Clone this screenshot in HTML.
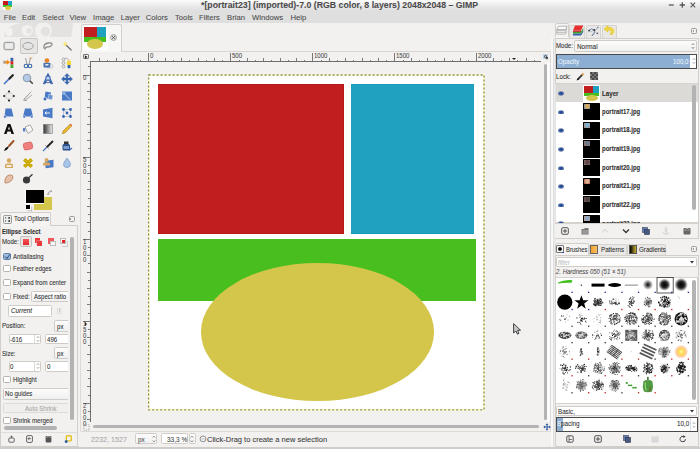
<!DOCTYPE html>
<html><head><meta charset="utf-8">
<style>
*{box-sizing:border-box;margin:0;padding:0}
html,body{width:700px;height:449px;overflow:hidden;background:#f2f1f0;font-family:"Liberation Sans",sans-serif;color:#3c3c3c}
.a{position:absolute}
.t{position:absolute;white-space:pre;line-height:1;-webkit-text-stroke:0.07px currentColor}
#top{left:0;top:0;width:700px;height:23px;background:linear-gradient(#fcfcfc 0px,#e9e9e9 6px,#dfdfdf 11px,#dfdfdf 23px)}
.menu{font-size:7.7px;color:#4a4a4a;top:13.5px}
.rl{font-size:6.8px;color:#4a4a4a;transform:scaleX(0.885);transform-origin:0 0}
.ui{font-size:6px;color:#3c3c3c}
</style></head><body>
<div id="top" class="a"></div>
<!-- app icon -->
<div class="a" style="left:2.7px;top:0.8px;width:9.6px;height:9.4px;background:#fff;border-radius:1px"></div>
<div class="a" style="left:3px;top:1px;width:5px;height:4px;background:#c8171c"></div>
<div class="a" style="left:8px;top:1px;width:3.8px;height:4px;background:#22a6d0"></div>
<div class="a" style="left:3px;top:5px;width:8.8px;height:1.8px;background:#3ec02a"></div>
<div class="a" style="left:4.5px;top:5.8px;width:6px;height:4px;border-radius:50%;background:#dcc840"></div>
<div class="t" style="left:201px;top:0.9px;font-size:8.75px;font-weight:bold;color:#4c4c4c">*[portrait23] (imported)-7.0 (RGB color, 8 layers) 2048x2048 – GIMP</div>
<!-- window controls -->
<svg class="a" style="left:660px;top:0" width="40" height="12" viewBox="660 0 40 12">
<path d="M668.8 5 H673.8" stroke="#5a5a5a" stroke-width="1.3"/>
<path d="M679.6 5 H685 M682.3 2.3 V7.7" stroke="#5a5a5a" stroke-width="1.3"/>
<path d="M690.6 2.7 L695.1 7.3 M695.1 2.7 L690.6 7.3" stroke="#5a5a5a" stroke-width="1.2"/>
</svg>
<!-- menu -->
<div class="t menu" style="left:3.7px">File</div>
<div class="t menu" style="left:22px">Edit</div>
<div class="t menu" style="left:42.5px">Select</div>
<div class="t menu" style="left:69.5px">View</div>
<div class="t menu" style="left:93px">Image</div>
<div class="t menu" style="left:120.7px">Layer</div>
<div class="t menu" style="left:145.7px">Colors</div>
<div class="t menu" style="left:175px">Tools</div>
<div class="t menu" style="left:199px">Filters</div>
<div class="t menu" style="left:227px">Brian</div>
<div class="t menu" style="left:252px">Windows</div>
<div class="t menu" style="left:290.5px">Help</div>

<!-- LEFT PANEL -->
<!-- wilber decoration -->
<svg class="a" style="left:0;top:0" width="80" height="40" viewBox="0 0 80 40">
<defs><clipPath id="wb"><path d="M4 36.9 C4.5 29 11 24.3 21 22.9 L73.1 22.9 L71.3 36.9 Z"/></clipPath></defs>
<g clip-path="url(#wb)">
<rect x="0" y="22" width="80" height="16" fill="#e3e2e0"/>
<ellipse cx="9.1" cy="32" rx="3.6" ry="4.4" fill="#f2f1f0"/>
<circle cx="27.2" cy="30.5" r="5.6" fill="#f2f1f0"/>
<circle cx="29" cy="30.8" r="2.6" fill="#e3e2e0"/>
<circle cx="43.4" cy="30.5" r="8.4" fill="#f2f1f0"/>
<circle cx="45.4" cy="31.4" r="4.7" fill="#e3e2e0"/>
</g>
</svg>
<!-- selected tool button -->
<div class="a" style="left:19.7px;top:38.3px;width:18px;height:15.3px;border:0.8px solid #c9c6c2;border-radius:2px;background:#e6e5e3"></div>
<svg class="a" style="left:3.4px;top:39.7px" width="12" height="12" viewBox="0 0 12 12"><rect x="1" y="2.3" width="10" height="7.4" rx="1.3" fill="#dcdcdc" stroke="#8a8a8a" stroke-width="0.9"/><rect x="2.2" y="3.5" width="7.6" height="5" fill="#ececec"/></svg>
<svg class="a" style="left:22.4px;top:39.7px" width="12" height="12" viewBox="0 0 12 12"><ellipse cx="6" cy="6" rx="5.2" ry="3.5" fill="#e3e3e3" stroke="#9a9a9a" stroke-width="0.9"/></svg>
<svg class="a" style="left:41.6px;top:39.7px" width="12" height="12" viewBox="0 0 12 12"><path d="M2 8.5 Q1 4 6 3 Q10.5 2.5 10 4.5 Q9 7 4.5 7.2 Q3 7.3 3.2 9.5" fill="none" stroke="#8a8a8a" stroke-width="1.3"/></svg>
<svg class="a" style="left:60.6px;top:39.7px" width="12" height="12" viewBox="0 0 12 12"><path d="M5.2 5.2 L10.2 10" stroke="#6a6a6a" stroke-width="1.2" stroke-linecap="round"/><circle cx="4.2" cy="4" r="1.7" fill="#f5e050"/><circle cx="4.2" cy="4" r="0.7" fill="#fffbd0"/></svg>
<svg class="a" style="left:3.4px;top:56.6px" width="12" height="12" viewBox="0 0 12 12"><rect x="7.5" y="0.8" width="2.8" height="3.4" fill="#3465a4"/><rect x="7.5" y="4.2" width="2.8" height="3.4" fill="#d42020"/><rect x="7.5" y="7.6" width="2.8" height="3.4" fill="#3faa2a"/><path d="M0.6 4 H4 V2.6 L7 5.2 L4 7.8 V6.4 H0.6 Z" fill="#f08a1c"/><rect x="0.3" y="3.6" width="2" height="3" fill="#aaa"/></svg>
<svg class="a" style="left:22.4px;top:56.6px" width="12" height="12" viewBox="0 0 12 12"><path d="M3.5 1 L5 7 M8.5 1 L7 7" stroke="#999" stroke-width="1" fill="none"/><path d="M7 1 H10.5" stroke="#e69a3a" stroke-width="0.8"/><circle cx="4" cy="9" r="1.8" fill="none" stroke="#3a66a8" stroke-width="1.1"/><circle cx="8" cy="9" r="1.8" fill="none" stroke="#3a66a8" stroke-width="1.1"/><rect x="5" y="8.4" width="2" height="1.2" fill="#3a66a8"/></svg>
<svg class="a" style="left:41.6px;top:56.6px" width="12" height="12" viewBox="0 0 12 12"><path d="M6.5 7 Q9 6 10.5 8 Q11.5 10 10 11 H5 Z" fill="#f4f4f4" stroke="#aaa" stroke-width="0.6"/><rect x="1.5" y="5.8" width="6.8" height="4.8" rx="0.8" fill="#4570b8"/><circle cx="4.9" cy="3.6" r="2.4" fill="#e8832a"/><rect x="3.3" y="7" width="3.2" height="1.6" fill="#e8e8e8"/></svg>
<svg class="a" style="left:60.6px;top:56.6px" width="12" height="12" viewBox="0 0 12 12"><circle cx="2.5" cy="2.5" r="1.4" fill="none" stroke="#999" stroke-width="0.8"/><circle cx="2.5" cy="6" r="1.4" fill="none" stroke="#999" stroke-width="0.8"/><circle cx="2.5" cy="9.5" r="1.4" fill="none" stroke="#999" stroke-width="0.8"/><path d="M3.5 1.5 Q6 0 8 3" stroke="#999" stroke-width="0.7" fill="none"/><path d="M6.3 3.5 L9.7 3.5 L10.3 7.5 L8 8.5 L5.7 7.5 Z" fill="#f2d23a"/><rect x="6.6" y="8" width="2.8" height="3.2" fill="#2e5fa8"/></svg>
<svg class="a" style="left:3.4px;top:72.8px" width="12" height="12" viewBox="0 0 12 12"><path d="M1.5 10.5 L7 5" stroke="#4a7ac6" stroke-width="1.7" stroke-linecap="round"/><path d="M6.5 5.5 L9.8 2.2" stroke="#222" stroke-width="2.2" stroke-linecap="round"/></svg>
<svg class="a" style="left:22.4px;top:72.8px" width="12" height="12" viewBox="0 0 12 12"><circle cx="5" cy="5" r="3.8" fill="#b5cbe6" stroke="#8a9bb0" stroke-width="1"/><path d="M7.8 7.8 L10.8 10.8" stroke="#444" stroke-width="1.5"/></svg>
<svg class="a" style="left:41.6px;top:72.8px" width="12" height="12" viewBox="0 0 12 12"><rect x="5" y="0.5" width="2" height="2.5" fill="#4a72b8"/><path d="M4.2 2.8 H7.8 L8.6 6 L10.8 10.8 L9 11 L7 7.5 H5 L3 11 L1.2 10.8 L3.4 6 Z" fill="#4a7ac6" stroke="#2d4f90" stroke-width="0.5"/><rect x="4.6" y="4" width="2.8" height="2.5" fill="#c8d8f0"/><path d="M2.5 9 Q6 10.5 9.5 9" stroke="#2d4f90" stroke-width="0.8" fill="none"/></svg>
<svg class="a" style="left:60.6px;top:72.8px" width="12" height="12" viewBox="0 0 12 12"><path d="M6 0.4 L8.4 3.1 H6.9 V5.1 H8.9 V3.6 L11.6 6 L8.9 8.4 V6.9 H6.9 V8.9 H8.4 L6 11.6 L3.6 8.9 H5.1 V6.9 H3.1 V8.4 L0.4 6 L3.1 3.6 V5.1 H5.1 V3.1 H3.6 Z" fill="#3a6ab8" stroke="#2a4f90" stroke-width="0.3" stroke-linejoin="round"/></svg>
<svg class="a" style="left:3.4px;top:90.1px" width="12" height="12" viewBox="0 0 12 12"><ellipse cx="6" cy="6" rx="4.2" ry="3" fill="#ececec" stroke="#bbb" stroke-width="0.6"/><circle cx="6" cy="1.5" r="1.1" fill="#222"/><circle cx="6" cy="10.5" r="1.1" fill="#222"/><circle cx="1.2" cy="6" r="1.1" fill="#222"/><circle cx="10.8" cy="6" r="1.1" fill="#222"/></svg>
<svg class="a" style="left:22.4px;top:90.1px" width="12" height="12" viewBox="0 0 12 12"><path d="M1.5 10 L8 3 M3 10.3 L10 5 M2 9 L9.5 1.5" stroke="#9a9a9a" stroke-width="0.8" fill="none"/><path d="M1.5 10 L4.5 10.5" stroke="#777" stroke-width="0.8"/></svg>
<svg class="a" style="left:41.6px;top:90.1px" width="12" height="12" viewBox="0 0 12 12"><path d="M3.5 1.5 L9 2.5 L8 9 L2.5 8 Z" fill="#4a7ac6"/><path d="M7 4 L11 5.5 L10 10 L6 9 Z" fill="#6a92d0" stroke="#fff" stroke-width="0.4"/><circle cx="3" cy="9" r="1.8" fill="#3a6ab8" stroke="#fff" stroke-width="0.5"/></svg>
<svg class="a" style="left:60.6px;top:90.1px" width="12" height="12" viewBox="0 0 12 12"><rect x="1" y="1.5" width="10" height="9" fill="#4a7ac6"/><path d="M2 2.5 L9 9.5" stroke="#cfe0f5" stroke-width="0.8"/><rect x="1" y="1.5" width="3.5" height="3" fill="#8fb0e0"/></svg>
<svg class="a" style="left:3.4px;top:106.6px" width="12" height="12" viewBox="0 0 12 12"><path d="M2.5 1.5 H8.5 L10.5 9.5 H1.5 Z" fill="#4a7ac6"/><circle cx="2" cy="9.8" r="1.4" fill="#3a6ab8" stroke="#fff" stroke-width="0.5"/></svg>
<svg class="a" style="left:22.4px;top:106.6px" width="12" height="12" viewBox="0 0 12 12"><path d="M3 1.5 H9 L11 9.5 H1 Z" fill="#4a7ac6"/><circle cx="2.2" cy="9.8" r="1.3" fill="#3a6ab8" stroke="#fff" stroke-width="0.5"/><circle cx="9.8" cy="9.8" r="1.3" fill="#3a6ab8" stroke="#fff" stroke-width="0.5"/></svg>
<svg class="a" style="left:41.6px;top:106.6px" width="12" height="12" viewBox="0 0 12 12"><path d="M1 2.5 L10.5 0.8 V11.2 L1 9.5 Z" fill="#4a7ac6"/><path d="M3 6 H8 M4.5 4.5 L3 6 L4.5 7.5" stroke="#fff" stroke-width="0.9" fill="none"/></svg>
<svg class="a" style="left:60.6px;top:106.6px" width="12" height="12" viewBox="0 0 12 12"><path d="M2.5 2.5 L9.5 2.5 L9.5 9.5 L2.5 9.5 Z M2.5 2.5 L6 6 L9.5 9.5" stroke="#9ab" stroke-width="0.6" fill="none"/><circle cx="2.5" cy="2.5" r="1.4" fill="#3465b4"/><circle cx="9.5" cy="2.5" r="1.4" fill="#3465b4"/><circle cx="2.5" cy="9.5" r="1.4" fill="#3465b4"/><circle cx="9.5" cy="9.5" r="1.4" fill="#3465b4"/><circle cx="6" cy="6" r="1.4" fill="#3465b4"/></svg>
<svg class="a" style="left:3.4px;top:123.1px" width="12" height="12" viewBox="0 0 12 12"><path d="M1 11 L4.6 1 H7.4 L11 11 H8.4 L7.6 8.6 H4.4 L3.6 11 Z M5 6.6 H7 L6 3.6 Z" fill="#111"/></svg>
<svg class="a" style="left:22.4px;top:123.1px" width="12" height="12" viewBox="0 0 12 12"><path d="M3 4 L8 1.8 L11 7 L6 10.5 Z" fill="#f7f7f7" stroke="#888" stroke-width="0.7"/><rect x="1" y="5" width="2.3" height="3.5" fill="#5a80c0"/></svg>
<svg class="a" style="left:41.6px;top:123.1px" width="12" height="12" viewBox="0 0 12 12"><defs><linearGradient id="gb" x1="0" x2="1"><stop offset="0" stop-color="#333"/><stop offset="1" stop-color="#eee"/></linearGradient></defs><rect x="1.5" y="1.5" width="9" height="9" fill="url(#gb)" stroke="#777" stroke-width="0.6"/></svg>
<svg class="a" style="left:60.6px;top:123.1px" width="12" height="12" viewBox="0 0 12 12"><path d="M1.3 10.7 L2 8 L9 1.2 L10.8 3 L4 9.9 Z" fill="#e8b830" stroke="#a07010" stroke-width="0.5"/><path d="M9 1.2 L10.8 3 L11.3 2.3 L9.7 0.7 Z" fill="#e04040"/></svg>
<svg class="a" style="left:3.4px;top:140.4px" width="12" height="12" viewBox="0 0 12 12"><path d="M6 6 L10.5 1" stroke="#a0562a" stroke-width="2" stroke-linecap="round"/><path d="M0.8 11 Q2 7.5 4.5 6.5 L5.8 7.6 Q4.8 10 0.8 11 Z" fill="#111"/></svg>
<svg class="a" style="left:22.4px;top:140.4px" width="12" height="12" viewBox="0 0 12 12"><rect x="1.5" y="2.5" width="9" height="7" rx="2" fill="#f08080" stroke="#d05050" stroke-width="0.6" transform="rotate(-12 6 6)"/></svg>
<svg class="a" style="left:41.6px;top:140.4px" width="12" height="12" viewBox="0 0 12 12"><path d="M5.5 6.5 L10.5 1.5" stroke="#222" stroke-width="1.8" stroke-linecap="round"/><path d="M1 11 L5 7" stroke="#4a7ac6" stroke-width="1.2"/><path d="M3.5 5.5 L6.5 8.5" stroke="#555" stroke-width="0.8"/></svg>
<svg class="a" style="left:60.6px;top:140.4px" width="12" height="12" viewBox="0 0 12 12"><rect x="1.5" y="4" width="7.5" height="6.5" rx="1.5" fill="#2d4f88"/><rect x="3" y="1.5" width="4.5" height="2.5" fill="#333"/><rect x="2.5" y="6" width="5.5" height="3" fill="#7a9cd0"/><path d="M8 10.5 L11 8" stroke="#3a6ab8" stroke-width="1.2"/></svg>
<svg class="a" style="left:3.4px;top:156.9px" width="12" height="12" viewBox="0 0 12 12"><circle cx="6" cy="3.5" r="2.2" fill="#d4a860"/><path d="M2 11 V8 Q2 6.5 4 6.5 H8 Q10 6.5 10 8 V11 Z" fill="#d4a860"/><rect x="3.5" y="8.2" width="5" height="1.6" fill="#fff"/></svg>
<svg class="a" style="left:22.4px;top:156.9px" width="12" height="12" viewBox="0 0 12 12"><path d="M2 3.5 L3.5 2 L10 8.5 L8.5 10 Z M8.5 2 L10 3.5 L3.5 10 L2 8.5 Z" fill="#e5c420" stroke="#c8a800" stroke-width="1.6" stroke-linejoin="round"/></svg>
<svg class="a" style="left:41.6px;top:156.9px" width="12" height="12" viewBox="0 0 12 12"><rect x="3.5" y="4" width="8" height="7.5" fill="#4a7ac6" transform="skewY(-6)"/><circle cx="4.5" cy="3" r="2" fill="#d4a860"/><path d="M1 8.5 V6.5 Q1 5.5 2.5 5.5 H6.5 Q8 5.5 8 6.5 V8.5 Z" fill="#d4a860"/></svg>
<svg class="a" style="left:60.6px;top:156.9px" width="12" height="12" viewBox="0 0 12 12"><path d="M6 1 Q9.5 5 9.5 7.5 Q9.5 10.5 6 10.5 Q2.5 10.5 2.5 7.5 Q2.5 5 6 1 Z" fill="#a8c4e8" stroke="#6a8cc0" stroke-width="0.6"/></svg>
<svg class="a" style="left:3.4px;top:173.4px" width="12" height="12" viewBox="0 0 12 12"><path d="M2 10 Q1 6 4 3 Q7 1 9.5 2.5 Q11 5 8 8 Q5 10.5 2 10 Z" fill="#e6c0a8" stroke="#b07850" stroke-width="0.7"/></svg>
<svg class="a" style="left:22.4px;top:173.4px" width="12" height="12" viewBox="0 0 12 12"><circle cx="4.5" cy="7" r="3.6" fill="#3a3a3a"/><path d="M6.5 5 L10.5 1.2" stroke="#3a3a3a" stroke-width="1.3"/></svg>
<!-- FG/BG -->
<div class="a" style="left:33.9px;top:197px;width:18.1px;height:13px;background:#d3c64b"></div>
<div class="a" style="left:25.3px;top:189.5px;width:19.2px;height:14.3px;background:#fff"></div>
<div class="a" style="left:25.8px;top:190px;width:18.2px;height:13.3px;background:#000"></div>
<div class="a" style="left:26px;top:205px;width:3.6px;height:3.6px;background:#000;box-shadow:1.2px 1.2px 0 0.3px #fff, 1.8px 1.8px 0 0.3px #999"></div>
<svg class="a" style="left:46.5px;top:189.5px" width="6" height="6" viewBox="0 0 6 6"><path d="M1 4.5 Q1 1 4.5 1 M3.5 0.2 L4.8 1 L3.5 2 M0.2 3.5 L1 4.8 L2 3.5" fill="none" stroke="#888" stroke-width="0.7"/></svg>
<!-- tool options tab -->
<div class="a" style="left:0.3px;top:211.7px;width:50.5px;height:14px;border:0.8px solid #d2cfca;border-bottom:none;border-radius:2px 2px 0 0;background:#f5f4f3"></div>
<div class="a" style="left:50.5px;top:225px;width:27px;height:0.8px;background:#d2cfca"></div>
<div class="a" style="left:2.8px;top:215.2px;width:8.8px;height:8.5px;border:0.8px solid #999;border-radius:1.5px;background:#f0f0f0"></div>
<svg class="a" style="left:2.8px;top:215.2px" width="9" height="9" viewBox="0 0 9 9"><path d="M2.6 2.2 V3.4 M2.6 5.4 V6.6 M6.2 2.2 L5.4 3.2 H7 Z M6.2 6.8 L5.4 5.8 H7 Z" stroke="#333" stroke-width="0.9" fill="#333"/></svg>
<div class="t" style="left:14.3px;top:216.2px;font-size:7.12px;color:#2e2e2e;transform:scaleX(0.885);transform-origin:0 0">Tool Options</div>
<div class="a" style="left:68.6px;top:216px;width:6px;height:6px;border:0.8px solid #999;border-radius:1.5px"></div>
<div class="a" style="left:70.4px;top:217.9px;width:0;height:0;border-top:1.1px solid transparent;border-bottom:1.1px solid transparent;border-right:1.6px solid #444"></div>
<!-- panel frame -->
<div class="a" style="left:0.3px;top:225px;width:77.5px;height:221.5px;border:0.8px solid #d2cfca;border-top:none"></div>
<div class="t" style="left:2px;top:229.30px;font-size:6.78px;font-weight:bold;color:#2e2e2e;transform:scaleX(0.885);transform-origin:0 0">Ellipse Select</div>
<div class="t" style="left:2px;top:239.49px;font-size:6.89px;color:#2e2e2e;transform:scaleX(0.885);transform-origin:0 0">Mode:</div>
<div class="a" style="left:20.4px;top:236px;width:11.3px;height:11.3px;border:0.8px solid #c3c0bb;border-radius:1.5px;background:#e7e6e4"></div>
<div class="a" style="left:23.1px;top:238.8px;width:6.1px;height:6.2px;background:linear-gradient(#f4575a,#e5252a)"></div>
<div class="a" style="left:35px;top:238.3px;width:5px;height:5px;background:#e9373b"></div>
<div class="a" style="left:37px;top:240.5px;width:5.2px;height:5.2px;background:#e83a3e;box-shadow:-0.5px -0.5px 0 #f7a0a0"></div>
<div class="a" style="left:48px;top:238.3px;width:5.5px;height:5.5px;background:#f05a5e"></div>
<div class="a" style="left:50px;top:240.5px;width:5.5px;height:5.5px;background:#fafafa;border:0.5px solid #bbb"></div>
<div class="a" style="left:60.4px;top:238.3px;width:6px;height:6px;border:0.6px solid #bbb;background:#fafafa"></div>
<div class="a" style="left:62.2px;top:240.2px;width:3px;height:3px;background:#e5252a"></div>
<div class="a" style="left:62px;top:241px;width:6px;height:6px;border:0.6px solid #ccc;border-top:none;border-left:none"></div>
<!-- checkboxes -->
<div class="a" style="left:3.2px;top:252.5px;width:7.6px;height:7px;border:0.8px solid #5a7ea8;border-radius:1.5px;background:linear-gradient(#a8c3e0,#86a9d0)"></div>
<svg class="a" style="left:3.6px;top:252.8px" width="7" height="7" viewBox="0 0 7 7"><path d="M1.2 3.6 L2.9 5.4 L6.2 1" fill="none" stroke="#2f4a6e" stroke-width="1"/></svg>
<div class="t" style="left:13.4px;top:253.60px;font-size:6.78px;color:#2e2e2e;transform:scaleX(0.885);transform-origin:0 0">Antialiasing</div>
<div class="a" style="left:3.2px;top:265px;width:7.6px;height:7.2px;border:0.8px solid #b5b2ad;border-radius:1.5px;background:#fff"></div>
<div class="t" style="left:13.4px;top:266.30px;font-size:6.78px;color:#2e2e2e;transform:scaleX(0.885);transform-origin:0 0">Feather edges</div>
<div class="a" style="left:3.2px;top:278.6px;width:7.6px;height:7.2px;border:0.8px solid #b5b2ad;border-radius:1.5px;background:#fff"></div>
<div class="t" style="left:13.4px;top:279.89px;font-size:6.89px;color:#2e2e2e;transform:scaleX(0.885);transform-origin:0 0">Expand from center</div>
<div class="a" style="left:3.2px;top:292.8px;width:7.6px;height:7.2px;border:0.8px solid #b5b2ad;border-radius:1.5px;background:#fff"></div>
<div class="t" style="left:13.4px;top:294.09px;font-size:6.89px;color:#2e2e2e;transform:scaleX(0.885);transform-origin:0 0">Fixed:</div>
<div class="a" style="left:31.2px;top:290.8px;width:40px;height:11.6px;border:0.8px solid #cfccc7;border-radius:1.5px;background:linear-gradient(#fcfcfc,#f0f0f0)"></div>
<div class="t" style="left:33.8px;top:294.09px;font-size:6.89px;color:#2e2e2e;transform:scaleX(0.885);transform-origin:0 0">Aspect ratio</div>
<div class="a" style="left:8px;top:305px;width:43.7px;height:11.6px;border:0.8px solid #cfccc7;border-radius:1.5px;background:#fff"></div>
<div class="t" style="left:10.5px;top:308.26px;font-size:7.12px;font-style:italic;color:#2e2e2e;transform:scaleX(0.885);transform-origin:0 0">Current</div>
<div class="a" style="left:56.8px;top:307.6px;width:4.6px;height:6.4px;border:0.6px solid #dcdad6;border-radius:1px;background:#f5f5f5"></div>
<div class="a" style="left:58.6px;top:309.4px;width:1px;height:3px;background:#ccc"></div>
<!-- position -->
<div class="t" style="left:2px;top:322.89px;font-size:6.89px;color:#2e2e2e;transform:scaleX(0.885);transform-origin:0 0">Position:</div>
<div class="a" style="left:54.3px;top:319.9px;width:17px;height:12.1px;border:0.8px solid #cfccc7;border-radius:1.5px;background:linear-gradient(#fcfcfc,#f0f0f0)"></div>
<div class="t" style="left:57px;top:323.69px;font-size:6.89px;color:#2e2e2e;transform:scaleX(0.885);transform-origin:0 0">px</div>
<div class="a" style="left:8.6px;top:333.8px;width:32.4px;height:10.4px;border:0.8px solid #cfccc7;border-radius:1.5px;background:#fff"></div>
<div class="a" style="left:34.4px;top:335.2px;width:0.6px;height:8.4px;background:#dcdad6"></div>
<svg class="a" style="left:35.7px;top:335.1px" width="4" height="8" viewBox="0 0 4 8"><path d="M0.7 2.9 L2 1.5 L3.3 2.9 M0.7 5.1 L2 6.5 L3.3 5.1" fill="none" stroke="#888" stroke-width="0.7"/></svg>
<div class="t" style="left:10.3px;top:336.59px;font-size:6.89px;color:#2e2e2e;transform:scaleX(0.885);transform-origin:0 0">-616</div>
<div class="a" style="left:44.5px;top:333.8px;width:30px;height:10.4px;border:0.8px solid #cfccc7;border-radius:1.5px;background:#fff"></div>
<div class="t" style="left:47px;top:336.59px;font-size:6.89px;color:#2e2e2e;transform:scaleX(0.885);transform-origin:0 0">496</div>
<div class="t" style="left:2px;top:350.69px;font-size:6.89px;color:#2e2e2e;transform:scaleX(0.885);transform-origin:0 0">Size:</div>
<div class="a" style="left:54.3px;top:347.3px;width:17px;height:12px;border:0.8px solid #cfccc7;border-radius:1.5px;background:linear-gradient(#fcfcfc,#f0f0f0)"></div>
<div class="t" style="left:57px;top:350.89px;font-size:6.89px;color:#2e2e2e;transform:scaleX(0.885);transform-origin:0 0">px</div>
<div class="a" style="left:8.6px;top:361px;width:32.4px;height:10.5px;border:0.8px solid #cfccc7;border-radius:1.5px;background:#fff"></div>
<div class="a" style="left:34.4px;top:362.3px;width:0.6px;height:8.8px;background:#dcdad6"></div>
<svg class="a" style="left:35.7px;top:362.3px" width="4" height="8" viewBox="0 0 4 8"><path d="M0.7 2.9 L2 1.5 L3.3 2.9 M0.7 5.1 L2 6.5 L3.3 5.1" fill="none" stroke="#888" stroke-width="0.7"/></svg>
<div class="t" style="left:10.3px;top:363.89px;font-size:6.89px;color:#2e2e2e;transform:scaleX(0.885);transform-origin:0 0">0</div>
<div class="a" style="left:44.5px;top:361px;width:30px;height:10.5px;border:0.8px solid #cfccc7;border-radius:1.5px;background:#fff"></div>
<div class="t" style="left:47px;top:363.89px;font-size:6.89px;color:#2e2e2e;transform:scaleX(0.885);transform-origin:0 0">0</div>
<div class="a" style="left:3.2px;top:376px;width:7.6px;height:7.2px;border:0.8px solid #b5b2ad;border-radius:1.5px;background:#fff"></div>
<div class="t" style="left:13.4px;top:377.29px;font-size:6.89px;color:#2e2e2e;transform:scaleX(0.885);transform-origin:0 0">Highlight</div>
<div class="a" style="left:2.8px;top:388.3px;width:68px;height:11.5px;border:0.8px solid #cfccc7;border-radius:1.5px;background:linear-gradient(#fcfcfc,#f0f0f0)"></div>
<div class="t" style="left:5.2px;top:391.49px;font-size:6.89px;color:#2e2e2e;transform:scaleX(0.885);transform-origin:0 0">No guides</div>
<div class="a" style="left:2.8px;top:403px;width:68px;height:10px;border:0.8px solid #dddbd7;border-radius:1.5px;background:#f0efee"></div>
<div class="t" style="left:24.8px;top:405.69px;font-size:6.89px;color:#a5a5a5;transform:scaleX(0.885);transform-origin:0 0">Auto Shrink</div>
<div class="a" style="left:3.2px;top:417px;width:7.6px;height:7.2px;border:0.8px solid #b5b2ad;border-radius:1.5px;background:#fff"></div>
<div class="t" style="left:13.4px;top:418.29px;font-size:6.89px;color:#2e2e2e;transform:scaleX(0.885);transform-origin:0 0">Shrink merged</div>
<div class="a" style="left:68.4px;top:288px;width:8.6px;height:127px;background:#f2f1f0"></div>
<!-- scrollbars -->
<div class="a" style="left:70.2px;top:237.4px;width:3.5px;height:182.6px;border-radius:1.7px;background:#b3b3b3"></div>
<div class="a" style="left:3.8px;top:426px;width:53.2px;height:4px;border-radius:2px;background:#b3b3b3"></div>
<div class="a" style="left:0.6px;top:431.5px;width:77px;height:0.8px;background:#dedcd8"></div>
<!-- bottom toolbar icons -->
<svg class="a" style="left:7.5px;top:435px" width="7" height="8" viewBox="0 0 7 8"><rect x="0.8" y="3" width="5.4" height="4.2" rx="1" fill="none" stroke="#555" stroke-width="0.9"/><path d="M3.5 0.5 V2.5 M2.4 1.5 L3.5 2.6 L4.6 1.5" stroke="#555" stroke-width="0.8" fill="none"/></svg>
<svg class="a" style="left:25.8px;top:434.6px" width="7" height="8" viewBox="0 0 7 8"><rect x="0.6" y="0.6" width="5.8" height="6.8" rx="1.2" fill="none" stroke="#555" stroke-width="0.9"/><path d="M2 3.6 H5 M3.3 2.2 L2 3.6 L3.3 5" stroke="#555" stroke-width="0.8" fill="none"/></svg>
<svg class="a" style="left:44.6px;top:434.6px" width="7" height="8" viewBox="0 0 7 8"><rect x="0.6" y="1" width="5.8" height="6.4" rx="0.8" fill="#555"/><path d="M1.5 2.5 L3.5 1 L5.5 2.5" stroke="#eee" stroke-width="0.7" fill="none"/></svg>
<svg class="a" style="left:63.5px;top:434.6px" width="8" height="8" viewBox="0 0 8 8"><rect x="2.3" y="0.7" width="5" height="5.2" rx="1" fill="none" stroke="#e3c321" stroke-width="1.4"/><circle cx="2.2" cy="6.4" r="1.5" fill="#3465a4"/></svg>
<div class="a" style="left:0;top:446px;width:79px;height:1px;background:#d2cfca"></div>


<!-- panel separators -->

<!-- CANVAS -->
<!-- image tab bar -->
<div class="a" style="left:121px;top:50.5px;width:430px;height:1px;background:#d8d5d0"></div>
<div class="a" style="left:80.5px;top:24px;width:41.5px;height:27.5px;background:#f7f7f6;border:1px solid #d3d0cb;border-bottom:none;border-radius:2px 2px 0 0"></div>
<div class="a" style="left:82.5px;top:25.5px;width:25px;height:24px;background:#fff"></div>
<div class="a" style="left:83.7px;top:26.7px;width:13.2px;height:10.5px;background:#c11f1f"></div>
<div class="a" style="left:97.4px;top:26.7px;width:8.5px;height:10.5px;background:#1fa2c0"></div>
<div class="a" style="left:83.7px;top:37.2px;width:22.2px;height:4.5px;background:#48be1f"></div>
<div class="a" style="left:86.8px;top:38.9px;width:16px;height:10px;border-radius:50%;background:#d3c64b"></div>
<svg class="a" style="left:109.5px;top:33.5px" width="7" height="7" viewBox="0 0 7 7"><circle cx="3.5" cy="3.5" r="2.9" fill="#e9e9e9" stroke="#8a8a8a" stroke-width="0.8"/><path d="M2.1 2.1 L4.9 4.9 M4.9 2.1 L2.1 4.9" stroke="#333" stroke-width="0.8"/></svg>
<!-- canvas frame -->
<div class="a" style="left:79.8px;top:51px;width:471.2px;height:380.5px;border:1px solid #dedbd6;border-top:none;border-radius:0 0 2px 2px"></div>
<div class="a" style="left:550px;top:51px;width:1px;height:380px;background:#dcd9d4"></div>
<!-- ruler corner button -->
<div class="a" style="left:83.4px;top:54.3px;width:5.2px;height:5.1px;border:0.8px solid #777;border-radius:1px;background:#f4f4f4"></div>
<svg class="a" style="left:83.4px;top:54.3px" width="6" height="6" viewBox="0 0 6 6"><path d="M1.9 1.3 L4.5 3 L1.9 4.7 Z" fill="#222"/></svg>
<!-- rulers -->
<div class="a" style="left:90.5px;top:60.8px;width:450.5px;height:0.9px;background:#6e6e6e"></div>
<div class="a" style="left:89.8px;top:61px;width:0.9px;height:361px;background:#6e6e6e"></div>
<div class="a" style="left:99.1px;top:58.1px;width:0.9px;height:3.2px;background:#7a7a7a"></div>
<div class="a" style="left:107.3px;top:59.6px;width:0.9px;height:1.7px;background:#7a7a7a"></div>
<div class="a" style="left:115.5px;top:58.1px;width:0.9px;height:3.2px;background:#7a7a7a"></div>
<div class="a" style="left:123.7px;top:59.6px;width:0.9px;height:1.7px;background:#7a7a7a"></div>
<div class="a" style="left:131.9px;top:58.1px;width:0.9px;height:3.2px;background:#7a7a7a"></div>
<div class="a" style="left:140.1px;top:59.6px;width:0.9px;height:1.7px;background:#7a7a7a"></div>
<div class="a" style="left:148.3px;top:53.4px;width:0.8px;height:8px;background:#777"></div>
<div class="t rl" style="left:149.5px;top:53.2px">0</div>
<div class="a" style="left:156.5px;top:59.6px;width:0.9px;height:1.7px;background:#7a7a7a"></div>
<div class="a" style="left:164.7px;top:58.1px;width:0.9px;height:3.2px;background:#7a7a7a"></div>
<div class="a" style="left:172.9px;top:59.6px;width:0.9px;height:1.7px;background:#7a7a7a"></div>
<div class="a" style="left:181.1px;top:58.1px;width:0.9px;height:3.2px;background:#7a7a7a"></div>
<div class="a" style="left:189.3px;top:59.6px;width:0.9px;height:1.7px;background:#7a7a7a"></div>
<div class="a" style="left:197.5px;top:58.1px;width:0.9px;height:3.2px;background:#7a7a7a"></div>
<div class="a" style="left:205.7px;top:59.6px;width:0.9px;height:1.7px;background:#7a7a7a"></div>
<div class="a" style="left:213.9px;top:58.1px;width:0.9px;height:3.2px;background:#7a7a7a"></div>
<div class="a" style="left:222.1px;top:59.6px;width:0.9px;height:1.7px;background:#7a7a7a"></div>
<div class="a" style="left:230.3px;top:53.4px;width:0.8px;height:8px;background:#777"></div>
<div class="t rl" style="left:231.5px;top:53.2px">500</div>
<div class="a" style="left:238.5px;top:59.6px;width:0.9px;height:1.7px;background:#7a7a7a"></div>
<div class="a" style="left:246.7px;top:58.1px;width:0.9px;height:3.2px;background:#7a7a7a"></div>
<div class="a" style="left:254.9px;top:59.6px;width:0.9px;height:1.7px;background:#7a7a7a"></div>
<div class="a" style="left:263.1px;top:58.1px;width:0.9px;height:3.2px;background:#7a7a7a"></div>
<div class="a" style="left:271.3px;top:59.6px;width:0.9px;height:1.7px;background:#7a7a7a"></div>
<div class="a" style="left:279.6px;top:58.1px;width:0.9px;height:3.2px;background:#7a7a7a"></div>
<div class="a" style="left:287.8px;top:59.6px;width:0.9px;height:1.7px;background:#7a7a7a"></div>
<div class="a" style="left:296.0px;top:58.1px;width:0.9px;height:3.2px;background:#7a7a7a"></div>
<div class="a" style="left:304.2px;top:59.6px;width:0.9px;height:1.7px;background:#7a7a7a"></div>
<div class="a" style="left:312.4px;top:53.4px;width:0.8px;height:8px;background:#777"></div>
<div class="t rl" style="left:313.6px;top:53.2px">1000</div>
<div class="a" style="left:320.6px;top:59.6px;width:0.9px;height:1.7px;background:#7a7a7a"></div>
<div class="a" style="left:328.8px;top:58.1px;width:0.9px;height:3.2px;background:#7a7a7a"></div>
<div class="a" style="left:337.0px;top:59.6px;width:0.9px;height:1.7px;background:#7a7a7a"></div>
<div class="a" style="left:345.2px;top:58.1px;width:0.9px;height:3.2px;background:#7a7a7a"></div>
<div class="a" style="left:353.4px;top:59.6px;width:0.9px;height:1.7px;background:#7a7a7a"></div>
<div class="a" style="left:361.6px;top:58.1px;width:0.9px;height:3.2px;background:#7a7a7a"></div>
<div class="a" style="left:369.8px;top:59.6px;width:0.9px;height:1.7px;background:#7a7a7a"></div>
<div class="a" style="left:378.0px;top:58.1px;width:0.9px;height:3.2px;background:#7a7a7a"></div>
<div class="a" style="left:386.2px;top:59.6px;width:0.9px;height:1.7px;background:#7a7a7a"></div>
<div class="a" style="left:394.4px;top:53.4px;width:0.8px;height:8px;background:#777"></div>
<div class="t rl" style="left:395.6px;top:53.2px">1500</div>
<div class="a" style="left:402.6px;top:59.6px;width:0.9px;height:1.7px;background:#7a7a7a"></div>
<div class="a" style="left:410.8px;top:58.1px;width:0.9px;height:3.2px;background:#7a7a7a"></div>
<div class="a" style="left:419.0px;top:59.6px;width:0.9px;height:1.7px;background:#7a7a7a"></div>
<div class="a" style="left:427.2px;top:58.1px;width:0.9px;height:3.2px;background:#7a7a7a"></div>
<div class="a" style="left:435.4px;top:59.6px;width:0.9px;height:1.7px;background:#7a7a7a"></div>
<div class="a" style="left:443.6px;top:58.1px;width:0.9px;height:3.2px;background:#7a7a7a"></div>
<div class="a" style="left:451.8px;top:59.6px;width:0.9px;height:1.7px;background:#7a7a7a"></div>
<div class="a" style="left:460.0px;top:58.1px;width:0.9px;height:3.2px;background:#7a7a7a"></div>
<div class="a" style="left:468.2px;top:59.6px;width:0.9px;height:1.7px;background:#7a7a7a"></div>
<div class="a" style="left:476.4px;top:53.4px;width:0.8px;height:8px;background:#777"></div>
<div class="t rl" style="left:477.6px;top:53.2px">2000</div>
<div class="a" style="left:484.6px;top:59.6px;width:0.9px;height:1.7px;background:#7a7a7a"></div>
<div class="a" style="left:492.8px;top:58.1px;width:0.9px;height:3.2px;background:#7a7a7a"></div>
<div class="a" style="left:501.0px;top:59.6px;width:0.9px;height:1.7px;background:#7a7a7a"></div>
<div class="a" style="left:509.2px;top:58.1px;width:0.9px;height:3.2px;background:#7a7a7a"></div>
<div class="a" style="left:517.4px;top:59.6px;width:0.9px;height:1.7px;background:#7a7a7a"></div>
<div class="a" style="left:525.6px;top:58.1px;width:0.9px;height:3.2px;background:#7a7a7a"></div>
<div class="a" style="left:533.8px;top:59.6px;width:0.9px;height:1.7px;background:#7a7a7a"></div>
<div class="a" style="left:511.6px;top:58.2px;width:0;height:0;border-left:2.4px solid transparent;border-right:2.4px solid transparent;border-top:2.8px solid #222"></div>
<div class="a" style="left:88.4px;top:66.4px;width:1.7px;height:0.9px;background:#7a7a7a"></div>
<div class="a" style="left:82.6px;top:74.6px;width:8px;height:0.9px;background:#7a7a7a"></div>
<div class="t rl" style="left:83px;top:74.8px">0</div>
<div class="a" style="left:88.4px;top:82.8px;width:1.7px;height:0.9px;background:#7a7a7a"></div>
<div class="a" style="left:87px;top:91.0px;width:3.2px;height:0.9px;background:#7a7a7a"></div>
<div class="a" style="left:88.4px;top:99.2px;width:1.7px;height:0.9px;background:#7a7a7a"></div>
<div class="a" style="left:87px;top:107.4px;width:3.2px;height:0.9px;background:#7a7a7a"></div>
<div class="a" style="left:88.4px;top:115.6px;width:1.7px;height:0.9px;background:#7a7a7a"></div>
<div class="a" style="left:87px;top:123.8px;width:3.2px;height:0.9px;background:#7a7a7a"></div>
<div class="a" style="left:88.4px;top:132.0px;width:1.7px;height:0.9px;background:#7a7a7a"></div>
<div class="a" style="left:87px;top:140.2px;width:3.2px;height:0.9px;background:#7a7a7a"></div>
<div class="a" style="left:88.4px;top:148.4px;width:1.7px;height:0.9px;background:#7a7a7a"></div>
<div class="a" style="left:82.6px;top:156.6px;width:8px;height:0.9px;background:#7a7a7a"></div>
<div class="t rl" style="left:83px;top:156.8px">5</div>
<div class="t rl" style="left:83px;top:162.8px">0</div>
<div class="t rl" style="left:83px;top:168.8px">0</div>
<div class="a" style="left:88.4px;top:164.8px;width:1.7px;height:0.9px;background:#7a7a7a"></div>
<div class="a" style="left:87px;top:173.0px;width:3.2px;height:0.9px;background:#7a7a7a"></div>
<div class="a" style="left:88.4px;top:181.2px;width:1.7px;height:0.9px;background:#7a7a7a"></div>
<div class="a" style="left:87px;top:189.4px;width:3.2px;height:0.9px;background:#7a7a7a"></div>
<div class="a" style="left:88.4px;top:197.6px;width:1.7px;height:0.9px;background:#7a7a7a"></div>
<div class="a" style="left:87px;top:205.8px;width:3.2px;height:0.9px;background:#7a7a7a"></div>
<div class="a" style="left:88.4px;top:214.1px;width:1.7px;height:0.9px;background:#7a7a7a"></div>
<div class="a" style="left:87px;top:222.3px;width:3.2px;height:0.9px;background:#7a7a7a"></div>
<div class="a" style="left:88.4px;top:230.5px;width:1.7px;height:0.9px;background:#7a7a7a"></div>
<div class="a" style="left:82.6px;top:238.7px;width:8px;height:0.9px;background:#7a7a7a"></div>
<div class="t rl" style="left:83px;top:238.9px">1</div>
<div class="t rl" style="left:83px;top:244.9px">0</div>
<div class="t rl" style="left:83px;top:250.9px">0</div>
<div class="t rl" style="left:83px;top:256.9px">0</div>
<div class="a" style="left:88.4px;top:246.9px;width:1.7px;height:0.9px;background:#7a7a7a"></div>
<div class="a" style="left:87px;top:255.1px;width:3.2px;height:0.9px;background:#7a7a7a"></div>
<div class="a" style="left:88.4px;top:263.3px;width:1.7px;height:0.9px;background:#7a7a7a"></div>
<div class="a" style="left:87px;top:271.5px;width:3.2px;height:0.9px;background:#7a7a7a"></div>
<div class="a" style="left:88.4px;top:279.7px;width:1.7px;height:0.9px;background:#7a7a7a"></div>
<div class="a" style="left:87px;top:287.9px;width:3.2px;height:0.9px;background:#7a7a7a"></div>
<div class="a" style="left:88.4px;top:296.1px;width:1.7px;height:0.9px;background:#7a7a7a"></div>
<div class="a" style="left:87px;top:304.3px;width:3.2px;height:0.9px;background:#7a7a7a"></div>
<div class="a" style="left:88.4px;top:312.5px;width:1.7px;height:0.9px;background:#7a7a7a"></div>
<div class="a" style="left:82.6px;top:320.7px;width:8px;height:0.9px;background:#7a7a7a"></div>
<div class="t rl" style="left:83px;top:320.9px">1</div>
<div class="t rl" style="left:83px;top:326.9px">5</div>
<div class="t rl" style="left:83px;top:332.9px">0</div>
<div class="t rl" style="left:83px;top:338.9px">0</div>
<div class="a" style="left:88.4px;top:328.9px;width:1.7px;height:0.9px;background:#7a7a7a"></div>
<div class="a" style="left:87px;top:337.1px;width:3.2px;height:0.9px;background:#7a7a7a"></div>
<div class="a" style="left:88.4px;top:345.3px;width:1.7px;height:0.9px;background:#7a7a7a"></div>
<div class="a" style="left:87px;top:353.5px;width:3.2px;height:0.9px;background:#7a7a7a"></div>
<div class="a" style="left:88.4px;top:361.7px;width:1.7px;height:0.9px;background:#7a7a7a"></div>
<div class="a" style="left:87px;top:369.9px;width:3.2px;height:0.9px;background:#7a7a7a"></div>
<div class="a" style="left:88.4px;top:378.1px;width:1.7px;height:0.9px;background:#7a7a7a"></div>
<div class="a" style="left:87px;top:386.3px;width:3.2px;height:0.9px;background:#7a7a7a"></div>
<div class="a" style="left:88.4px;top:394.5px;width:1.7px;height:0.9px;background:#7a7a7a"></div>
<div class="a" style="left:82.6px;top:402.7px;width:8px;height:0.9px;background:#7a7a7a"></div>
<div class="t rl" style="left:83px;top:402.9px">2</div>
<div class="t rl" style="left:83px;top:408.9px">0</div>
<div class="t rl" style="left:83px;top:414.9px">0</div>
<div class="t rl" style="left:83px;top:420.9px">0</div>
<div class="a" style="left:88.4px;top:410.9px;width:1.7px;height:0.9px;background:#7a7a7a"></div>
<div class="a" style="left:87px;top:419.1px;width:3.2px;height:0.9px;background:#7a7a7a"></div>
<div class="a" style="left:84.6px;top:321.6px;width:0;height:0;border-top:2.4px solid transparent;border-bottom:2.4px solid transparent;border-left:2.8px solid #222"></div>
<!-- zoom button -->
<div class="a" style="left:543px;top:54.3px;width:5px;height:5px;background:#bcd0e6"></div>
<div class="a" style="left:543.8px;top:54.9px;width:2.8px;height:2.8px;border:0.7px solid #444;border-radius:50%"></div>
<div class="a" style="left:546.3px;top:57.4px;width:1.8px;height:1.8px;background:#333;transform:rotate(45deg)"></div>
<!-- image -->
<div class="a" style="left:148px;top:74px;width:336.5px;height:336.5px;background:#fff"></div>
<div class="a" style="left:157.8px;top:84.3px;width:186px;height:149.7px;background:#c11f1f;box-shadow:inset 0 0.6px 0 #b3100f,inset -0.6px 0 0 #b3100f,inset 0 -0.6px 0 #b3100f"></div>
<div class="a" style="left:350.8px;top:84.3px;width:123.2px;height:149.7px;background:#1fa2c0;box-shadow:inset 0 0.6px 0 #0f93b3,inset 0 -0.6px 0 #0f93b3"></div>
<div class="a" style="left:158px;top:238.7px;width:318px;height:62px;background:#48be1f"></div>
<div class="a" style="left:201.4px;top:263.2px;width:232.5px;height:137.5px;border-radius:50%;background:#d3c64b"></div>
<!-- selection marching ants -->
<svg class="a" style="left:0;top:0" width="700" height="449">
<rect x="148.6" y="75" width="335.4" height="334.8" fill="none" stroke="#ffff90" stroke-width="1.3"/>
<rect x="148.6" y="75" width="335.4" height="334.8" fill="none" stroke="#858585" stroke-width="1.3" stroke-dasharray="2 2"/>
</svg>
<!-- cursor -->
<svg class="a" style="left:511px;top:321px" width="14" height="16" viewBox="0 0 14 16">
<path d="M2.6 2.6 L2.6 12 L4.8 10 L6.4 13.2 L8 12.4 L6.6 9.4 L9.6 9.2 Z" fill="#bdbdbd" stroke="#fff" stroke-width="1.6" stroke-linejoin="round"/>
<path d="M2.6 2.6 L2.6 12 L4.8 10 L6.4 13.2 L8 12.4 L6.6 9.4 L9.6 9.2 Z" fill="#c8c8c8" stroke="#2e2e2e" stroke-width="0.9" stroke-linejoin="round"/>
</svg>
<!-- scrollbars -->
<div class="a" style="left:544px;top:64px;width:3px;height:356px;border-radius:1.5px;background:#b3b3b3"></div>
<div class="a" style="left:93px;top:425px;width:446px;height:3px;border-radius:1.5px;background:#b3b3b3"></div>
<!-- nav icon -->
<svg class="a" style="left:542.5px;top:422.5px" width="8" height="8" viewBox="0 0 8 8">
<path d="M4 0.3 L5.4 2 L4.5 2 L4.5 3.5 L6 3.5 L6 2.6 L7.7 4 L6 5.4 L6 4.5 L4.5 4.5 L4.5 6 L5.4 6 L4 7.7 L2.6 6 L3.5 6 L3.5 4.5 L2 4.5 L2 5.4 L0.3 4 L2 2.6 L2 3.5 L3.5 3.5 L3.5 2 L2.6 2 Z" fill="#2d55a0"/>
</svg>
<!-- quick mask -->
<svg class="a" style="left:83px;top:423.5px" width="7" height="7" viewBox="0 0 7 7"><rect x="0.8" y="0.8" width="5.4" height="5.4" fill="none" stroke="#9a9a9a" stroke-width="0.8" stroke-dasharray="1.2 1"/></svg>
<!-- status bar -->
<div class="t" style="left:91px;top:435.8px;font-size:7.2px;color:#a8a8a8">2232, 1527</div>
<div class="a" style="left:135px;top:433px;width:22px;height:10.5px;border:0.8px solid #d0cdc8;border-radius:1.5px;background:linear-gradient(#fbfbfb,#f1f1f1)"></div>
<div class="t" style="left:137.5px;top:435.9px;font-size:7.34px;color:#555;transform:scaleX(0.885);transform-origin:0 0">px</div>
<svg class="a" style="left:151.5px;top:435px" width="4" height="8" viewBox="0 0 4 8"><path d="M0.6 2.6 L2 1 L3.4 2.6 M0.6 5.4 L2 7 L3.4 5.4" fill="none" stroke="#777" stroke-width="0.7"/></svg>
<div class="a" style="left:160.7px;top:432.6px;width:27.5px;height:11.5px;border:0.8px solid #d0cdc8;border-radius:1.5px;background:#fff"></div>
<div class="t" style="left:166.6px;top:435.6px;font-size:7.34px;color:#444;transform:scaleX(0.885);transform-origin:0 0">33,3 %</div>
<div class="a" style="left:188.5px;top:433px;width:7px;height:10.5px;border:0.8px solid #d0cdc8;border-radius:1.5px;background:linear-gradient(#fbfbfb,#f1f1f1)"></div>
<svg class="a" style="left:190px;top:435px" width="4" height="8" viewBox="0 0 4 8"><path d="M0.6 2.6 L2 1 L3.4 2.6 M0.6 5.4 L2 7 L3.4 5.4" fill="none" stroke="#777" stroke-width="0.7"/></svg>
<svg class="a" style="left:198.8px;top:435px" width="8" height="8" viewBox="0 0 8 8"><circle cx="4" cy="3.9" r="2.9" fill="#f6f6f6" stroke="#777" stroke-width="0.8"/><path d="M2.3 3.9 H5.7" stroke="#999" stroke-width="0.6"/></svg>
<div class="t" style="left:207px;top:435.8px;font-size:7.5px;color:#3a3a3a">Click-Drag to create a new selection</div>


<!-- pane strips -->
<div class="a" style="left:547px;top:62px;width:3px;height:359px;background:#fbfbfb"></div>
<div class="a" style="left:551px;top:37.6px;width:1.5px;height:408.4px;background:#f9f9f9"></div>
<div class="a" style="left:552.5px;top:37.6px;width:1px;height:408.4px;background:#dedede"></div>
<div class="a" style="left:553.5px;top:37.6px;width:2px;height:408.4px;background:#ebebeb"></div>
<!-- RIGHT PANEL -->
<!-- tabs -->
<div class="a" style="left:569.2px;top:24.6px;width:16.2px;height:13px;border:0.7px solid #d6d3ce;border-bottom:none;border-radius:2px 2px 0 0;background:#e9e8e6"></div>
<div class="a" style="left:586.3px;top:24.6px;width:14.6px;height:13px;border:0.7px solid #d6d3ce;border-bottom:none;border-radius:2px 2px 0 0;background:#e9e8e6"></div>
<div class="a" style="left:602px;top:24.6px;width:15.4px;height:13px;border:0.7px solid #d6d3ce;border-bottom:none;border-radius:2px 2px 0 0;background:#e9e8e6"></div>
<div class="a" style="left:554.6px;top:23.4px;width:14.8px;height:14.6px;border:0.8px solid #d2cfca;border-bottom:none;border-radius:2px 2px 0 0;background:#f5f4f3"></div>
<div class="a" style="left:554.6px;top:37.6px;width:144.2px;height:201px;border:0.8px solid #d2cfca;border-left-color:#d2cfca"></div>
<div class="a" style="left:555.3px;top:37.2px;width:13.5px;height:1.2px;background:#f5f4f3"></div>
<!-- tab icons -->
<svg class="a" style="left:556px;top:25px" width="12" height="11" viewBox="0 0 12 11"><path d="M2.6 1.2 H11.2 L9.4 4.6 H0.8 Z" fill="#fafafa" stroke="#8a8a8a" stroke-width="0.6"/><path d="M0.8 5.6 H9.4 L11 2.8 M0.8 7.4 H9.4 L11 4.6 M0.8 9.2 H9.4 L11 6.4" fill="none" stroke="#999" stroke-width="0.6"/><path d="M0.8 4.6 V9.2" stroke="#999" stroke-width="0.6"/></svg>
<svg class="a" style="left:571.5px;top:25.2px" width="12" height="11" viewBox="0 0 12 11"><path d="M1 8.6 L9 8.6 L11.2 5 V7 L9 10.6 H1 Z" fill="#3560b0"/><path d="M1 6.6 L9 6.6 L11.2 3 V5 L9 8.6 H1 Z" fill="#3fa030"/><path d="M3 0.6 H11.2 L9 5.6 H1 Z" fill="#e83030"/><path d="M1 5.6 H9 V6.8 H1 Z" fill="#c02020"/></svg>
<svg class="a" style="left:587.5px;top:25.5px" width="12" height="11" viewBox="0 0 12 11"><path d="M1 4.5 Q3.5 1.5 6 4 Q8 6.5 5 9 L4 10" fill="none" stroke="#5a7ab0" stroke-width="0.9"/><path d="M10 1 L3.5 10" stroke="#888" stroke-width="0.6"/><path d="M2 6 L9 3" stroke="#999" stroke-width="0.5"/><rect x="0.3" y="3.8" width="1.6" height="1.6" fill="#334"/><rect x="5.4" y="3.2" width="1.6" height="1.6" fill="#334"/><rect x="8.6" y="6.6" width="1.5" height="1.5" fill="#556"/><circle cx="9.8" cy="1.3" r="0.9" fill="#7890b8"/></svg>
<svg class="a" style="left:603px;top:25px" width="13" height="11" viewBox="0 0 13 11"><path d="M9 9.5 Q11.5 7 10 4 Q8.5 1.5 5 2.5 V0.5 L1 4 L5 7.2 V5 Q7.5 4.5 8 6.5 Q8.3 8 7 9.5 Z" fill="#f0d840" stroke="#d8b820" stroke-width="0.5"/><path d="M11 9.5 Q13 6 11.5 3.5" fill="none" stroke="#f4e890" stroke-width="0.8"/></svg>
<!-- panel menu btn -->
<div class="a" style="left:691.2px;top:28.2px;width:5.5px;height:5.6px;border:0.8px solid #999;border-radius:1.5px"></div>
<div class="a" style="left:692.8px;top:30px;width:0;height:0;border-top:1px solid transparent;border-bottom:1px solid transparent;border-right:1.5px solid #444"></div>
<!-- mode -->
<div class="t" style="left:556px;top:43.49px;font-size:6.89px;color:#2e2e2e;transform:scaleX(0.885);transform-origin:0 0">Mode:</div>
<div class="a" style="left:574.4px;top:40.4px;width:123px;height:12px;border:0.8px solid #cfccc7;border-radius:2px;background:linear-gradient(#fdfdfd,#f0f0ef)"></div>
<div class="t" style="left:576.8px;top:43.45px;font-size:7.23px;color:#2e2e2e;transform:scaleX(0.885);transform-origin:0 0">Normal</div>
<svg class="a" style="left:690.6px;top:42.4px" width="4" height="8" viewBox="0 0 4 8"><path d="M0.7 2.9 L2 1.5 L3.3 2.9 M0.7 5.1 L2 6.5 L3.3 5.1" fill="none" stroke="#555" stroke-width="0.7"/></svg>
<!-- opacity -->
<div class="a" style="left:555.8px;top:53.7px;width:141.6px;height:15px;border:0.9px solid #4a4a4a;background:#fff"></div>
<div class="a" style="left:556.6px;top:54.6px;width:133.6px;height:13.3px;background:#8caed2"></div>
<div class="t" style="left:557.6px;top:57.87px;font-size:7.01px;color:#eef4fb;transform:scaleX(0.885);transform-origin:0 0">Opacity</div>
<div class="t" style="left:673.3px;top:57.87px;font-size:7.01px;color:#eef4fb;transform:scaleX(0.885);transform-origin:0 0">100,0</div>
<svg class="a" style="left:691.6px;top:57.2px" width="4" height="8" viewBox="0 0 4 8"><path d="M0.7 2.9 L2 1.5 L3.3 2.9 M0.7 5.1 L2 6.5 L3.3 5.1" fill="none" stroke="#888" stroke-width="0.7"/></svg>
<!-- lock -->
<div class="t" style="left:556.2px;top:72.67px;font-size:7.01px;color:#2e2e2e;transform:scaleX(0.885);transform-origin:0 0">Lock:</div>
<svg class="a" style="left:576px;top:71.5px" width="9" height="9" viewBox="0 0 9 9"><path d="M0.6 8.4 Q1 6.2 2.6 5.6 L3.8 6.8 Q3.2 8.2 0.6 8.4 Z" fill="#111"/><path d="M3 6.2 L6.6 2.4" stroke="#333" stroke-width="1.8"/><path d="M5.8 3.2 L7.6 1.3" stroke="#e0a050" stroke-width="1.8"/></svg>
<svg class="a" style="left:589.6px;top:72px" width="8.4" height="8" viewBox="0 0 8 8"><rect width="8" height="8" fill="#777"/><path d="M0 0h2v2H0zM4 0h2v2H4zM2 2h2v2H2zM6 2h2v2H6zM0 4h2v2H0zM4 4h2v2H4zM2 6h2v2H2zM6 6h2v2H6z" fill="#444"/></svg>
<!-- layers list -->
<div class="a" style="left:555.3px;top:82.8px;width:142.7px;height:140.4px;background:#fff;border-top:0.8px solid #d6d3ce;border-bottom:0.8px solid #d6d3ce;border-left:1px solid #e2e2e2"></div>
<div class="a" style="left:556.1px;top:83.5px;width:141.9px;height:18.6px;background:#dcdad6"></div>
<div class="a" style="left:691.8px;top:85px;width:4.2px;height:125px;border-radius:2px;background:#b3b3b3"></div>
<svg class="a" style="left:558.2px;top:90.8px" width="6" height="4.8" viewBox="0 0 6 4.8"><ellipse cx="3" cy="2.4" rx="2.8" ry="2" fill="#3d68b5" stroke="#6a7080" stroke-width="0.35"/><circle cx="3.2" cy="2.3" r="1.1" fill="#1f3f85"/></svg>
<div class="a" style="left:582.6px;top:84.6px;width:17.8px;height:17.4px;background:#fff"></div>
<div class="a" style="left:584px;top:86px;width:9.1px;height:7.2px;background:#c11f1f"></div>
<div class="a" style="left:593px;top:86px;width:6.2px;height:7.2px;background:#1fa2c0"></div>
<div class="a" style="left:584px;top:93.2px;width:15.2px;height:2.6px;background:#48be1f"></div>
<div class="a" style="left:586px;top:94.9px;width:11.6px;height:6.3px;border-radius:50%;background:#d3c64b"></div>
<div class="t" style="left:602.2px;top:89.97px;font-size:7.01px;font-weight:bold;color:#2e2e2e;transform:scaleX(0.885);transform-origin:0 0">Layer</div>
<svg class="a" style="left:558.2px;top:109.6px" width="6" height="4.8" viewBox="0 0 6 4.8"><ellipse cx="3" cy="2.4" rx="2.8" ry="2" fill="#3d68b5" stroke="#6a7080" stroke-width="0.35"/><circle cx="3.2" cy="2.3" r="1.1" fill="#1f3f85"/></svg>
<div class="a" style="left:582.9px;top:103.1px;width:16.9px;height:17.2px;background:#000;border-radius:0.5px"></div>
<div class="a" style="left:583.6px;top:104.0px;width:6px;height:5px;background:radial-gradient(circle at 55% 45%,#d9a860 35%,#6a8ab0 90%)"></div>
<div class="t" style="left:602.2px;top:108.80px;font-size:6.78px;font-weight:bold;color:#2e2e2e;transform:scaleX(0.885);transform-origin:0 0">portrait17.jpg</div>
<svg class="a" style="left:558.2px;top:128.2px" width="6" height="4.8" viewBox="0 0 6 4.8"><ellipse cx="3" cy="2.4" rx="2.8" ry="2" fill="#3d68b5" stroke="#6a7080" stroke-width="0.35"/><circle cx="3.2" cy="2.3" r="1.1" fill="#1f3f85"/></svg>
<div class="a" style="left:582.9px;top:121.7px;width:16.9px;height:17.2px;background:#000;border-radius:0.5px"></div>
<div class="a" style="left:583.6px;top:122.6px;width:6px;height:5px;background:radial-gradient(circle at 55% 45%,#7ab0d0 35%,#c08870 90%)"></div>
<div class="t" style="left:602.2px;top:127.40px;font-size:6.78px;font-weight:bold;color:#2e2e2e;transform:scaleX(0.885);transform-origin:0 0">portrait18.jpg</div>
<svg class="a" style="left:558.2px;top:146.9px" width="6" height="4.8" viewBox="0 0 6 4.8"><ellipse cx="3" cy="2.4" rx="2.8" ry="2" fill="#3d68b5" stroke="#6a7080" stroke-width="0.35"/><circle cx="3.2" cy="2.3" r="1.1" fill="#1f3f85"/></svg>
<div class="a" style="left:582.9px;top:140.4px;width:16.9px;height:17.2px;background:#000;border-radius:0.5px"></div>
<div class="a" style="left:583.6px;top:141.3px;width:6px;height:5px;background:radial-gradient(circle at 55% 45%,#6a7a90 35%,#a07060 90%)"></div>
<div class="t" style="left:602.2px;top:146.10px;font-size:6.78px;font-weight:bold;color:#2e2e2e;transform:scaleX(0.885);transform-origin:0 0">portrait19.jpg</div>
<svg class="a" style="left:558.2px;top:165.5px" width="6" height="4.8" viewBox="0 0 6 4.8"><ellipse cx="3" cy="2.4" rx="2.8" ry="2" fill="#3d68b5" stroke="#6a7080" stroke-width="0.35"/><circle cx="3.2" cy="2.3" r="1.1" fill="#1f3f85"/></svg>
<div class="a" style="left:582.9px;top:159.0px;width:16.9px;height:17.2px;background:#000;border-radius:0.5px"></div>
<div class="a" style="left:583.6px;top:159.9px;width:6px;height:5px;background:radial-gradient(circle at 55% 45%,#604848 35%,#907070 90%)"></div>
<div class="t" style="left:602.2px;top:164.70px;font-size:6.78px;font-weight:bold;color:#2e2e2e;transform:scaleX(0.885);transform-origin:0 0">portrait20.jpg</div>
<svg class="a" style="left:558.2px;top:184.1px" width="6" height="4.8" viewBox="0 0 6 4.8"><ellipse cx="3" cy="2.4" rx="2.8" ry="2" fill="#3d68b5" stroke="#6a7080" stroke-width="0.35"/><circle cx="3.2" cy="2.3" r="1.1" fill="#1f3f85"/></svg>
<div class="a" style="left:582.9px;top:177.6px;width:16.9px;height:17.2px;background:#000;border-radius:0.5px"></div>
<div class="a" style="left:583.6px;top:178.5px;width:6px;height:5px;background:radial-gradient(circle at 55% 45%,#e0b090 35%,#a05040 90%)"></div>
<div class="t" style="left:602.2px;top:183.30px;font-size:6.78px;font-weight:bold;color:#2e2e2e;transform:scaleX(0.885);transform-origin:0 0">portrait21.jpg</div>
<svg class="a" style="left:558.2px;top:202.7px" width="6" height="4.8" viewBox="0 0 6 4.8"><ellipse cx="3" cy="2.4" rx="2.8" ry="2" fill="#3d68b5" stroke="#6a7080" stroke-width="0.35"/><circle cx="3.2" cy="2.3" r="1.1" fill="#1f3f85"/></svg>
<div class="a" style="left:582.9px;top:196.2px;width:16.9px;height:17.2px;background:#000;border-radius:0.5px"></div>
<div class="a" style="left:583.6px;top:197.1px;width:6px;height:5px;background:radial-gradient(circle at 55% 45%,#504040 35%,#706060 90%)"></div>
<div class="t" style="left:602.2px;top:201.90px;font-size:6.78px;font-weight:bold;color:#2e2e2e;transform:scaleX(0.885);transform-origin:0 0">portrait22.jpg</div>
<svg class="a" style="left:558.2px;top:221.3px" width="6" height="4.8" viewBox="0 0 6 4.8"><ellipse cx="3" cy="2.4" rx="2.8" ry="2" fill="#3d68b5" stroke="#6a7080" stroke-width="0.35"/><circle cx="3.2" cy="2.3" r="1.1" fill="#1f3f85"/></svg>
<div class="a" style="left:582.9px;top:214.8px;width:16.9px;height:17.2px;background:#000;border-radius:0.5px"></div>
<div class="a" style="left:583.6px;top:215.7px;width:6px;height:5px;background:radial-gradient(circle at 55% 45%,#90a8c8 35%,#c0a080 90%)"></div>
<div class="t" style="left:602.2px;top:220.50px;font-size:6.78px;font-weight:bold;color:#2e2e2e;transform:scaleX(0.885);transform-origin:0 0">portrait23.jpg</div>
<div class="a" style="left:555.3px;top:223.2px;width:142.7px;height:14.6px;background:#f2f1f0;border-top:0.8px solid #d6d3ce"></div>
<!-- layer bottom buttons -->
<svg class="a" style="left:561px;top:227px" width="8" height="8" viewBox="0 0 8 8"><rect x="0.7" y="0.7" width="6.6" height="6.6" rx="1.2" fill="none" stroke="#444" stroke-width="0.9"/><path d="M4 2 V6 M2 4 H6" stroke="#444" stroke-width="0.9"/></svg>
<svg class="a" style="left:581px;top:227px" width="8" height="8" viewBox="0 0 8 8"><path d="M0.5 2 H3 L3.8 1 H7.5 V7.5 H0.5 Z" fill="#777"/><rect x="1.3" y="3" width="5.5" height="3.8" fill="#999"/></svg>
<svg class="a" style="left:601.3px;top:228px" width="8" height="6" viewBox="0 0 8 6"><path d="M1 4.5 L4 1.5 L7 4.5" fill="none" stroke="#c8c8c8" stroke-width="1"/></svg>
<svg class="a" style="left:621.7px;top:228.2px" width="8" height="6" viewBox="0 0 8 6"><path d="M1 1.5 L4 4.5 L7 1.5" fill="none" stroke="#333" stroke-width="1.3"/></svg>
<svg class="a" style="left:641.7px;top:227px" width="8" height="8" viewBox="0 0 8 8"><rect x="0.5" y="0.5" width="5" height="5" fill="#5a7fb8" stroke="#445" stroke-width="0.6"/><rect x="2.5" y="2.5" width="5" height="5" fill="#445a80" stroke="#334" stroke-width="0.6"/></svg>
<svg class="a" style="left:662px;top:227px" width="8" height="8" viewBox="0 0 8 8"><circle cx="4" cy="1.5" r="1" fill="none" stroke="#ccc" stroke-width="0.7"/><path d="M4 2.5 V7.3 M1 5 Q1.5 7.3 4 7.3 Q6.5 7.3 7 5 M2.5 3.8 H5.5" fill="none" stroke="#ccc" stroke-width="0.8"/></svg>
<svg class="a" style="left:683px;top:227px" width="8" height="8" viewBox="0 0 8 8"><rect x="0.5" y="1" width="7" height="6.5" rx="1" fill="#666"/><path d="M2 2.5 L4 1.2 L6 2.5" stroke="#ddd" stroke-width="0.6" fill="none"/><rect x="0.5" y="3.3" width="7" height="0.6" fill="#999"/></svg>
<div class="t" style="left:623.5px;top:236.6px;font-size:5px;color:#999;letter-spacing:0.3px">···</div>
<div class="t" style="left:551px;top:226px;font-size:4px;color:#aaa;line-height:2.2px">·<br>·<br>·</div>
<!-- brushes tabs -->
<div class="a" style="left:588.8px;top:244px;width:37.8px;height:10.8px;border:0.7px solid #d6d3ce;border-bottom:none;border-radius:2px 2px 0 0;background:#e9e8e6"></div>
<div class="a" style="left:627.4px;top:244px;width:39px;height:10.8px;border:0.7px solid #d6d3ce;border-bottom:none;border-radius:2px 2px 0 0;background:#e9e8e6"></div>
<div class="a" style="left:554.5px;top:243px;width:34.3px;height:12px;border:0.8px solid #d2cfca;border-bottom:none;border-radius:2px 2px 0 0;background:#f5f4f3"></div>
<div class="a" style="left:554.5px;top:254.6px;width:144.3px;height:192px;border:0.8px solid #d2cfca"></div>
<div class="a" style="left:555.2px;top:254.2px;width:33px;height:1.2px;background:#f5f4f3"></div>
<div class="a" style="left:555.8px;top:245.2px;width:8px;height:8px;border:0.7px solid #777;border-radius:1px;background:#f8f8f8"></div>
<div class="a" style="left:558px;top:247.4px;width:3.5px;height:3.5px;border-radius:50%;background:radial-gradient(#000 30%,#888)"></div>
<div class="a" style="left:562px;top:251.5px;width:1.8px;height:1.8px;background:#2a4aa0"></div>
<div class="t" style="left:565.7px;top:246.1px;font-size:7.01px;color:#2e2e2e;transform:scaleX(0.835);transform-origin:0 0">Brushes</div>
<div class="a" style="left:590.3px;top:245.4px;width:8.2px;height:8.4px;border:0.6px solid #666;background:linear-gradient(90deg,#f0a030,#f8c060)"></div>
<div class="t" style="left:601.2px;top:246.27px;font-size:7.01px;color:#2e2e2e;transform:scaleX(0.885);transform-origin:0 0">Patterns</div>
<div class="a" style="left:629px;top:245.4px;width:8.4px;height:8.4px;border:0.6px solid #555;background:linear-gradient(90deg,#000,#c8b030)"></div>
<div class="t" style="left:639px;top:246.27px;font-size:7.01px;color:#2e2e2e;transform:scaleX(0.885);transform-origin:0 0">Gradients</div>
<div class="a" style="left:691px;top:246.4px;width:6px;height:5.6px;border:0.8px solid #999;border-radius:1.5px"></div>
<div class="a" style="left:692.9px;top:248.2px;width:0;height:0;border-top:1px solid transparent;border-bottom:1px solid transparent;border-right:1.5px solid #444"></div>
<!-- filter -->
<div class="a" style="left:556.2px;top:256.8px;width:141.3px;height:10.6px;border:0.8px solid #cfccc7;border-radius:1.5px;background:#fff"></div>
<div class="t" style="left:558.3px;top:258.97px;font-size:7.01px;font-style:italic;color:#c0c0c0;transform:scaleX(0.885);transform-origin:0 0">filter</div>
<svg class="a" style="left:688.5px;top:260.2px" width="6" height="5" viewBox="0 0 6 5"><path d="M1 1 L5 1 L3 3.6 Z" fill="#333"/></svg>
<div class="t" style="left:556px;top:269.30px;font-size:6.78px;font-style:italic;color:#4a4a4a;transform:scaleX(0.885);transform-origin:0 0">2. Hardness 050 (51 × 51)</div>
<!-- brush grid -->
<div class="a" style="left:555.4px;top:277.3px;width:142.4px;height:126.5px;background:#fff;border:0.7px solid #d6d3ce"></div>
<div class="a" style="left:692.4px;top:280px;width:3.8px;height:120px;border-radius:2px;background:#b3b3b3"></div>
<svg class="a" style="left:0;top:0" width="700" height="449">
<defs><radialGradient id="sg"><stop offset="0" stop-color="#000"/><stop offset="1" stop-color="#000" stop-opacity="0"/></radialGradient><radialGradient id="hg"><stop offset="0" stop-color="#000"/><stop offset="0.5" stop-color="#000" stop-opacity="0.85"/><stop offset="1" stop-color="#000" stop-opacity="0"/></radialGradient><radialGradient id="cg"><stop offset="0" stop-color="#333" stop-opacity="0.9"/><stop offset="1" stop-color="#666" stop-opacity="0"/></radialGradient><radialGradient id="sun"><stop offset="0" stop-color="#fff8a0"/><stop offset="0.4" stop-color="#ffd850"/><stop offset="0.75" stop-color="#ffc090" stop-opacity="0.8"/><stop offset="1" stop-color="#ffc0a0" stop-opacity="0"/></radialGradient></defs>
<path d="M558 282.5 Q565 279 572.5 280.2 L571.5 282.8 Q565 282.4 558 283.4 Z" fill="#3fbf1f"/>
<rect x="580.8199999999999" y="284.6" width="1.2" height="1.2" fill="#222"/>
<rect x="591.54" y="283.6" width="13" height="3" fill="#000"/>
<ellipse cx="614.66" cy="285" rx="6.5" ry="1.9" fill="#000"/>
<rect x="624.78" y="284.7" width="13" height="0.8" fill="#666"/>
<circle cx="647.9" cy="284.7" r="5.2" fill="url(#sg)"/>
<rect x="657" y="277.5" width="16.2" height="15.5" fill="none" stroke="#333" stroke-width="0.8"/>
<circle cx="664.52" cy="284.7" r="6.2" fill="url(#hg)"/>
<circle cx="681.14" cy="284.7" r="6.8" fill="url(#hg)"/>
<circle cx="564.8" cy="302.2" r="7.6" fill="#000"/>
<path d="M581.42 295.2 L583.2199999999999 300.2 L588.42 300.2 L584.2199999999999 303.4 L585.7199999999999 308.7 L581.42 305.5 L577.12 308.7 L578.62 303.4 L574.42 300.2 L579.62 300.2 Z" fill="#000"/>
<circle cx="598.04" cy="302.2" r="4" fill="url(#cg)"/><rect x="596.9" y="302.7" width="1.1" height="1.1" fill="rgb(5,5,5)"/><rect x="595.3" y="301.4" width="0.6" height="0.6" fill="rgb(40,40,40)"/><rect x="600.4" y="302.5" width="0.6" height="0.6" fill="rgb(7,7,7)"/><rect x="593.8" y="303.7" width="0.7" height="0.7" fill="rgb(17,17,17)"/><rect x="594.2" y="298.6" width="1.0" height="1.0" fill="rgb(31,31,31)"/><rect x="598.0" y="301.5" width="1.2" height="1.2" fill="rgb(23,23,23)"/><rect x="598.3" y="302.6" width="0.8" height="0.8" fill="rgb(65,65,65)"/><rect x="599.0" y="304.5" width="1.0" height="1.0" fill="rgb(29,29,29)"/><rect x="597.0" y="301.7" width="0.6" height="0.6" fill="rgb(16,16,16)"/><rect x="596.5" y="299.5" width="0.8" height="0.8" fill="rgb(46,46,46)"/><rect x="595.4" y="302.2" width="1.2" height="1.2" fill="rgb(55,55,55)"/><rect x="597.7" y="304.8" width="1.0" height="1.0" fill="rgb(70,70,70)"/><rect x="597.1" y="299.7" width="1.3" height="1.3" fill="rgb(9,9,9)"/><rect x="594.1" y="303.7" width="0.7" height="0.7" fill="rgb(39,39,39)"/><rect x="601.1" y="302.5" width="1.1" height="1.1" fill="rgb(45,45,45)"/><rect x="599.1" y="300.2" width="1.1" height="1.1" fill="rgb(47,47,47)"/><rect x="594.9" y="300.4" width="1.2" height="1.2" fill="rgb(75,75,75)"/><rect x="594.0" y="302.4" width="0.6" height="0.6" fill="rgb(56,56,56)"/><rect x="594.5" y="298.0" width="1.2" height="1.2" fill="rgb(22,22,22)"/><rect x="594.9" y="304.1" width="0.6" height="0.6" fill="rgb(36,36,36)"/><rect x="598.3" y="302.8" width="0.6" height="0.6" fill="rgb(61,61,61)"/><rect x="598.9" y="303.0" width="0.9" height="0.9" fill="rgb(69,69,69)"/><rect x="600.0" y="303.0" width="1.0" height="1.0" fill="rgb(70,70,70)"/><rect x="599.5" y="298.1" width="0.8" height="0.8" fill="rgb(33,33,33)"/><rect x="594.5" y="304.8" width="1.3" height="1.3" fill="rgb(12,12,12)"/><rect x="598.5" y="303.3" width="0.8" height="0.8" fill="rgb(38,38,38)"/><rect x="596.1" y="301.0" width="0.6" height="0.6" fill="rgb(33,33,33)"/><rect x="595.1" y="303.8" width="1.3" height="1.3" fill="rgb(55,55,55)"/><rect x="594.0" y="301.4" width="1.1" height="1.1" fill="rgb(4,4,4)"/><rect x="600.8" y="299.4" width="1.2" height="1.2" fill="rgb(63,63,63)"/><rect x="595.7" y="303.3" width="0.7" height="0.7" fill="rgb(50,50,50)"/><rect x="598.4" y="302.1" width="0.7" height="0.7" fill="rgb(12,12,12)"/><rect x="597.4" y="302.4" width="0.6" height="0.6" fill="rgb(12,12,12)"/><rect x="599.7" y="303.2" width="0.6" height="0.6" fill="rgb(69,69,69)"/><rect x="596.7" y="301.0" width="0.8" height="0.8" fill="rgb(27,27,27)"/><rect x="596.7" y="302.4" width="1.2" height="1.2" fill="rgb(79,79,79)"/><rect x="594.8" y="302.4" width="0.7" height="0.7" fill="rgb(8,8,8)"/><rect x="596.4" y="303.1" width="1.2" height="1.2" fill="rgb(12,12,12)"/><rect x="602.3" y="302.3" width="1.0" height="1.0" fill="rgb(11,11,11)"/><rect x="597.2" y="301.6" width="1.0" height="1.0" fill="rgb(78,78,78)"/><rect x="600.2" y="299.2" width="0.8" height="0.8" fill="rgb(29,29,29)"/><rect x="599.6" y="305.0" width="1.0" height="1.0" fill="rgb(62,62,62)"/><rect x="596.6" y="303.0" width="1.2" height="1.2" fill="rgb(78,78,78)"/><rect x="600.0" y="298.5" width="1.2" height="1.2" fill="rgb(59,59,59)"/><rect x="598.1" y="304.6" width="0.8" height="0.8" fill="rgb(2,2,2)"/><rect x="599.7" y="302.1" width="0.8" height="0.8" fill="rgb(55,55,55)"/><rect x="600.2" y="300.9" width="1.3" height="1.3" fill="rgb(79,79,79)"/><rect x="600.0" y="301.2" width="0.8" height="0.8" fill="rgb(18,18,18)"/><rect x="598.1" y="303.1" width="1.0" height="1.0" fill="rgb(72,72,72)"/><rect x="599.1" y="299.4" width="1.1" height="1.1" fill="rgb(63,63,63)"/><rect x="600.6" y="303.3" width="1.2" height="1.2" fill="rgb(62,62,62)"/><rect x="597.7" y="299.2" width="0.7" height="0.7" fill="rgb(63,63,63)"/><rect x="595.3" y="304.9" width="1.3" height="1.3" fill="rgb(31,31,31)"/><rect x="593.6" y="304.2" width="1.1" height="1.1" fill="rgb(13,13,13)"/><rect x="598.4" y="302.4" width="1.2" height="1.2" fill="rgb(64,64,64)"/><rect x="600.1" y="304.7" width="1.3" height="1.3" fill="rgb(52,52,52)"/><rect x="595.8" y="304.2" width="0.7" height="0.7" fill="rgb(1,1,1)"/><rect x="601.2" y="301.1" width="1.0" height="1.0" fill="rgb(74,74,74)"/><rect x="593.3" y="303.3" width="1.2" height="1.2" fill="rgb(16,16,16)"/><rect x="597.6" y="303.7" width="0.8" height="0.8" fill="rgb(46,46,46)"/><rect x="597.5" y="304.3" width="0.7" height="0.7" fill="rgb(72,72,72)"/><rect x="595.8" y="303.8" width="1.0" height="1.0" fill="rgb(72,72,72)"/><rect x="593.4" y="303.8" width="1.0" height="1.0" fill="rgb(42,42,42)"/><rect x="597.3" y="301.7" width="0.9" height="0.9" fill="rgb(14,14,14)"/><rect x="602.0" y="301.9" width="0.7" height="0.7" fill="rgb(37,37,37)"/><rect x="597.1" y="298.8" width="0.8" height="0.8" fill="rgb(41,41,41)"/><rect x="593.7" y="300.6" width="0.7" height="0.7" fill="rgb(44,44,44)"/><rect x="597.5" y="303.5" width="1.1" height="1.1" fill="rgb(40,40,40)"/><rect x="593.6" y="300.2" width="1.2" height="1.2" fill="rgb(35,35,35)"/><rect x="595.2" y="299.9" width="1.0" height="1.0" fill="rgb(55,55,55)"/>
<rect x="610.9" y="302.5" width="0.8" height="0.8" fill="rgb(103,103,103)"/><rect x="612.6" y="298.6" width="1.1" height="1.1" fill="rgb(28,28,28)"/><rect x="609.2" y="300.5" width="1.0" height="1.0" fill="rgb(15,15,15)"/><rect x="616.6" y="303.3" width="0.5" height="0.5" fill="rgb(26,26,26)"/><rect x="617.9" y="302.9" width="1.0" height="1.0" fill="rgb(98,98,98)"/><rect x="616.7" y="304.0" width="0.9" height="0.9" fill="rgb(15,15,15)"/><rect x="618.3" y="299.6" width="0.6" height="0.6" fill="rgb(104,104,104)"/><rect x="611.4" y="302.9" width="1.1" height="1.1" fill="rgb(91,91,91)"/><rect x="615.9" y="303.4" width="0.8" height="0.8" fill="rgb(37,37,37)"/><rect x="615.0" y="303.2" width="0.9" height="0.9" fill="rgb(2,2,2)"/><rect x="611.5" y="301.3" width="0.5" height="0.5" fill="rgb(36,36,36)"/><rect x="611.9" y="300.4" width="0.5" height="0.5" fill="rgb(108,108,108)"/><rect x="615.7" y="298.6" width="0.6" height="0.6" fill="rgb(29,29,29)"/><rect x="618.8" y="302.6" width="0.7" height="0.7" fill="rgb(14,14,14)"/><rect x="609.6" y="303.2" width="1.0" height="1.0" fill="rgb(28,28,28)"/><rect x="617.3" y="304.4" width="0.8" height="0.8" fill="rgb(77,77,77)"/><rect x="614.8" y="302.0" width="0.9" height="0.9" fill="rgb(46,46,46)"/><rect x="618.9" y="303.2" width="0.9" height="0.9" fill="rgb(88,88,88)"/><rect x="618.7" y="303.5" width="0.5" height="0.5" fill="rgb(94,94,94)"/><rect x="611.8" y="302.3" width="0.8" height="0.8" fill="rgb(101,101,101)"/><rect x="614.1" y="302.6" width="0.8" height="0.8" fill="rgb(26,26,26)"/><rect x="615.6" y="302.6" width="0.5" height="0.5" fill="rgb(22,22,22)"/><rect x="613.3" y="303.1" width="1.0" height="1.0" fill="rgb(31,31,31)"/><rect x="612.7" y="301.8" width="0.7" height="0.7" fill="rgb(1,1,1)"/><rect x="614.2" y="301.9" width="0.9" height="0.9" fill="rgb(60,60,60)"/><rect x="615.3" y="303.6" width="1.1" height="1.1" fill="rgb(11,11,11)"/><rect x="615.5" y="300.0" width="0.8" height="0.8" fill="rgb(91,91,91)"/><rect x="611.5" y="303.1" width="0.9" height="0.9" fill="rgb(108,108,108)"/><rect x="611.5" y="304.3" width="0.9" height="0.9" fill="rgb(69,69,69)"/><rect x="612.2" y="302.9" width="0.5" height="0.5" fill="rgb(14,14,14)"/><rect x="618.4" y="303.1" width="0.7" height="0.7" fill="rgb(17,17,17)"/><rect x="618.4" y="303.3" width="1.0" height="1.0" fill="rgb(73,73,73)"/><rect x="613.9" y="303.1" width="0.7" height="0.7" fill="rgb(50,50,50)"/><rect x="616.0" y="303.5" width="0.7" height="0.7" fill="rgb(105,105,105)"/><rect x="617.9" y="301.5" width="0.6" height="0.6" fill="rgb(106,106,106)"/><rect x="613.4" y="303.5" width="0.5" height="0.5" fill="rgb(41,41,41)"/><rect x="611.0" y="302.2" width="0.6" height="0.6" fill="rgb(55,55,55)"/><rect x="616.5" y="302.0" width="0.6" height="0.6" fill="rgb(43,43,43)"/><rect x="614.7" y="301.9" width="0.7" height="0.7" fill="rgb(25,25,25)"/><rect x="611.2" y="300.6" width="1.0" height="1.0" fill="rgb(72,72,72)"/><rect x="613.2" y="298.7" width="0.7" height="0.7" fill="rgb(35,35,35)"/><rect x="615.6" y="301.6" width="0.9" height="0.9" fill="rgb(70,70,70)"/><rect x="618.8" y="302.5" width="1.0" height="1.0" fill="rgb(69,69,69)"/><rect x="613.9" y="298.9" width="0.6" height="0.6" fill="rgb(57,57,57)"/><rect x="609.3" y="301.6" width="1.0" height="1.0" fill="rgb(90,90,90)"/>
<rect x="629.4" y="298.4" width="0.9" height="0.9" fill="rgb(76,76,76)"/><rect x="630.9" y="302.3" width="0.6" height="0.6" fill="rgb(39,39,39)"/><rect x="631.9" y="305.4" width="0.8" height="0.8" fill="rgb(69,69,69)"/><rect x="630.3" y="298.3" width="0.8" height="0.8" fill="rgb(0,0,0)"/><rect x="632.9" y="297.7" width="0.8" height="0.8" fill="rgb(58,58,58)"/><rect x="630.8" y="301.1" width="0.9" height="0.9" fill="rgb(27,27,27)"/><rect x="631.4" y="302.9" width="0.9" height="0.9" fill="rgb(22,22,22)"/><rect x="632.4" y="296.1" width="0.8" height="0.8" fill="rgb(42,42,42)"/><rect x="628.5" y="301.6" width="1.0" height="1.0" fill="rgb(67,67,67)"/><rect x="630.9" y="301.3" width="0.6" height="0.6" fill="rgb(27,27,27)"/><rect x="631.5" y="299.6" width="0.8" height="0.8" fill="rgb(1,1,1)"/><rect x="631.5" y="302.8" width="0.9" height="0.9" fill="rgb(76,76,76)"/><rect x="631.0" y="299.7" width="0.8" height="0.8" fill="rgb(51,51,51)"/><rect x="630.2" y="301.7" width="1.0" height="1.0" fill="rgb(21,21,21)"/><rect x="633.9" y="302.0" width="0.5" height="0.5" fill="rgb(50,50,50)"/><rect x="633.6" y="297.1" width="0.8" height="0.8" fill="rgb(29,29,29)"/><rect x="630.0" y="307.4" width="0.6" height="0.6" fill="rgb(63,63,63)"/><rect x="631.0" y="304.7" width="1.1" height="1.1" fill="rgb(14,14,14)"/><rect x="632.4" y="298.9" width="1.0" height="1.0" fill="rgb(77,77,77)"/><rect x="629.6" y="307.1" width="0.8" height="0.8" fill="rgb(2,2,2)"/><rect x="632.5" y="302.4" width="0.8" height="0.8" fill="rgb(33,33,33)"/><rect x="631.1" y="304.0" width="0.7" height="0.7" fill="rgb(92,92,92)"/><rect x="633.0" y="302.5" width="1.0" height="1.0" fill="rgb(13,13,13)"/><rect x="633.3" y="300.3" width="1.0" height="1.0" fill="rgb(31,31,31)"/><rect x="629.2" y="303.3" width="1.1" height="1.1" fill="rgb(64,64,64)"/><rect x="629.3" y="303.8" width="0.7" height="0.7" fill="rgb(5,5,5)"/><rect x="632.0" y="305.4" width="0.7" height="0.7" fill="rgb(102,102,102)"/><rect x="630.3" y="303.8" width="0.8" height="0.8" fill="rgb(20,20,20)"/><rect x="627.6" y="305.0" width="1.0" height="1.0" fill="rgb(89,89,89)"/><rect x="630.1" y="297.2" width="1.1" height="1.1" fill="rgb(60,60,60)"/><rect x="630.9" y="301.2" width="0.9" height="0.9" fill="rgb(49,49,49)"/><rect x="632.2" y="297.8" width="0.7" height="0.7" fill="rgb(5,5,5)"/><rect x="631.5" y="301.5" width="0.8" height="0.8" fill="rgb(37,37,37)"/><rect x="628.7" y="305.8" width="1.1" height="1.1" fill="rgb(28,28,28)"/><rect x="630.8" y="299.8" width="0.8" height="0.8" fill="rgb(43,43,43)"/><rect x="630.9" y="303.1" width="0.6" height="0.6" fill="rgb(99,99,99)"/><rect x="629.9" y="301.4" width="1.0" height="1.0" fill="rgb(109,109,109)"/><rect x="630.3" y="302.1" width="0.6" height="0.6" fill="rgb(9,9,9)"/><rect x="630.5" y="302.5" width="0.6" height="0.6" fill="rgb(28,28,28)"/><rect x="629.1" y="298.8" width="0.9" height="0.9" fill="rgb(45,45,45)"/><rect x="628.9" y="303.1" width="0.7" height="0.7" fill="rgb(37,37,37)"/><rect x="631.4" y="302.7" width="1.1" height="1.1" fill="rgb(13,13,13)"/><rect x="628.8" y="301.0" width="1.0" height="1.0" fill="rgb(23,23,23)"/><rect x="630.2" y="303.7" width="0.7" height="0.7" fill="rgb(49,49,49)"/><rect x="633.6" y="301.0" width="1.0" height="1.0" fill="rgb(2,2,2)"/>
<circle cx="647.9" cy="302.2" r="5" fill="url(#cg)"/><rect x="651.1" y="302.5" width="0.9" height="0.9" fill="rgb(72,72,72)"/><rect x="647.5" y="301.8" width="0.7" height="0.7" fill="rgb(113,113,113)"/><rect x="649.4" y="297.8" width="1.0" height="1.0" fill="rgb(52,52,52)"/><rect x="648.4" y="302.5" width="0.8" height="0.8" fill="rgb(91,91,91)"/><rect x="651.1" y="300.4" width="0.8" height="0.8" fill="rgb(98,98,98)"/><rect x="644.6" y="302.8" width="0.5" height="0.5" fill="rgb(100,100,100)"/><rect x="648.0" y="306.4" width="0.8" height="0.8" fill="rgb(57,57,57)"/><rect x="648.6" y="303.0" width="0.8" height="0.8" fill="rgb(92,92,92)"/><rect x="648.0" y="302.2" width="0.8" height="0.8" fill="rgb(82,82,82)"/><rect x="646.3" y="302.8" width="0.8" height="0.8" fill="rgb(30,30,30)"/><rect x="646.6" y="304.3" width="1.0" height="1.0" fill="rgb(88,88,88)"/><rect x="649.6" y="300.1" width="0.6" height="0.6" fill="rgb(52,52,52)"/><rect x="651.2" y="300.9" width="0.7" height="0.7" fill="rgb(31,31,31)"/><rect x="643.9" y="301.9" width="0.7" height="0.7" fill="rgb(53,53,53)"/><rect x="645.3" y="297.8" width="0.6" height="0.6" fill="rgb(33,33,33)"/><rect x="646.2" y="303.9" width="0.8" height="0.8" fill="rgb(47,47,47)"/><rect x="648.7" y="298.1" width="0.8" height="0.8" fill="rgb(48,48,48)"/><rect x="649.4" y="301.4" width="0.9" height="0.9" fill="rgb(50,50,50)"/><rect x="648.3" y="305.8" width="0.6" height="0.6" fill="rgb(115,115,115)"/><rect x="646.3" y="301.9" width="0.6" height="0.6" fill="rgb(67,67,67)"/><rect x="645.2" y="297.8" width="0.6" height="0.6" fill="rgb(65,65,65)"/><rect x="648.7" y="306.7" width="0.6" height="0.6" fill="rgb(34,34,34)"/><rect x="649.6" y="302.6" width="0.9" height="0.9" fill="rgb(109,109,109)"/><rect x="646.9" y="296.8" width="1.0" height="1.0" fill="rgb(59,59,59)"/><rect x="649.3" y="306.1" width="0.9" height="0.9" fill="rgb(32,32,32)"/><rect x="646.4" y="299.9" width="0.7" height="0.7" fill="rgb(59,59,59)"/><rect x="647.6" y="301.9" width="0.6" height="0.6" fill="rgb(61,61,61)"/><rect x="648.3" y="301.4" width="1.0" height="1.0" fill="rgb(48,48,48)"/><rect x="644.8" y="305.1" width="0.9" height="0.9" fill="rgb(68,68,68)"/><rect x="650.2" y="302.7" width="0.7" height="0.7" fill="rgb(112,112,112)"/><rect x="648.2" y="303.8" width="0.9" height="0.9" fill="rgb(32,32,32)"/><rect x="643.9" y="304.0" width="0.9" height="0.9" fill="rgb(33,33,33)"/><rect x="648.0" y="301.8" width="1.0" height="1.0" fill="rgb(53,53,53)"/><rect x="647.5" y="297.3" width="0.7" height="0.7" fill="rgb(54,54,54)"/><rect x="650.9" y="301.0" width="0.6" height="0.6" fill="rgb(94,94,94)"/><rect x="646.9" y="303.6" width="0.5" height="0.5" fill="rgb(98,98,98)"/><rect x="650.4" y="300.0" width="1.0" height="1.0" fill="rgb(32,32,32)"/><rect x="647.7" y="304.5" width="1.0" height="1.0" fill="rgb(115,115,115)"/><rect x="646.3" y="302.9" width="0.7" height="0.7" fill="rgb(74,74,74)"/><rect x="648.6" y="301.2" width="0.9" height="0.9" fill="rgb(96,96,96)"/>
<rect x="666.2" y="297.0" width="1.1" height="1.1" fill="rgb(22,22,22)"/><rect x="662.5" y="304.5" width="1.2" height="1.2" fill="rgb(5,5,5)"/><rect x="665.8" y="306.6" width="0.8" height="0.8" fill="rgb(4,4,4)"/><rect x="668.2" y="302.7" width="0.9" height="0.9" fill="rgb(68,68,68)"/><rect x="668.5" y="297.8" width="0.8" height="0.8" fill="rgb(5,5,5)"/><rect x="667.2" y="303.9" width="1.2" height="1.2" fill="rgb(31,31,31)"/><rect x="664.3" y="305.2" width="1.1" height="1.1" fill="rgb(47,47,47)"/><rect x="663.9" y="296.2" width="1.1" height="1.1" fill="rgb(8,8,8)"/><rect x="665.5" y="299.3" width="1.1" height="1.1" fill="rgb(26,26,26)"/><rect x="664.0" y="299.5" width="0.8" height="0.8" fill="rgb(17,17,17)"/><rect x="667.2" y="306.2" width="1.1" height="1.1" fill="rgb(22,22,22)"/><rect x="659.3" y="305.3" width="1.0" height="1.0" fill="rgb(16,16,16)"/><rect x="665.5" y="297.2" width="1.4" height="1.4" fill="rgb(7,7,7)"/><rect x="658.6" y="302.4" width="1.3" height="1.3" fill="rgb(64,64,64)"/><rect x="667.0" y="302.6" width="0.7" height="0.7" fill="rgb(13,13,13)"/><rect x="668.1" y="300.8" width="1.3" height="1.3" fill="rgb(26,26,26)"/><rect x="666.6" y="299.0" width="0.8" height="0.8" fill="rgb(54,54,54)"/><rect x="665.5" y="301.1" width="1.1" height="1.1" fill="rgb(43,43,43)"/><rect x="664.8" y="305.1" width="0.7" height="0.7" fill="rgb(14,14,14)"/><rect x="663.8" y="306.1" width="1.1" height="1.1" fill="rgb(14,14,14)"/><rect x="667.0" y="301.8" width="1.1" height="1.1" fill="rgb(12,12,12)"/><rect x="663.0" y="303.7" width="1.2" height="1.2" fill="rgb(38,38,38)"/><rect x="665.5" y="302.3" width="0.9" height="0.9" fill="rgb(38,38,38)"/><rect x="663.2" y="300.7" width="0.7" height="0.7" fill="rgb(48,48,48)"/><rect x="661.7" y="303.3" width="0.8" height="0.8" fill="rgb(66,66,66)"/><rect x="662.4" y="305.7" width="0.9" height="0.9" fill="rgb(29,29,29)"/><rect x="668.0" y="297.2" width="0.9" height="0.9" fill="rgb(13,13,13)"/><rect x="663.9" y="299.6" width="0.6" height="0.6" fill="rgb(63,63,63)"/><rect x="659.3" y="304.2" width="0.9" height="0.9" fill="rgb(61,61,61)"/><rect x="662.3" y="302.4" width="0.6" height="0.6" fill="rgb(38,38,38)"/><rect x="660.6" y="297.5" width="0.7" height="0.7" fill="rgb(43,43,43)"/><rect x="661.4" y="304.7" width="0.7" height="0.7" fill="rgb(19,19,19)"/><rect x="658.5" y="301.1" width="0.7" height="0.7" fill="rgb(34,34,34)"/><rect x="666.1" y="296.3" width="0.8" height="0.8" fill="rgb(8,8,8)"/><rect x="669.6" y="299.6" width="1.0" height="1.0" fill="rgb(3,3,3)"/><rect x="666.9" y="300.0" width="1.3" height="1.3" fill="rgb(43,43,43)"/><rect x="664.8" y="299.8" width="1.2" height="1.2" fill="rgb(15,15,15)"/><rect x="659.4" y="304.6" width="1.3" height="1.3" fill="rgb(12,12,12)"/><rect x="664.7" y="305.1" width="1.0" height="1.0" fill="rgb(26,26,26)"/><rect x="665.8" y="303.4" width="1.2" height="1.2" fill="rgb(62,62,62)"/><rect x="668.0" y="302.7" width="1.2" height="1.2" fill="rgb(2,2,2)"/><rect x="664.9" y="300.2" width="1.1" height="1.1" fill="rgb(38,38,38)"/><rect x="662.0" y="299.6" width="0.9" height="0.9" fill="rgb(40,40,40)"/><rect x="659.9" y="303.8" width="1.0" height="1.0" fill="rgb(30,30,30)"/><rect x="668.5" y="302.4" width="1.0" height="1.0" fill="rgb(16,16,16)"/><rect x="664.5" y="296.6" width="1.0" height="1.0" fill="rgb(12,12,12)"/><rect x="662.6" y="302.1" width="0.7" height="0.7" fill="rgb(30,30,30)"/><rect x="667.1" y="303.7" width="1.0" height="1.0" fill="rgb(2,2,2)"/><rect x="663.0" y="300.6" width="1.2" height="1.2" fill="rgb(54,54,54)"/><rect x="663.0" y="301.6" width="1.0" height="1.0" fill="rgb(26,26,26)"/><rect x="665.6" y="301.0" width="1.3" height="1.3" fill="rgb(69,69,69)"/><rect x="663.5" y="296.5" width="0.8" height="0.8" fill="rgb(68,68,68)"/><rect x="658.0" y="301.8" width="1.3" height="1.3" fill="rgb(11,11,11)"/><rect x="665.6" y="296.3" width="0.7" height="0.7" fill="rgb(24,24,24)"/><rect x="663.9" y="299.6" width="1.3" height="1.3" fill="rgb(19,19,19)"/><rect x="664.8" y="300.0" width="1.0" height="1.0" fill="rgb(64,64,64)"/><rect x="664.7" y="304.3" width="1.0" height="1.0" fill="rgb(22,22,22)"/><rect x="666.3" y="302.3" width="0.7" height="0.7" fill="rgb(65,65,65)"/><rect x="661.8" y="296.8" width="0.7" height="0.7" fill="rgb(54,54,54)"/><rect x="667.0" y="304.4" width="1.1" height="1.1" fill="rgb(25,25,25)"/><rect x="666.9" y="298.6" width="1.1" height="1.1" fill="rgb(61,61,61)"/><rect x="668.7" y="305.3" width="1.1" height="1.1" fill="rgb(27,27,27)"/><rect x="664.6" y="298.9" width="1.4" height="1.4" fill="rgb(40,40,40)"/><rect x="660.8" y="305.7" width="1.0" height="1.0" fill="rgb(12,12,12)"/><rect x="663.9" y="300.6" width="1.3" height="1.3" fill="rgb(17,17,17)"/><rect x="660.2" y="297.1" width="1.1" height="1.1" fill="rgb(46,46,46)"/><rect x="664.2" y="302.0" width="0.6" height="0.6" fill="rgb(10,10,10)"/><rect x="661.3" y="299.3" width="1.0" height="1.0" fill="rgb(62,62,62)"/><rect x="665.6" y="303.5" width="1.1" height="1.1" fill="rgb(1,1,1)"/><rect x="667.4" y="301.9" width="0.7" height="0.7" fill="rgb(25,25,25)"/><rect x="664.7" y="306.0" width="1.1" height="1.1" fill="rgb(14,14,14)"/><rect x="661.4" y="299.2" width="0.7" height="0.7" fill="rgb(65,65,65)"/><rect x="664.3" y="303.8" width="0.7" height="0.7" fill="rgb(44,44,44)"/><rect x="667.6" y="298.0" width="0.9" height="0.9" fill="rgb(18,18,18)"/><rect x="668.6" y="302.0" width="1.0" height="1.0" fill="rgb(24,24,24)"/><rect x="661.6" y="298.6" width="1.3" height="1.3" fill="rgb(51,51,51)"/><rect x="664.3" y="307.5" width="0.6" height="0.6" fill="rgb(37,37,37)"/><rect x="662.1" y="303.3" width="0.6" height="0.6" fill="rgb(54,54,54)"/><rect x="668.0" y="301.8" width="1.4" height="1.4" fill="rgb(9,9,9)"/><rect x="665.4" y="305.9" width="1.0" height="1.0" fill="rgb(44,44,44)"/><rect x="664.9" y="299.8" width="0.8" height="0.8" fill="rgb(21,21,21)"/><rect x="669.2" y="303.3" width="1.2" height="1.2" fill="rgb(50,50,50)"/><rect x="669.3" y="301.8" width="1.2" height="1.2" fill="rgb(32,32,32)"/><rect x="663.9" y="298.1" width="0.8" height="0.8" fill="rgb(7,7,7)"/><rect x="664.2" y="302.6" width="0.9" height="0.9" fill="rgb(52,52,52)"/><rect x="662.1" y="296.5" width="1.2" height="1.2" fill="rgb(18,18,18)"/><rect x="660.5" y="300.4" width="1.2" height="1.2" fill="rgb(36,36,36)"/><rect x="663.4" y="306.1" width="1.4" height="1.4" fill="rgb(15,15,15)"/><rect x="664.5" y="301.5" width="0.8" height="0.8" fill="rgb(16,16,16)"/><rect x="663.7" y="295.8" width="1.2" height="1.2" fill="rgb(22,22,22)"/>
<path d="M678.14 296.2 L679.64 298.7" stroke="#888" stroke-width="0.5"/>
<rect x="565.9" y="317.4" width="0.7" height="0.7" fill="rgb(72,72,72)"/><rect x="561.5" y="315.9" width="0.9" height="0.9" fill="rgb(78,78,78)"/><rect x="559.4" y="319.3" width="0.9" height="0.9" fill="rgb(68,68,68)"/><rect x="560.4" y="319.9" width="0.8" height="0.8" fill="rgb(24,24,24)"/><rect x="565.4" y="321.6" width="0.6" height="0.6" fill="rgb(72,72,72)"/><rect x="564.6" y="318.7" width="0.6" height="0.6" fill="rgb(74,74,74)"/><rect x="564.0" y="319.2" width="0.6" height="0.6" fill="rgb(3,3,3)"/><rect x="563.0" y="315.5" width="0.9" height="0.9" fill="rgb(58,58,58)"/><rect x="567.7" y="319.7" width="0.7" height="0.7" fill="rgb(65,65,65)"/><rect x="566.7" y="314.5" width="0.6" height="0.6" fill="rgb(69,69,69)"/><rect x="569.3" y="316.2" width="0.6" height="0.6" fill="rgb(16,16,16)"/><rect x="564.5" y="318.5" width="0.9" height="0.9" fill="rgb(64,64,64)"/><rect x="561.1" y="315.4" width="0.9" height="0.9" fill="rgb(22,22,22)"/><rect x="564.8" y="318.7" width="0.9" height="0.9" fill="rgb(16,16,16)"/>
<rect x="580.0" y="320.9" width="0.6" height="0.6" fill="rgb(15,15,15)"/><rect x="580.1" y="322.7" width="0.9" height="0.9" fill="rgb(19,19,19)"/><rect x="583.8" y="317.6" width="1.2" height="1.2" fill="rgb(37,37,37)"/><rect x="583.4" y="318.9" width="0.9" height="0.9" fill="rgb(46,46,46)"/><rect x="578.5" y="321.9" width="1.0" height="1.0" fill="rgb(12,12,12)"/><rect x="581.2" y="317.9" width="1.2" height="1.2" fill="rgb(10,10,10)"/><rect x="582.1" y="318.3" width="1.1" height="1.1" fill="rgb(58,58,58)"/><rect x="583.9" y="318.5" width="0.9" height="0.9" fill="rgb(47,47,47)"/><rect x="582.2" y="321.2" width="0.8" height="0.8" fill="rgb(49,49,49)"/><rect x="580.6" y="324.2" width="0.8" height="0.8" fill="rgb(12,12,12)"/><rect x="580.1" y="315.7" width="0.7" height="0.7" fill="rgb(38,38,38)"/><rect x="585.0" y="320.7" width="1.1" height="1.1" fill="rgb(47,47,47)"/><rect x="579.5" y="316.9" width="0.9" height="0.9" fill="rgb(23,23,23)"/><rect x="581.2" y="318.0" width="1.2" height="1.2" fill="rgb(1,1,1)"/><rect x="581.2" y="319.8" width="1.2" height="1.2" fill="rgb(30,30,30)"/><rect x="577.2" y="322.2" width="0.8" height="0.8" fill="rgb(27,27,27)"/><rect x="576.4" y="317.4" width="1.1" height="1.1" fill="rgb(38,38,38)"/><rect x="579.9" y="320.1" width="0.7" height="0.7" fill="rgb(50,50,50)"/><rect x="578.7" y="314.8" width="0.7" height="0.7" fill="rgb(26,26,26)"/><rect x="581.6" y="315.1" width="0.7" height="0.7" fill="rgb(27,27,27)"/><rect x="582.1" y="317.6" width="0.7" height="0.7" fill="rgb(18,18,18)"/><rect x="579.6" y="313.7" width="0.7" height="0.7" fill="rgb(9,9,9)"/><rect x="581.0" y="320.4" width="1.0" height="1.0" fill="rgb(9,9,9)"/><rect x="580.2" y="319.3" width="1.3" height="1.3" fill="rgb(43,43,43)"/><rect x="585.7" y="322.0" width="0.7" height="0.7" fill="rgb(23,23,23)"/><rect x="585.6" y="317.9" width="1.1" height="1.1" fill="rgb(26,26,26)"/>
<rect x="599.1" y="322.3" width="0.4" height="0.4" fill="rgb(78,78,78)"/><rect x="597.6" y="318.8" width="0.6" height="0.6" fill="rgb(131,131,131)"/><rect x="596.7" y="315.8" width="0.7" height="0.7" fill="rgb(101,101,101)"/><rect x="600.0" y="321.4" width="0.6" height="0.6" fill="rgb(126,126,126)"/><rect x="599.9" y="317.2" width="0.6" height="0.6" fill="rgb(127,127,127)"/><rect x="596.5" y="319.2" width="0.7" height="0.7" fill="rgb(139,139,139)"/><rect x="598.3" y="314.4" width="0.7" height="0.7" fill="rgb(121,121,121)"/><rect x="596.1" y="316.5" width="0.5" height="0.5" fill="rgb(116,116,116)"/><rect x="599.7" y="320.0" width="0.7" height="0.7" fill="rgb(124,124,124)"/><rect x="596.7" y="317.5" width="0.6" height="0.6" fill="rgb(100,100,100)"/><rect x="595.9" y="316.9" width="0.7" height="0.7" fill="rgb(143,143,143)"/><rect x="599.3" y="322.1" width="0.7" height="0.7" fill="rgb(94,94,94)"/><rect x="592.0" y="319.1" width="0.4" height="0.4" fill="rgb(108,108,108)"/><rect x="600.1" y="322.5" width="0.8" height="0.8" fill="rgb(106,106,106)"/><rect x="600.5" y="320.6" width="0.6" height="0.6" fill="rgb(124,124,124)"/><rect x="593.8" y="318.2" width="0.7" height="0.7" fill="rgb(106,106,106)"/><rect x="593.0" y="321.7" width="0.5" height="0.5" fill="rgb(121,121,121)"/><rect x="594.2" y="321.5" width="0.4" height="0.4" fill="rgb(148,148,148)"/><rect x="597.6" y="318.9" width="0.5" height="0.5" fill="rgb(95,95,95)"/><rect x="600.3" y="318.8" width="0.6" height="0.6" fill="rgb(122,122,122)"/><rect x="596.8" y="319.9" width="0.5" height="0.5" fill="rgb(126,126,126)"/><rect x="600.7" y="317.5" width="0.5" height="0.5" fill="rgb(132,132,132)"/><rect x="596.8" y="319.5" width="0.5" height="0.5" fill="rgb(129,129,129)"/><rect x="599.1" y="315.1" width="0.6" height="0.6" fill="rgb(110,110,110)"/><rect x="598.6" y="324.3" width="0.5" height="0.5" fill="rgb(117,117,117)"/><rect x="599.8" y="314.2" width="0.6" height="0.6" fill="rgb(86,86,86)"/>
<rect x="612.6" y="317.9" width="0.9" height="0.9" fill="rgb(42,42,42)"/><rect x="615.9" y="316.4" width="0.7" height="0.7" fill="rgb(30,30,30)"/><rect x="612.5" y="319.6" width="0.5" height="0.5" fill="rgb(86,86,86)"/><rect x="613.8" y="321.1" width="0.7" height="0.7" fill="rgb(57,57,57)"/><rect x="610.1" y="320.5" width="0.8" height="0.8" fill="rgb(43,43,43)"/><rect x="619.3" y="316.3" width="0.5" height="0.5" fill="rgb(99,99,99)"/><rect x="618.7" y="315.7" width="0.6" height="0.6" fill="rgb(99,99,99)"/><rect x="614.1" y="318.3" width="0.5" height="0.5" fill="rgb(114,114,114)"/><rect x="612.9" y="316.5" width="0.6" height="0.6" fill="rgb(17,17,17)"/><rect x="614.9" y="323.7" width="0.7" height="0.7" fill="rgb(18,18,18)"/><rect x="618.7" y="315.7" width="0.6" height="0.6" fill="rgb(106,106,106)"/><rect x="610.2" y="315.2" width="0.8" height="0.8" fill="rgb(107,107,107)"/><rect x="615.6" y="313.4" width="0.6" height="0.6" fill="rgb(83,83,83)"/><rect x="609.4" y="317.6" width="0.7" height="0.7" fill="rgb(105,105,105)"/><rect x="611.8" y="317.7" width="0.6" height="0.6" fill="rgb(16,16,16)"/><rect x="613.2" y="318.6" width="0.7" height="0.7" fill="rgb(17,17,17)"/><rect x="610.3" y="318.7" width="0.8" height="0.8" fill="rgb(103,103,103)"/><rect x="619.7" y="318.8" width="0.7" height="0.7" fill="rgb(67,67,67)"/><rect x="611.6" y="313.9" width="0.7" height="0.7" fill="rgb(50,50,50)"/><rect x="615.5" y="318.2" width="0.8" height="0.8" fill="rgb(76,76,76)"/><rect x="618.6" y="319.3" width="0.8" height="0.8" fill="rgb(111,111,111)"/><rect x="611.4" y="323.7" width="0.8" height="0.8" fill="rgb(58,58,58)"/><rect x="614.9" y="318.0" width="0.9" height="0.9" fill="rgb(75,75,75)"/><rect x="611.4" y="323.2" width="0.7" height="0.7" fill="rgb(56,56,56)"/><rect x="609.3" y="317.8" width="0.6" height="0.6" fill="rgb(52,52,52)"/><rect x="610.5" y="320.4" width="0.9" height="0.9" fill="rgb(35,35,35)"/><rect x="615.9" y="315.4" width="0.8" height="0.8" fill="rgb(32,32,32)"/><rect x="608.3" y="318.2" width="0.8" height="0.8" fill="rgb(95,95,95)"/><rect x="612.9" y="321.2" width="0.6" height="0.6" fill="rgb(70,70,70)"/><rect x="611.0" y="314.8" width="0.5" height="0.5" fill="rgb(86,86,86)"/><rect x="617.5" y="315.9" width="0.5" height="0.5" fill="rgb(36,36,36)"/><rect x="616.4" y="318.5" width="1.0" height="1.0" fill="rgb(73,73,73)"/><rect x="611.3" y="314.1" width="1.0" height="1.0" fill="rgb(73,73,73)"/><rect x="610.9" y="315.4" width="0.8" height="0.8" fill="rgb(71,71,71)"/><rect x="613.2" y="316.3" width="0.8" height="0.8" fill="rgb(54,54,54)"/><rect x="614.5" y="317.1" width="0.6" height="0.6" fill="rgb(4,4,4)"/><rect x="615.1" y="312.9" width="0.8" height="0.8" fill="rgb(44,44,44)"/><rect x="616.6" y="313.8" width="0.8" height="0.8" fill="rgb(30,30,30)"/><rect x="613.2" y="322.0" width="0.7" height="0.7" fill="rgb(51,51,51)"/><rect x="610.8" y="314.2" width="0.5" height="0.5" fill="rgb(68,68,68)"/><rect x="615.8" y="318.9" width="0.9" height="0.9" fill="rgb(69,69,69)"/><rect x="617.6" y="316.8" width="0.5" height="0.5" fill="rgb(46,46,46)"/><rect x="609.3" y="315.3" width="1.0" height="1.0" fill="rgb(57,57,57)"/><rect x="612.9" y="319.3" width="0.8" height="0.8" fill="rgb(25,25,25)"/><rect x="614.7" y="319.1" width="0.5" height="0.5" fill="rgb(82,82,82)"/><rect x="618.6" y="322.7" width="0.5" height="0.5" fill="rgb(104,104,104)"/><rect x="614.6" y="318.9" width="0.9" height="0.9" fill="rgb(29,29,29)"/><rect x="614.2" y="316.5" width="0.5" height="0.5" fill="rgb(92,92,92)"/><rect x="613.0" y="313.1" width="0.9" height="0.9" fill="rgb(10,10,10)"/><rect x="610.9" y="315.0" width="0.7" height="0.7" fill="rgb(111,111,111)"/><rect x="614.1" y="324.3" width="0.9" height="0.9" fill="rgb(1,1,1)"/><rect x="618.8" y="318.9" width="0.9" height="0.9" fill="rgb(9,9,9)"/><rect x="612.5" y="323.2" width="0.6" height="0.6" fill="rgb(103,103,103)"/><rect x="613.2" y="318.7" width="0.7" height="0.7" fill="rgb(68,68,68)"/><rect x="610.0" y="320.4" width="0.6" height="0.6" fill="rgb(95,95,95)"/><rect x="611.2" y="322.0" width="0.8" height="0.8" fill="rgb(50,50,50)"/><rect x="610.3" y="321.8" width="1.0" height="1.0" fill="rgb(94,94,94)"/><rect x="611.8" y="317.5" width="0.5" height="0.5" fill="rgb(116,116,116)"/><rect x="612.8" y="313.4" width="0.7" height="0.7" fill="rgb(72,72,72)"/><rect x="619.6" y="317.7" width="0.8" height="0.8" fill="rgb(37,37,37)"/><rect x="609.3" y="321.0" width="0.7" height="0.7" fill="rgb(82,82,82)"/><rect x="609.7" y="315.1" width="0.9" height="0.9" fill="rgb(33,33,33)"/><rect x="617.0" y="318.6" width="0.7" height="0.7" fill="rgb(70,70,70)"/><rect x="616.6" y="313.5" width="0.5" height="0.5" fill="rgb(99,99,99)"/><rect x="616.4" y="313.4" width="0.8" height="0.8" fill="rgb(32,32,32)"/><rect x="617.4" y="314.2" width="0.8" height="0.8" fill="rgb(109,109,109)"/><rect x="613.5" y="319.6" width="0.8" height="0.8" fill="rgb(95,95,95)"/><rect x="615.7" y="323.2" width="1.0" height="1.0" fill="rgb(28,28,28)"/><rect x="610.6" y="315.6" width="0.7" height="0.7" fill="rgb(24,24,24)"/><rect x="614.1" y="323.5" width="0.9" height="0.9" fill="rgb(55,55,55)"/><rect x="618.7" y="321.2" width="0.9" height="0.9" fill="rgb(27,27,27)"/><rect x="609.3" y="315.7" width="0.9" height="0.9" fill="rgb(62,62,62)"/><rect x="610.0" y="319.2" width="0.6" height="0.6" fill="rgb(23,23,23)"/><rect x="616.4" y="323.0" width="0.7" height="0.7" fill="rgb(67,67,67)"/><rect x="611.1" y="320.9" width="0.6" height="0.6" fill="rgb(5,5,5)"/><rect x="617.7" y="318.6" width="0.6" height="0.6" fill="rgb(75,75,75)"/><rect x="614.7" y="316.6" width="0.8" height="0.8" fill="rgb(41,41,41)"/><rect x="613.8" y="318.6" width="0.5" height="0.5" fill="rgb(118,118,118)"/><rect x="616.9" y="315.6" width="0.8" height="0.8" fill="rgb(31,31,31)"/><rect x="614.8" y="314.9" width="1.0" height="1.0" fill="rgb(92,92,92)"/><rect x="616.8" y="313.3" width="0.6" height="0.6" fill="rgb(4,4,4)"/><rect x="615.0" y="320.7" width="0.5" height="0.5" fill="rgb(6,6,6)"/><rect x="609.1" y="316.6" width="0.7" height="0.7" fill="rgb(113,113,113)"/><rect x="615.2" y="317.9" width="0.8" height="0.8" fill="rgb(47,47,47)"/><rect x="618.6" y="322.6" width="0.6" height="0.6" fill="rgb(67,67,67)"/><rect x="610.5" y="314.0" width="0.8" height="0.8" fill="rgb(47,47,47)"/><rect x="612.3" y="319.0" width="1.0" height="1.0" fill="rgb(119,119,119)"/><rect x="614.5" y="319.4" width="0.6" height="0.6" fill="rgb(42,42,42)"/><rect x="618.8" y="315.2" width="0.9" height="0.9" fill="rgb(5,5,5)"/><rect x="615.4" y="313.7" width="0.8" height="0.8" fill="rgb(118,118,118)"/><rect x="616.0" y="319.1" width="0.9" height="0.9" fill="rgb(112,112,112)"/><rect x="613.0" y="315.9" width="0.8" height="0.8" fill="rgb(90,90,90)"/><rect x="616.8" y="320.5" width="0.6" height="0.6" fill="rgb(14,14,14)"/><rect x="612.3" y="318.8" width="0.6" height="0.6" fill="rgb(17,17,17)"/><rect x="614.0" y="318.1" width="0.9" height="0.9" fill="rgb(23,23,23)"/><rect x="619.9" y="319.9" width="0.6" height="0.6" fill="rgb(112,112,112)"/><rect x="618.1" y="314.5" width="0.6" height="0.6" fill="rgb(53,53,53)"/><rect x="618.9" y="321.7" width="0.9" height="0.9" fill="rgb(75,75,75)"/><rect x="611.2" y="319.4" width="0.9" height="0.9" fill="rgb(57,57,57)"/><rect x="613.1" y="317.2" width="0.6" height="0.6" fill="rgb(6,6,6)"/><rect x="613.4" y="314.5" width="0.6" height="0.6" fill="rgb(104,104,104)"/><rect x="614.0" y="322.1" width="0.6" height="0.6" fill="rgb(32,32,32)"/><rect x="616.0" y="316.0" width="0.6" height="0.6" fill="rgb(58,58,58)"/><rect x="612.0" y="323.8" width="0.6" height="0.6" fill="rgb(117,117,117)"/><rect x="619.5" y="320.4" width="0.8" height="0.8" fill="rgb(25,25,25)"/><rect x="611.5" y="319.0" width="0.6" height="0.6" fill="rgb(24,24,24)"/><rect x="610.2" y="322.9" width="1.0" height="1.0" fill="rgb(111,111,111)"/><rect x="616.5" y="320.1" width="0.9" height="0.9" fill="rgb(6,6,6)"/><rect x="613.7" y="315.6" width="1.0" height="1.0" fill="rgb(1,1,1)"/><rect x="615.5" y="315.7" width="0.6" height="0.6" fill="rgb(0,0,0)"/><rect x="616.4" y="315.1" width="0.6" height="0.6" fill="rgb(52,52,52)"/><rect x="616.3" y="317.2" width="0.8" height="0.8" fill="rgb(16,16,16)"/><rect x="616.4" y="323.1" width="0.9" height="0.9" fill="rgb(23,23,23)"/><rect x="615.5" y="319.2" width="0.8" height="0.8" fill="rgb(59,59,59)"/><rect x="613.9" y="320.8" width="0.8" height="0.8" fill="rgb(84,84,84)"/><rect x="616.0" y="314.6" width="0.6" height="0.6" fill="rgb(7,7,7)"/><rect x="613.8" y="315.0" width="0.9" height="0.9" fill="rgb(6,6,6)"/><rect x="615.4" y="315.5" width="0.9" height="0.9" fill="rgb(103,103,103)"/><rect x="613.7" y="318.4" width="1.0" height="1.0" fill="rgb(57,57,57)"/><rect x="616.2" y="316.6" width="0.6" height="0.6" fill="rgb(99,99,99)"/><rect x="613.0" y="320.1" width="0.7" height="0.7" fill="rgb(71,71,71)"/><rect x="618.3" y="318.7" width="0.7" height="0.7" fill="rgb(61,61,61)"/><rect x="617.8" y="321.8" width="0.9" height="0.9" fill="rgb(103,103,103)"/><rect x="612.2" y="323.0" width="0.7" height="0.7" fill="rgb(90,90,90)"/><rect x="619.3" y="320.5" width="1.0" height="1.0" fill="rgb(59,59,59)"/><rect x="610.2" y="318.2" width="0.8" height="0.8" fill="rgb(2,2,2)"/><rect x="616.8" y="318.1" width="0.6" height="0.6" fill="rgb(12,12,12)"/><rect x="614.4" y="324.0" width="0.5" height="0.5" fill="rgb(11,11,11)"/><rect x="613.7" y="316.5" width="0.5" height="0.5" fill="rgb(71,71,71)"/><rect x="610.6" y="316.6" width="0.9" height="0.9" fill="rgb(12,12,12)"/><rect x="617.8" y="315.0" width="0.5" height="0.5" fill="rgb(14,14,14)"/><rect x="610.4" y="318.7" width="0.6" height="0.6" fill="rgb(14,14,14)"/><rect x="612.8" y="319.5" width="0.8" height="0.8" fill="rgb(103,103,103)"/><rect x="616.8" y="321.9" width="0.9" height="0.9" fill="rgb(19,19,19)"/><rect x="617.0" y="313.4" width="0.7" height="0.7" fill="rgb(50,50,50)"/><rect x="616.5" y="315.1" width="0.7" height="0.7" fill="rgb(112,112,112)"/><rect x="614.9" y="315.5" width="0.6" height="0.6" fill="rgb(40,40,40)"/><rect x="608.8" y="320.8" width="0.9" height="0.9" fill="rgb(109,109,109)"/><rect x="616.6" y="313.7" width="0.5" height="0.5" fill="rgb(62,62,62)"/><rect x="619.9" y="317.1" width="0.6" height="0.6" fill="rgb(50,50,50)"/>
<rect x="628.3" y="315.6" width="0.8" height="0.8" fill="rgb(7,7,7)"/><rect x="626.8" y="320.5" width="0.5" height="0.5" fill="rgb(15,15,15)"/><rect x="636.4" y="317.3" width="1.0" height="1.0" fill="rgb(69,69,69)"/><rect x="633.0" y="312.7" width="0.9" height="0.9" fill="rgb(3,3,3)"/><rect x="628.7" y="315.9" width="0.8" height="0.8" fill="rgb(30,30,30)"/><rect x="624.8" y="316.9" width="0.8" height="0.8" fill="rgb(27,27,27)"/><rect x="626.5" y="317.9" width="1.0" height="1.0" fill="rgb(31,31,31)"/><rect x="629.2" y="323.5" width="0.6" height="0.6" fill="rgb(65,65,65)"/><rect x="635.4" y="317.3" width="0.6" height="0.6" fill="rgb(51,51,51)"/><rect x="628.6" y="318.1" width="0.6" height="0.6" fill="rgb(14,14,14)"/><rect x="629.8" y="322.6" width="0.6" height="0.6" fill="rgb(26,26,26)"/><rect x="634.9" y="321.0" width="0.9" height="0.9" fill="rgb(67,67,67)"/><rect x="626.2" y="316.4" width="0.6" height="0.6" fill="rgb(78,78,78)"/><rect x="626.2" y="319.7" width="0.8" height="0.8" fill="rgb(51,51,51)"/><rect x="629.8" y="321.6" width="0.6" height="0.6" fill="rgb(56,56,56)"/><rect x="627.3" y="322.0" width="0.5" height="0.5" fill="rgb(38,38,38)"/><rect x="632.9" y="316.1" width="0.8" height="0.8" fill="rgb(54,54,54)"/><rect x="629.6" y="324.9" width="0.6" height="0.6" fill="rgb(84,84,84)"/><rect x="631.7" y="319.8" width="0.9" height="0.9" fill="rgb(48,48,48)"/><rect x="634.7" y="320.1" width="0.7" height="0.7" fill="rgb(80,80,80)"/><rect x="633.2" y="320.4" width="1.0" height="1.0" fill="rgb(81,81,81)"/><rect x="633.1" y="321.7" width="0.7" height="0.7" fill="rgb(74,74,74)"/><rect x="626.4" y="314.4" width="0.9" height="0.9" fill="rgb(56,56,56)"/><rect x="630.4" y="312.9" width="0.9" height="0.9" fill="rgb(52,52,52)"/><rect x="632.0" y="313.1" width="1.0" height="1.0" fill="rgb(13,13,13)"/><rect x="631.1" y="318.1" width="0.9" height="0.9" fill="rgb(64,64,64)"/><rect x="624.5" y="318.6" width="0.8" height="0.8" fill="rgb(45,45,45)"/><rect x="632.2" y="312.6" width="0.8" height="0.8" fill="rgb(41,41,41)"/><rect x="626.6" y="319.8" width="0.9" height="0.9" fill="rgb(32,32,32)"/><rect x="627.2" y="321.6" width="0.7" height="0.7" fill="rgb(35,35,35)"/><rect x="632.3" y="312.7" width="0.7" height="0.7" fill="rgb(48,48,48)"/><rect x="632.4" y="321.9" width="0.6" height="0.6" fill="rgb(63,63,63)"/><rect x="629.1" y="317.5" width="1.0" height="1.0" fill="rgb(35,35,35)"/><rect x="634.1" y="313.5" width="1.0" height="1.0" fill="rgb(22,22,22)"/><rect x="625.5" y="321.4" width="0.5" height="0.5" fill="rgb(5,5,5)"/><rect x="626.6" y="316.6" width="1.0" height="1.0" fill="rgb(85,85,85)"/><rect x="624.6" y="317.0" width="0.8" height="0.8" fill="rgb(56,56,56)"/><rect x="629.3" y="314.8" width="0.7" height="0.7" fill="rgb(65,65,65)"/><rect x="627.1" y="323.6" width="0.8" height="0.8" fill="rgb(57,57,57)"/><rect x="634.2" y="320.9" width="0.7" height="0.7" fill="rgb(61,61,61)"/><rect x="625.3" y="315.7" width="1.0" height="1.0" fill="rgb(53,53,53)"/><rect x="626.0" y="320.3" width="1.0" height="1.0" fill="rgb(37,37,37)"/><rect x="625.2" y="317.5" width="0.6" height="0.6" fill="rgb(34,34,34)"/><rect x="636.8" y="317.7" width="0.8" height="0.8" fill="rgb(12,12,12)"/><rect x="635.1" y="315.1" width="0.9" height="0.9" fill="rgb(108,108,108)"/><rect x="634.2" y="315.9" width="0.6" height="0.6" fill="rgb(31,31,31)"/><rect x="626.4" y="318.3" width="0.6" height="0.6" fill="rgb(20,20,20)"/><rect x="627.5" y="314.9" width="0.7" height="0.7" fill="rgb(109,109,109)"/><rect x="630.1" y="317.5" width="0.7" height="0.7" fill="rgb(86,86,86)"/><rect x="629.1" y="323.7" width="0.5" height="0.5" fill="rgb(33,33,33)"/><rect x="633.6" y="314.3" width="0.8" height="0.8" fill="rgb(21,21,21)"/><rect x="626.1" y="318.6" width="0.6" height="0.6" fill="rgb(71,71,71)"/><rect x="624.5" y="317.2" width="0.8" height="0.8" fill="rgb(45,45,45)"/><rect x="632.7" y="320.2" width="0.9" height="0.9" fill="rgb(11,11,11)"/><rect x="633.1" y="320.1" width="0.8" height="0.8" fill="rgb(90,90,90)"/><rect x="626.6" y="314.8" width="0.5" height="0.5" fill="rgb(1,1,1)"/><rect x="631.3" y="314.8" width="0.9" height="0.9" fill="rgb(38,38,38)"/><rect x="632.6" y="321.6" width="0.5" height="0.5" fill="rgb(99,99,99)"/><rect x="627.6" y="316.6" width="0.7" height="0.7" fill="rgb(42,42,42)"/><rect x="636.7" y="320.6" width="0.8" height="0.8" fill="rgb(105,105,105)"/><rect x="626.2" y="320.5" width="0.6" height="0.6" fill="rgb(4,4,4)"/><rect x="636.4" y="316.0" width="0.7" height="0.7" fill="rgb(98,98,98)"/><rect x="632.3" y="315.2" width="0.8" height="0.8" fill="rgb(105,105,105)"/><rect x="624.6" y="318.8" width="0.6" height="0.6" fill="rgb(42,42,42)"/><rect x="630.4" y="315.6" width="0.7" height="0.7" fill="rgb(96,96,96)"/><rect x="625.2" y="319.2" width="0.6" height="0.6" fill="rgb(19,19,19)"/><rect x="629.0" y="320.6" width="1.0" height="1.0" fill="rgb(31,31,31)"/><rect x="628.9" y="317.7" width="0.8" height="0.8" fill="rgb(42,42,42)"/><rect x="629.6" y="319.6" width="0.6" height="0.6" fill="rgb(90,90,90)"/><rect x="629.1" y="321.2" width="0.6" height="0.6" fill="rgb(31,31,31)"/><rect x="631.0" y="319.7" width="0.8" height="0.8" fill="rgb(37,37,37)"/><rect x="634.1" y="323.2" width="0.5" height="0.5" fill="rgb(29,29,29)"/><rect x="632.1" y="316.5" width="0.7" height="0.7" fill="rgb(91,91,91)"/><rect x="631.8" y="316.1" width="0.7" height="0.7" fill="rgb(79,79,79)"/><rect x="626.4" y="323.0" width="0.6" height="0.6" fill="rgb(104,104,104)"/><rect x="627.8" y="318.4" width="0.7" height="0.7" fill="rgb(14,14,14)"/><rect x="629.9" y="315.2" width="0.9" height="0.9" fill="rgb(64,64,64)"/><rect x="628.7" y="320.9" width="0.8" height="0.8" fill="rgb(23,23,23)"/><rect x="632.5" y="316.9" width="0.8" height="0.8" fill="rgb(59,59,59)"/><rect x="630.2" y="324.2" width="0.7" height="0.7" fill="rgb(72,72,72)"/><rect x="627.6" y="317.1" width="0.7" height="0.7" fill="rgb(9,9,9)"/><rect x="633.6" y="323.9" width="0.7" height="0.7" fill="rgb(72,72,72)"/><rect x="634.7" y="321.6" width="0.7" height="0.7" fill="rgb(55,55,55)"/><rect x="630.5" y="320.2" width="0.7" height="0.7" fill="rgb(24,24,24)"/><rect x="634.8" y="322.5" width="0.6" height="0.6" fill="rgb(44,44,44)"/><rect x="635.6" y="315.3" width="0.9" height="0.9" fill="rgb(94,94,94)"/><rect x="633.3" y="321.2" width="0.5" height="0.5" fill="rgb(74,74,74)"/><rect x="628.9" y="315.2" width="0.7" height="0.7" fill="rgb(72,72,72)"/><rect x="629.8" y="315.4" width="0.9" height="0.9" fill="rgb(38,38,38)"/><rect x="629.1" y="316.6" width="0.6" height="0.6" fill="rgb(100,100,100)"/><rect x="630.5" y="313.2" width="0.5" height="0.5" fill="rgb(4,4,4)"/><rect x="632.5" y="321.0" width="0.7" height="0.7" fill="rgb(41,41,41)"/><rect x="634.4" y="319.4" width="0.8" height="0.8" fill="rgb(19,19,19)"/><rect x="633.5" y="314.3" width="0.9" height="0.9" fill="rgb(28,28,28)"/><rect x="626.0" y="320.7" width="0.7" height="0.7" fill="rgb(0,0,0)"/><rect x="633.9" y="313.6" width="0.6" height="0.6" fill="rgb(4,4,4)"/><rect x="634.1" y="314.6" width="0.5" height="0.5" fill="rgb(26,26,26)"/><rect x="635.4" y="322.3" width="0.6" height="0.6" fill="rgb(100,100,100)"/><rect x="630.9" y="316.6" width="0.8" height="0.8" fill="rgb(43,43,43)"/><rect x="630.9" y="312.7" width="0.6" height="0.6" fill="rgb(9,9,9)"/><rect x="634.8" y="317.0" width="1.0" height="1.0" fill="rgb(76,76,76)"/><rect x="630.4" y="312.6" width="0.8" height="0.8" fill="rgb(49,49,49)"/><rect x="636.0" y="320.4" width="0.7" height="0.7" fill="rgb(56,56,56)"/><rect x="632.9" y="317.4" width="0.9" height="0.9" fill="rgb(4,4,4)"/><rect x="629.3" y="313.0" width="0.6" height="0.6" fill="rgb(60,60,60)"/><rect x="636.0" y="317.5" width="0.8" height="0.8" fill="rgb(27,27,27)"/><rect x="634.5" y="320.0" width="0.7" height="0.7" fill="rgb(22,22,22)"/><rect x="630.0" y="320.7" width="0.9" height="0.9" fill="rgb(73,73,73)"/><rect x="631.1" y="321.7" width="0.8" height="0.8" fill="rgb(48,48,48)"/><rect x="634.5" y="317.1" width="0.6" height="0.6" fill="rgb(97,97,97)"/><rect x="634.0" y="322.4" width="0.7" height="0.7" fill="rgb(89,89,89)"/><rect x="625.6" y="316.9" width="0.6" height="0.6" fill="rgb(73,73,73)"/><rect x="627.2" y="315.9" width="0.9" height="0.9" fill="rgb(91,91,91)"/><rect x="633.6" y="320.9" width="0.7" height="0.7" fill="rgb(22,22,22)"/><rect x="634.2" y="319.9" width="0.6" height="0.6" fill="rgb(77,77,77)"/><rect x="628.9" y="319.3" width="0.7" height="0.7" fill="rgb(51,51,51)"/><rect x="629.3" y="320.7" width="0.5" height="0.5" fill="rgb(1,1,1)"/><rect x="636.6" y="318.3" width="0.5" height="0.5" fill="rgb(78,78,78)"/><rect x="635.8" y="318.0" width="0.6" height="0.6" fill="rgb(53,53,53)"/><rect x="628.3" y="319.7" width="0.8" height="0.8" fill="rgb(0,0,0)"/><rect x="635.4" y="316.0" width="0.8" height="0.8" fill="rgb(102,102,102)"/><rect x="629.1" y="315.9" width="0.6" height="0.6" fill="rgb(15,15,15)"/><rect x="636.5" y="319.4" width="0.9" height="0.9" fill="rgb(32,32,32)"/><rect x="632.9" y="323.2" width="0.9" height="0.9" fill="rgb(101,101,101)"/><rect x="633.6" y="323.5" width="0.9" height="0.9" fill="rgb(81,81,81)"/><rect x="629.5" y="320.9" width="0.9" height="0.9" fill="rgb(35,35,35)"/><rect x="627.7" y="322.1" width="0.7" height="0.7" fill="rgb(91,91,91)"/><rect x="631.0" y="319.8" width="0.8" height="0.8" fill="rgb(69,69,69)"/><rect x="633.1" y="313.5" width="1.0" height="1.0" fill="rgb(103,103,103)"/><rect x="626.4" y="318.8" width="0.6" height="0.6" fill="rgb(32,32,32)"/><rect x="629.3" y="317.6" width="0.8" height="0.8" fill="rgb(18,18,18)"/><rect x="625.0" y="320.9" width="0.5" height="0.5" fill="rgb(4,4,4)"/><rect x="628.2" y="319.5" width="0.9" height="0.9" fill="rgb(0,0,0)"/><rect x="634.1" y="313.4" width="0.9" height="0.9" fill="rgb(46,46,46)"/><rect x="629.8" y="323.7" width="0.8" height="0.8" fill="rgb(46,46,46)"/><rect x="628.6" y="322.1" width="0.8" height="0.8" fill="rgb(90,90,90)"/><rect x="633.1" y="317.1" width="0.6" height="0.6" fill="rgb(48,48,48)"/><rect x="627.4" y="317.1" width="0.6" height="0.6" fill="rgb(9,9,9)"/><rect x="628.8" y="322.4" width="1.0" height="1.0" fill="rgb(99,99,99)"/><rect x="635.0" y="313.6" width="1.0" height="1.0" fill="rgb(68,68,68)"/><rect x="631.5" y="317.0" width="0.8" height="0.8" fill="rgb(67,67,67)"/><rect x="629.4" y="323.1" width="1.0" height="1.0" fill="rgb(52,52,52)"/><rect x="628.8" y="315.7" width="0.7" height="0.7" fill="rgb(97,97,97)"/><rect x="633.6" y="319.0" width="0.8" height="0.8" fill="rgb(49,49,49)"/><rect x="635.5" y="321.3" width="0.7" height="0.7" fill="rgb(63,63,63)"/><rect x="626.8" y="320.9" width="0.8" height="0.8" fill="rgb(43,43,43)"/><rect x="632.9" y="320.2" width="0.9" height="0.9" fill="rgb(60,60,60)"/><rect x="635.6" y="322.5" width="0.6" height="0.6" fill="rgb(10,10,10)"/><rect x="627.7" y="317.9" width="0.7" height="0.7" fill="rgb(60,60,60)"/><rect x="631.7" y="323.5" width="0.6" height="0.6" fill="rgb(56,56,56)"/><rect x="629.4" y="317.6" width="0.7" height="0.7" fill="rgb(8,8,8)"/><rect x="625.3" y="320.8" width="0.8" height="0.8" fill="rgb(78,78,78)"/><rect x="630.9" y="316.2" width="1.0" height="1.0" fill="rgb(79,79,79)"/><rect x="635.7" y="322.1" width="0.7" height="0.7" fill="rgb(18,18,18)"/><rect x="635.6" y="317.2" width="0.9" height="0.9" fill="rgb(15,15,15)"/><rect x="631.2" y="317.1" width="0.6" height="0.6" fill="rgb(40,40,40)"/><rect x="636.0" y="319.1" width="0.6" height="0.6" fill="rgb(32,32,32)"/><rect x="629.7" y="314.3" width="0.9" height="0.9" fill="rgb(68,68,68)"/><rect x="634.2" y="314.9" width="1.0" height="1.0" fill="rgb(95,95,95)"/><rect x="633.7" y="323.4" width="0.7" height="0.7" fill="rgb(83,83,83)"/><rect x="628.5" y="313.3" width="0.6" height="0.6" fill="rgb(41,41,41)"/><rect x="630.3" y="312.2" width="0.9" height="0.9" fill="rgb(4,4,4)"/><rect x="629.3" y="317.3" width="0.8" height="0.8" fill="rgb(88,88,88)"/><rect x="635.6" y="322.6" width="0.8" height="0.8" fill="rgb(28,28,28)"/><rect x="632.3" y="322.5" width="0.9" height="0.9" fill="rgb(63,63,63)"/><rect x="631.7" y="319.2" width="0.6" height="0.6" fill="rgb(88,88,88)"/><rect x="632.9" y="323.0" width="0.6" height="0.6" fill="rgb(75,75,75)"/><rect x="629.0" y="320.1" width="0.9" height="0.9" fill="rgb(59,59,59)"/><rect x="628.6" y="313.0" width="1.0" height="1.0" fill="rgb(1,1,1)"/><rect x="629.5" y="320.6" width="0.8" height="0.8" fill="rgb(96,96,96)"/>
<rect x="647.9" y="317.8" width="0.6" height="0.6" fill="rgb(98,98,98)"/><rect x="645.9" y="315.4" width="0.8" height="0.8" fill="rgb(18,18,18)"/><rect x="649.5" y="315.6" width="1.0" height="1.0" fill="rgb(73,73,73)"/><rect x="650.6" y="320.0" width="0.6" height="0.6" fill="rgb(107,107,107)"/><rect x="646.8" y="318.1" width="0.6" height="0.6" fill="rgb(43,43,43)"/><rect x="643.0" y="319.4" width="0.7" height="0.7" fill="rgb(42,42,42)"/><rect x="652.2" y="318.7" width="0.7" height="0.7" fill="rgb(2,2,2)"/><rect x="641.4" y="320.1" width="0.5" height="0.5" fill="rgb(17,17,17)"/><rect x="646.1" y="316.1" width="0.7" height="0.7" fill="rgb(60,60,60)"/><rect x="647.1" y="322.8" width="0.8" height="0.8" fill="rgb(114,114,114)"/><rect x="648.3" y="318.4" width="0.8" height="0.8" fill="rgb(92,92,92)"/><rect x="651.3" y="314.8" width="0.9" height="0.9" fill="rgb(76,76,76)"/><rect x="645.4" y="320.5" width="1.0" height="1.0" fill="rgb(104,104,104)"/><rect x="652.3" y="316.8" width="0.7" height="0.7" fill="rgb(91,91,91)"/><rect x="647.2" y="314.5" width="0.9" height="0.9" fill="rgb(42,42,42)"/><rect x="644.0" y="317.5" width="0.5" height="0.5" fill="rgb(40,40,40)"/><rect x="644.6" y="323.8" width="0.8" height="0.8" fill="rgb(44,44,44)"/><rect x="647.7" y="321.1" width="0.7" height="0.7" fill="rgb(16,16,16)"/><rect x="653.5" y="318.8" width="0.8" height="0.8" fill="rgb(53,53,53)"/><rect x="644.7" y="317.4" width="0.6" height="0.6" fill="rgb(7,7,7)"/><rect x="646.4" y="321.2" width="0.9" height="0.9" fill="rgb(66,66,66)"/><rect x="650.5" y="317.2" width="1.1" height="1.1" fill="rgb(70,70,70)"/><rect x="649.5" y="319.5" width="0.8" height="0.8" fill="rgb(118,118,118)"/><rect x="644.0" y="322.5" width="0.8" height="0.8" fill="rgb(104,104,104)"/><rect x="651.2" y="320.0" width="1.0" height="1.0" fill="rgb(33,33,33)"/><rect x="647.6" y="319.2" width="0.6" height="0.6" fill="rgb(32,32,32)"/><rect x="646.8" y="316.2" width="0.7" height="0.7" fill="rgb(24,24,24)"/><rect x="642.7" y="315.1" width="0.9" height="0.9" fill="rgb(23,23,23)"/><rect x="646.8" y="312.6" width="0.9" height="0.9" fill="rgb(9,9,9)"/><rect x="649.7" y="313.4" width="0.7" height="0.7" fill="rgb(16,16,16)"/><rect x="649.1" y="322.2" width="1.0" height="1.0" fill="rgb(76,76,76)"/><rect x="649.8" y="317.4" width="0.7" height="0.7" fill="rgb(89,89,89)"/><rect x="645.2" y="315.6" width="0.9" height="0.9" fill="rgb(40,40,40)"/><rect x="651.2" y="319.9" width="0.5" height="0.5" fill="rgb(75,75,75)"/><rect x="645.3" y="321.9" width="0.9" height="0.9" fill="rgb(30,30,30)"/><rect x="646.9" y="318.5" width="1.1" height="1.1" fill="rgb(67,67,67)"/><rect x="648.6" y="318.4" width="0.9" height="0.9" fill="rgb(86,86,86)"/><rect x="646.9" y="319.9" width="0.6" height="0.6" fill="rgb(17,17,17)"/><rect x="647.6" y="317.0" width="1.0" height="1.0" fill="rgb(50,50,50)"/><rect x="642.9" y="317.4" width="0.8" height="0.8" fill="rgb(78,78,78)"/><rect x="644.7" y="316.6" width="0.9" height="0.9" fill="rgb(30,30,30)"/><rect x="646.1" y="313.5" width="1.0" height="1.0" fill="rgb(37,37,37)"/><rect x="648.4" y="312.7" width="0.8" height="0.8" fill="rgb(33,33,33)"/><rect x="641.4" y="317.8" width="0.6" height="0.6" fill="rgb(1,1,1)"/><rect x="642.4" y="319.1" width="1.0" height="1.0" fill="rgb(43,43,43)"/><rect x="650.1" y="318.3" width="1.0" height="1.0" fill="rgb(10,10,10)"/><rect x="649.5" y="318.9" width="0.5" height="0.5" fill="rgb(60,60,60)"/><rect x="645.2" y="317.6" width="1.1" height="1.1" fill="rgb(43,43,43)"/><rect x="648.8" y="320.1" width="0.9" height="0.9" fill="rgb(110,110,110)"/><rect x="647.8" y="319.0" width="1.0" height="1.0" fill="rgb(29,29,29)"/><rect x="651.7" y="318.0" width="0.9" height="0.9" fill="rgb(41,41,41)"/><rect x="648.8" y="315.0" width="0.7" height="0.7" fill="rgb(108,108,108)"/><rect x="651.8" y="321.8" width="0.5" height="0.5" fill="rgb(77,77,77)"/><rect x="642.8" y="321.8" width="0.5" height="0.5" fill="rgb(67,67,67)"/><rect x="642.2" y="321.4" width="1.1" height="1.1" fill="rgb(75,75,75)"/><rect x="648.0" y="321.2" width="0.7" height="0.7" fill="rgb(52,52,52)"/><rect x="647.7" y="320.7" width="1.0" height="1.0" fill="rgb(77,77,77)"/><rect x="645.6" y="324.3" width="0.6" height="0.6" fill="rgb(68,68,68)"/><rect x="650.7" y="323.0" width="1.0" height="1.0" fill="rgb(32,32,32)"/><rect x="647.6" y="313.2" width="0.7" height="0.7" fill="rgb(39,39,39)"/><rect x="641.6" y="319.1" width="0.6" height="0.6" fill="rgb(81,81,81)"/><rect x="644.2" y="316.3" width="0.8" height="0.8" fill="rgb(105,105,105)"/><rect x="649.0" y="323.9" width="0.7" height="0.7" fill="rgb(93,93,93)"/><rect x="648.9" y="316.8" width="1.0" height="1.0" fill="rgb(119,119,119)"/><rect x="647.4" y="319.2" width="0.6" height="0.6" fill="rgb(116,116,116)"/><rect x="653.7" y="318.9" width="0.6" height="0.6" fill="rgb(88,88,88)"/><rect x="649.3" y="319.6" width="0.9" height="0.9" fill="rgb(10,10,10)"/><rect x="644.1" y="323.3" width="0.9" height="0.9" fill="rgb(105,105,105)"/><rect x="648.4" y="318.5" width="0.6" height="0.6" fill="rgb(95,95,95)"/><rect x="647.2" y="317.7" width="0.8" height="0.8" fill="rgb(27,27,27)"/><rect x="646.1" y="319.3" width="0.5" height="0.5" fill="rgb(118,118,118)"/><rect x="645.2" y="323.7" width="0.6" height="0.6" fill="rgb(58,58,58)"/><rect x="650.2" y="321.3" width="0.6" height="0.6" fill="rgb(82,82,82)"/><rect x="650.7" y="322.5" width="0.8" height="0.8" fill="rgb(13,13,13)"/><rect x="644.8" y="321.5" width="1.1" height="1.1" fill="rgb(41,41,41)"/><rect x="648.8" y="324.1" width="1.0" height="1.0" fill="rgb(87,87,87)"/><rect x="647.2" y="320.7" width="0.7" height="0.7" fill="rgb(8,8,8)"/><rect x="651.7" y="319.6" width="0.7" height="0.7" fill="rgb(66,66,66)"/><rect x="647.2" y="318.7" width="0.9" height="0.9" fill="rgb(78,78,78)"/><rect x="643.1" y="317.3" width="0.9" height="0.9" fill="rgb(117,117,117)"/><rect x="651.3" y="315.0" width="0.7" height="0.7" fill="rgb(38,38,38)"/><rect x="641.9" y="321.4" width="0.7" height="0.7" fill="rgb(46,46,46)"/><rect x="645.6" y="319.4" width="1.1" height="1.1" fill="rgb(0,0,0)"/><rect x="642.7" y="315.0" width="0.7" height="0.7" fill="rgb(73,73,73)"/><rect x="645.6" y="320.4" width="0.6" height="0.6" fill="rgb(13,13,13)"/><rect x="650.5" y="314.1" width="1.0" height="1.0" fill="rgb(5,5,5)"/><rect x="646.3" y="315.6" width="0.9" height="0.9" fill="rgb(65,65,65)"/><rect x="645.1" y="324.1" width="0.5" height="0.5" fill="rgb(89,89,89)"/><rect x="650.1" y="315.3" width="0.9" height="0.9" fill="rgb(119,119,119)"/><rect x="647.9" y="323.0" width="0.9" height="0.9" fill="rgb(45,45,45)"/><rect x="646.6" y="315.2" width="0.8" height="0.8" fill="rgb(73,73,73)"/><rect x="646.0" y="315.7" width="0.9" height="0.9" fill="rgb(65,65,65)"/><rect x="648.4" y="323.0" width="0.7" height="0.7" fill="rgb(109,109,109)"/><rect x="642.2" y="319.3" width="0.8" height="0.8" fill="rgb(57,57,57)"/><rect x="647.7" y="320.2" width="1.1" height="1.1" fill="rgb(63,63,63)"/><rect x="643.0" y="317.8" width="1.0" height="1.0" fill="rgb(28,28,28)"/><rect x="650.2" y="323.2" width="0.8" height="0.8" fill="rgb(76,76,76)"/><rect x="650.2" y="313.4" width="1.0" height="1.0" fill="rgb(5,5,5)"/><rect x="643.1" y="322.1" width="1.0" height="1.0" fill="rgb(14,14,14)"/><rect x="649.2" y="320.8" width="0.6" height="0.6" fill="rgb(42,42,42)"/><rect x="649.0" y="314.7" width="0.8" height="0.8" fill="rgb(10,10,10)"/><rect x="642.3" y="322.1" width="0.9" height="0.9" fill="rgb(53,53,53)"/><rect x="641.8" y="319.1" width="1.0" height="1.0" fill="rgb(17,17,17)"/><rect x="646.0" y="315.5" width="0.8" height="0.8" fill="rgb(28,28,28)"/><rect x="645.2" y="320.8" width="0.7" height="0.7" fill="rgb(2,2,2)"/><rect x="649.0" y="322.7" width="0.5" height="0.5" fill="rgb(21,21,21)"/><rect x="647.0" y="315.8" width="0.7" height="0.7" fill="rgb(29,29,29)"/><rect x="648.2" y="317.2" width="0.9" height="0.9" fill="rgb(103,103,103)"/><rect x="648.6" y="321.8" width="1.0" height="1.0" fill="rgb(74,74,74)"/><rect x="646.8" y="319.2" width="0.8" height="0.8" fill="rgb(44,44,44)"/><rect x="646.8" y="315.7" width="0.7" height="0.7" fill="rgb(77,77,77)"/><rect x="648.8" y="315.6" width="0.7" height="0.7" fill="rgb(69,69,69)"/><rect x="649.5" y="317.3" width="1.1" height="1.1" fill="rgb(85,85,85)"/><rect x="644.0" y="321.9" width="0.7" height="0.7" fill="rgb(8,8,8)"/><rect x="647.6" y="315.1" width="0.8" height="0.8" fill="rgb(59,59,59)"/><rect x="652.1" y="315.7" width="0.5" height="0.5" fill="rgb(71,71,71)"/><rect x="643.4" y="319.3" width="1.0" height="1.0" fill="rgb(49,49,49)"/><rect x="641.5" y="319.4" width="0.8" height="0.8" fill="rgb(58,58,58)"/><rect x="641.7" y="318.1" width="0.9" height="0.9" fill="rgb(88,88,88)"/><rect x="646.7" y="319.0" width="0.9" height="0.9" fill="rgb(66,66,66)"/><rect x="648.3" y="313.5" width="0.6" height="0.6" fill="rgb(26,26,26)"/><rect x="652.7" y="321.1" width="0.6" height="0.6" fill="rgb(10,10,10)"/><rect x="647.7" y="314.4" width="0.5" height="0.5" fill="rgb(81,81,81)"/><rect x="646.6" y="314.9" width="0.5" height="0.5" fill="rgb(82,82,82)"/><rect x="643.3" y="320.5" width="1.1" height="1.1" fill="rgb(98,98,98)"/><rect x="649.0" y="317.2" width="0.7" height="0.7" fill="rgb(62,62,62)"/><rect x="654.0" y="318.8" width="0.7" height="0.7" fill="rgb(31,31,31)"/><rect x="646.3" y="320.8" width="1.0" height="1.0" fill="rgb(66,66,66)"/><rect x="643.8" y="318.4" width="0.5" height="0.5" fill="rgb(36,36,36)"/><rect x="651.2" y="314.5" width="1.0" height="1.0" fill="rgb(30,30,30)"/><rect x="647.8" y="319.5" width="0.8" height="0.8" fill="rgb(44,44,44)"/><rect x="643.3" y="319.3" width="0.9" height="0.9" fill="rgb(43,43,43)"/><rect x="648.2" y="316.2" width="1.1" height="1.1" fill="rgb(66,66,66)"/><rect x="650.6" y="319.4" width="0.8" height="0.8" fill="rgb(49,49,49)"/><rect x="644.5" y="317.4" width="0.7" height="0.7" fill="rgb(95,95,95)"/><rect x="646.0" y="323.1" width="1.0" height="1.0" fill="rgb(71,71,71)"/><rect x="641.5" y="320.1" width="0.8" height="0.8" fill="rgb(105,105,105)"/><rect x="651.1" y="319.7" width="0.9" height="0.9" fill="rgb(5,5,5)"/><rect x="648.3" y="317.5" width="0.9" height="0.9" fill="rgb(21,21,21)"/><rect x="651.5" y="316.4" width="1.0" height="1.0" fill="rgb(59,59,59)"/>
<rect x="661.7" y="313.8" width="0.6" height="0.6" fill="rgb(23,23,23)"/><rect x="665.3" y="316.3" width="1.0" height="1.0" fill="rgb(22,22,22)"/><rect x="665.7" y="319.6" width="0.9" height="0.9" fill="rgb(104,104,104)"/><rect x="659.7" y="321.3" width="0.6" height="0.6" fill="rgb(99,99,99)"/><rect x="663.3" y="316.3" width="0.5" height="0.5" fill="rgb(76,76,76)"/><rect x="669.9" y="320.1" width="0.6" height="0.6" fill="rgb(25,25,25)"/><rect x="660.9" y="316.7" width="0.8" height="0.8" fill="rgb(16,16,16)"/><rect x="667.2" y="316.5" width="0.9" height="0.9" fill="rgb(16,16,16)"/><rect x="666.1" y="312.4" width="0.7" height="0.7" fill="rgb(3,3,3)"/><rect x="660.4" y="322.2" width="0.6" height="0.6" fill="rgb(60,60,60)"/><rect x="667.8" y="320.9" width="0.9" height="0.9" fill="rgb(47,47,47)"/><rect x="663.1" y="316.5" width="0.9" height="0.9" fill="rgb(13,13,13)"/><rect x="669.8" y="315.4" width="1.0" height="1.0" fill="rgb(57,57,57)"/><rect x="663.1" y="322.2" width="0.9" height="0.9" fill="rgb(54,54,54)"/><rect x="665.9" y="317.7" width="0.7" height="0.7" fill="rgb(95,95,95)"/><rect x="660.3" y="315.9" width="0.5" height="0.5" fill="rgb(15,15,15)"/><rect x="663.2" y="324.5" width="0.9" height="0.9" fill="rgb(24,24,24)"/><rect x="665.2" y="318.0" width="0.8" height="0.8" fill="rgb(106,106,106)"/><rect x="660.6" y="323.7" width="0.8" height="0.8" fill="rgb(5,5,5)"/><rect x="662.0" y="322.4" width="0.6" height="0.6" fill="rgb(81,81,81)"/><rect x="666.7" y="323.8" width="0.6" height="0.6" fill="rgb(7,7,7)"/><rect x="662.3" y="317.8" width="0.8" height="0.8" fill="rgb(86,86,86)"/><rect x="660.6" y="316.1" width="0.5" height="0.5" fill="rgb(56,56,56)"/><rect x="668.5" y="321.6" width="0.6" height="0.6" fill="rgb(63,63,63)"/><rect x="661.7" y="321.7" width="0.8" height="0.8" fill="rgb(18,18,18)"/><rect x="667.2" y="324.1" width="0.7" height="0.7" fill="rgb(92,92,92)"/><rect x="667.4" y="315.4" width="0.6" height="0.6" fill="rgb(10,10,10)"/><rect x="665.8" y="317.0" width="0.7" height="0.7" fill="rgb(58,58,58)"/><rect x="667.5" y="321.6" width="0.6" height="0.6" fill="rgb(58,58,58)"/><rect x="660.3" y="318.4" width="0.6" height="0.6" fill="rgb(44,44,44)"/><rect x="664.9" y="320.8" width="0.6" height="0.6" fill="rgb(95,95,95)"/><rect x="658.1" y="318.6" width="0.5" height="0.5" fill="rgb(103,103,103)"/><rect x="658.4" y="318.9" width="0.8" height="0.8" fill="rgb(75,75,75)"/><rect x="665.0" y="324.2" width="0.6" height="0.6" fill="rgb(29,29,29)"/><rect x="668.1" y="319.3" width="0.8" height="0.8" fill="rgb(32,32,32)"/><rect x="665.6" y="317.3" width="0.8" height="0.8" fill="rgb(25,25,25)"/><rect x="659.3" y="315.2" width="0.9" height="0.9" fill="rgb(6,6,6)"/><rect x="664.2" y="323.4" width="1.0" height="1.0" fill="rgb(4,4,4)"/><rect x="660.1" y="314.8" width="0.9" height="0.9" fill="rgb(37,37,37)"/><rect x="665.7" y="314.3" width="1.0" height="1.0" fill="rgb(1,1,1)"/><rect x="668.0" y="317.0" width="0.7" height="0.7" fill="rgb(9,9,9)"/><rect x="664.3" y="324.0" width="0.8" height="0.8" fill="rgb(16,16,16)"/><rect x="662.9" y="320.6" width="0.6" height="0.6" fill="rgb(24,24,24)"/><rect x="660.9" y="324.0" width="1.0" height="1.0" fill="rgb(87,87,87)"/><rect x="659.5" y="319.0" width="0.9" height="0.9" fill="rgb(99,99,99)"/><rect x="664.3" y="313.4" width="0.6" height="0.6" fill="rgb(68,68,68)"/><rect x="667.5" y="313.9" width="0.5" height="0.5" fill="rgb(78,78,78)"/><rect x="662.5" y="320.5" width="1.0" height="1.0" fill="rgb(73,73,73)"/><rect x="664.0" y="316.1" width="0.9" height="0.9" fill="rgb(103,103,103)"/><rect x="668.7" y="315.3" width="0.9" height="0.9" fill="rgb(88,88,88)"/><rect x="660.4" y="316.1" width="0.9" height="0.9" fill="rgb(86,86,86)"/><rect x="666.5" y="315.8" width="1.0" height="1.0" fill="rgb(58,58,58)"/><rect x="666.1" y="317.7" width="1.0" height="1.0" fill="rgb(86,86,86)"/><rect x="664.1" y="324.5" width="0.6" height="0.6" fill="rgb(21,21,21)"/><rect x="661.1" y="319.4" width="0.7" height="0.7" fill="rgb(99,99,99)"/><rect x="662.0" y="313.5" width="0.7" height="0.7" fill="rgb(86,86,86)"/><rect x="665.5" y="313.2" width="1.0" height="1.0" fill="rgb(90,90,90)"/><rect x="662.5" y="319.6" width="0.8" height="0.8" fill="rgb(91,91,91)"/><rect x="661.4" y="322.7" width="0.9" height="0.9" fill="rgb(87,87,87)"/><rect x="668.8" y="318.8" width="0.5" height="0.5" fill="rgb(12,12,12)"/><rect x="665.7" y="314.6" width="0.8" height="0.8" fill="rgb(50,50,50)"/><rect x="662.6" y="321.1" width="0.7" height="0.7" fill="rgb(92,92,92)"/><rect x="661.7" y="316.2" width="0.5" height="0.5" fill="rgb(29,29,29)"/><rect x="662.8" y="314.4" width="0.8" height="0.8" fill="rgb(88,88,88)"/><rect x="668.2" y="322.3" width="0.5" height="0.5" fill="rgb(90,90,90)"/><rect x="665.4" y="321.5" width="1.0" height="1.0" fill="rgb(39,39,39)"/><rect x="665.1" y="324.5" width="0.8" height="0.8" fill="rgb(98,98,98)"/><rect x="660.4" y="321.2" width="1.0" height="1.0" fill="rgb(55,55,55)"/><rect x="666.9" y="318.2" width="0.9" height="0.9" fill="rgb(17,17,17)"/><rect x="664.1" y="318.6" width="0.6" height="0.6" fill="rgb(103,103,103)"/><rect x="658.6" y="320.2" width="0.6" height="0.6" fill="rgb(38,38,38)"/><rect x="667.9" y="321.3" width="0.9" height="0.9" fill="rgb(56,56,56)"/><rect x="659.6" y="322.8" width="0.9" height="0.9" fill="rgb(73,73,73)"/><rect x="668.7" y="320.9" width="0.7" height="0.7" fill="rgb(105,105,105)"/><rect x="660.7" y="322.5" width="0.8" height="0.8" fill="rgb(41,41,41)"/><rect x="658.7" y="317.7" width="1.0" height="1.0" fill="rgb(54,54,54)"/><rect x="660.0" y="323.5" width="0.5" height="0.5" fill="rgb(91,91,91)"/><rect x="662.2" y="314.1" width="0.7" height="0.7" fill="rgb(82,82,82)"/><rect x="668.4" y="315.0" width="0.9" height="0.9" fill="rgb(3,3,3)"/><rect x="662.9" y="320.6" width="1.0" height="1.0" fill="rgb(98,98,98)"/><rect x="667.2" y="322.4" width="0.8" height="0.8" fill="rgb(5,5,5)"/><rect x="659.7" y="322.0" width="0.8" height="0.8" fill="rgb(30,30,30)"/><rect x="664.4" y="315.0" width="0.8" height="0.8" fill="rgb(46,46,46)"/><rect x="669.3" y="317.7" width="0.9" height="0.9" fill="rgb(74,74,74)"/><rect x="659.4" y="322.8" width="0.9" height="0.9" fill="rgb(75,75,75)"/><rect x="663.7" y="321.1" width="0.8" height="0.8" fill="rgb(90,90,90)"/><rect x="665.3" y="314.9" width="0.6" height="0.6" fill="rgb(56,56,56)"/><rect x="666.0" y="316.6" width="0.9" height="0.9" fill="rgb(18,18,18)"/><rect x="663.6" y="320.0" width="0.6" height="0.6" fill="rgb(42,42,42)"/><rect x="670.5" y="317.3" width="0.6" height="0.6" fill="rgb(34,34,34)"/><rect x="666.9" y="317.6" width="0.7" height="0.7" fill="rgb(48,48,48)"/><rect x="666.7" y="320.6" width="0.7" height="0.7" fill="rgb(42,42,42)"/><rect x="667.5" y="317.8" width="0.6" height="0.6" fill="rgb(99,99,99)"/><rect x="658.5" y="320.3" width="0.8" height="0.8" fill="rgb(85,85,85)"/><rect x="663.1" y="320.8" width="0.9" height="0.9" fill="rgb(51,51,51)"/><rect x="659.1" y="316.5" width="0.9" height="0.9" fill="rgb(30,30,30)"/><rect x="660.1" y="323.2" width="0.8" height="0.8" fill="rgb(31,31,31)"/><rect x="661.8" y="316.0" width="0.9" height="0.9" fill="rgb(4,4,4)"/><rect x="666.4" y="314.2" width="0.7" height="0.7" fill="rgb(103,103,103)"/><rect x="663.9" y="321.8" width="0.5" height="0.5" fill="rgb(60,60,60)"/><rect x="664.3" y="313.2" width="0.7" height="0.7" fill="rgb(88,88,88)"/><rect x="666.9" y="320.8" width="0.8" height="0.8" fill="rgb(106,106,106)"/><rect x="660.5" y="314.4" width="0.9" height="0.9" fill="rgb(43,43,43)"/><rect x="669.4" y="316.5" width="0.7" height="0.7" fill="rgb(43,43,43)"/><rect x="665.5" y="315.0" width="0.6" height="0.6" fill="rgb(95,95,95)"/><rect x="659.5" y="317.6" width="0.8" height="0.8" fill="rgb(99,99,99)"/><rect x="666.8" y="321.4" width="0.5" height="0.5" fill="rgb(45,45,45)"/><rect x="658.1" y="318.4" width="0.8" height="0.8" fill="rgb(63,63,63)"/><rect x="660.2" y="321.4" width="0.6" height="0.6" fill="rgb(92,92,92)"/><rect x="665.7" y="312.8" width="0.6" height="0.6" fill="rgb(73,73,73)"/><rect x="664.2" y="313.8" width="0.9" height="0.9" fill="rgb(98,98,98)"/><rect x="663.8" y="312.6" width="0.8" height="0.8" fill="rgb(96,96,96)"/><rect x="667.8" y="322.5" width="0.9" height="0.9" fill="rgb(67,67,67)"/><rect x="663.9" y="320.2" width="0.8" height="0.8" fill="rgb(90,90,90)"/><rect x="663.8" y="321.6" width="0.6" height="0.6" fill="rgb(10,10,10)"/><rect x="661.2" y="312.7" width="0.9" height="0.9" fill="rgb(39,39,39)"/><rect x="663.5" y="316.8" width="0.9" height="0.9" fill="rgb(35,35,35)"/><rect x="669.4" y="318.7" width="0.6" height="0.6" fill="rgb(30,30,30)"/><rect x="668.2" y="320.1" width="0.8" height="0.8" fill="rgb(88,88,88)"/><rect x="670.0" y="320.1" width="0.6" height="0.6" fill="rgb(24,24,24)"/><rect x="661.6" y="315.8" width="0.7" height="0.7" fill="rgb(62,62,62)"/><rect x="665.4" y="324.3" width="0.6" height="0.6" fill="rgb(92,92,92)"/><rect x="666.0" y="314.2" width="0.5" height="0.5" fill="rgb(85,85,85)"/><rect x="668.7" y="319.4" width="0.7" height="0.7" fill="rgb(6,6,6)"/><rect x="660.3" y="314.5" width="0.8" height="0.8" fill="rgb(44,44,44)"/><rect x="659.2" y="318.2" width="0.6" height="0.6" fill="rgb(95,95,95)"/><rect x="669.9" y="318.3" width="1.0" height="1.0" fill="rgb(36,36,36)"/><rect x="665.9" y="318.4" width="0.7" height="0.7" fill="rgb(14,14,14)"/><rect x="658.9" y="320.0" width="0.9" height="0.9" fill="rgb(50,50,50)"/><rect x="662.6" y="320.9" width="0.7" height="0.7" fill="rgb(31,31,31)"/><rect x="666.1" y="323.8" width="0.8" height="0.8" fill="rgb(48,48,48)"/><rect x="666.0" y="323.8" width="0.6" height="0.6" fill="rgb(29,29,29)"/><rect x="659.0" y="316.4" width="1.0" height="1.0" fill="rgb(82,82,82)"/><rect x="670.0" y="316.5" width="0.9" height="0.9" fill="rgb(79,79,79)"/><rect x="667.0" y="319.8" width="0.5" height="0.5" fill="rgb(94,94,94)"/><rect x="663.3" y="313.5" width="0.6" height="0.6" fill="rgb(39,39,39)"/><rect x="666.7" y="322.8" width="1.0" height="1.0" fill="rgb(33,33,33)"/><rect x="666.8" y="319.3" width="0.7" height="0.7" fill="rgb(98,98,98)"/><rect x="665.7" y="314.5" width="0.6" height="0.6" fill="rgb(11,11,11)"/><rect x="667.4" y="323.2" width="0.7" height="0.7" fill="rgb(108,108,108)"/><rect x="669.1" y="315.5" width="0.7" height="0.7" fill="rgb(90,90,90)"/><rect x="665.6" y="320.1" width="0.8" height="0.8" fill="rgb(55,55,55)"/><rect x="665.1" y="321.8" width="0.5" height="0.5" fill="rgb(99,99,99)"/><rect x="662.5" y="312.3" width="1.0" height="1.0" fill="rgb(48,48,48)"/><rect x="663.6" y="314.4" width="0.9" height="0.9" fill="rgb(92,92,92)"/><rect x="664.7" y="319.1" width="0.6" height="0.6" fill="rgb(64,64,64)"/><rect x="663.6" y="318.9" width="0.9" height="0.9" fill="rgb(86,86,86)"/><rect x="662.7" y="318.7" width="0.9" height="0.9" fill="rgb(58,58,58)"/><rect x="667.4" y="320.1" width="0.8" height="0.8" fill="rgb(97,97,97)"/><rect x="659.0" y="319.1" width="0.6" height="0.6" fill="rgb(26,26,26)"/><rect x="667.6" y="316.4" width="0.6" height="0.6" fill="rgb(65,65,65)"/><rect x="666.2" y="320.6" width="0.7" height="0.7" fill="rgb(64,64,64)"/><rect x="660.6" y="314.4" width="0.7" height="0.7" fill="rgb(7,7,7)"/><rect x="663.9" y="317.0" width="0.7" height="0.7" fill="rgb(44,44,44)"/><rect x="661.7" y="313.7" width="0.6" height="0.6" fill="rgb(71,71,71)"/><rect x="662.6" y="314.4" width="0.6" height="0.6" fill="rgb(99,99,99)"/><rect x="662.9" y="317.6" width="0.6" height="0.6" fill="rgb(108,108,108)"/><rect x="664.6" y="322.5" width="0.9" height="0.9" fill="rgb(90,90,90)"/><rect x="660.5" y="314.5" width="0.5" height="0.5" fill="rgb(10,10,10)"/><rect x="670.0" y="317.8" width="0.5" height="0.5" fill="rgb(5,5,5)"/><rect x="664.6" y="324.9" width="0.6" height="0.6" fill="rgb(73,73,73)"/><rect x="668.7" y="316.2" width="1.0" height="1.0" fill="rgb(28,28,28)"/><rect x="664.6" y="319.2" width="0.9" height="0.9" fill="rgb(11,11,11)"/><rect x="669.6" y="317.7" width="0.6" height="0.6" fill="rgb(88,88,88)"/><rect x="666.7" y="322.6" width="0.6" height="0.6" fill="rgb(86,86,86)"/><rect x="669.1" y="314.7" width="0.5" height="0.5" fill="rgb(93,93,93)"/><rect x="658.6" y="316.5" width="0.8" height="0.8" fill="rgb(68,68,68)"/><rect x="659.4" y="315.4" width="0.5" height="0.5" fill="rgb(5,5,5)"/><rect x="660.8" y="317.6" width="0.7" height="0.7" fill="rgb(0,0,0)"/><rect x="664.0" y="317.4" width="0.9" height="0.9" fill="rgb(89,89,89)"/>
<circle cx="681.14" cy="318.9" r="6.6" fill="#111"/><rect x="679.2" y="318.6" width="1.3" height="1.3" fill="rgb(211,211,211)"/><rect x="679.2" y="318.7" width="1.5" height="1.5" fill="rgb(230,230,230)"/><rect x="679.8" y="319.2" width="1.3" height="1.3" fill="rgb(246,246,246)"/><rect x="681.3" y="317.4" width="1.1" height="1.1" fill="rgb(216,216,216)"/><rect x="680.7" y="316.7" width="1.2" height="1.2" fill="rgb(253,253,253)"/><rect x="680.7" y="318.3" width="0.9" height="0.9" fill="rgb(206,206,206)"/><rect x="679.1" y="314.4" width="1.2" height="1.2" fill="rgb(225,225,225)"/><rect x="677.0" y="320.6" width="1.3" height="1.3" fill="rgb(250,250,250)"/><rect x="679.9" y="313.1" width="1.4" height="1.4" fill="rgb(246,246,246)"/><rect x="680.4" y="317.8" width="1.3" height="1.3" fill="rgb(246,246,246)"/><rect x="675.7" y="320.7" width="0.9" height="0.9" fill="rgb(251,251,251)"/><rect x="676.3" y="320.1" width="1.0" height="1.0" fill="rgb(216,216,216)"/><rect x="679.1" y="320.7" width="0.9" height="0.9" fill="rgb(224,224,224)"/><rect x="684.8" y="317.6" width="1.5" height="1.5" fill="rgb(241,241,241)"/><rect x="683.6" y="313.1" width="1.3" height="1.3" fill="rgb(215,215,215)"/><rect x="680.7" y="321.7" width="0.8" height="0.8" fill="rgb(212,212,212)"/><rect x="684.9" y="314.7" width="1.0" height="1.0" fill="rgb(242,242,242)"/><rect x="681.3" y="312.8" width="1.4" height="1.4" fill="rgb(229,229,229)"/><rect x="684.8" y="321.6" width="1.0" height="1.0" fill="rgb(234,234,234)"/><rect x="677.8" y="321.0" width="1.5" height="1.5" fill="rgb(208,208,208)"/><rect x="676.2" y="317.5" width="1.2" height="1.2" fill="rgb(251,251,251)"/><rect x="675.8" y="321.4" width="1.3" height="1.3" fill="rgb(253,253,253)"/><rect x="682.4" y="319.5" width="1.0" height="1.0" fill="rgb(249,249,249)"/><rect x="682.8" y="318.4" width="1.3" height="1.3" fill="rgb(254,254,254)"/><rect x="682.0" y="321.3" width="1.3" height="1.3" fill="rgb(237,237,237)"/><rect x="680.5" y="313.5" width="1.0" height="1.0" fill="rgb(214,214,214)"/><rect x="685.2" y="319.2" width="0.9" height="0.9" fill="rgb(214,214,214)"/><rect x="684.8" y="317.3" width="1.2" height="1.2" fill="rgb(236,236,236)"/><rect x="676.8" y="315.7" width="1.0" height="1.0" fill="rgb(203,203,203)"/><rect x="680.9" y="318.5" width="1.1" height="1.1" fill="rgb(207,207,207)"/><rect x="683.2" y="320.5" width="1.5" height="1.5" fill="rgb(237,237,237)"/><rect x="679.9" y="323.4" width="0.9" height="0.9" fill="rgb(205,205,205)"/><rect x="679.4" y="321.3" width="1.3" height="1.3" fill="rgb(224,224,224)"/><rect x="680.3" y="317.0" width="1.5" height="1.5" fill="rgb(218,218,218)"/><rect x="680.7" y="317.8" width="1.4" height="1.4" fill="rgb(212,212,212)"/><rect x="683.7" y="314.2" width="1.3" height="1.3" fill="rgb(215,215,215)"/><rect x="682.3" y="318.3" width="1.4" height="1.4" fill="rgb(208,208,208)"/><rect x="678.3" y="314.8" width="1.3" height="1.3" fill="rgb(209,209,209)"/><rect x="681.1" y="319.1" width="1.5" height="1.5" fill="rgb(221,221,221)"/><rect x="678.3" y="315.1" width="1.0" height="1.0" fill="rgb(203,203,203)"/><rect x="686.0" y="319.0" width="0.9" height="0.9" fill="rgb(252,252,252)"/><rect x="677.6" y="322.1" width="0.9" height="0.9" fill="rgb(243,243,243)"/><rect x="680.5" y="321.3" width="1.2" height="1.2" fill="rgb(206,206,206)"/><rect x="680.7" y="323.5" width="1.0" height="1.0" fill="rgb(220,220,220)"/><rect x="680.9" y="316.3" width="0.9" height="0.9" fill="rgb(212,212,212)"/><rect x="678.3" y="320.2" width="1.2" height="1.2" fill="rgb(225,225,225)"/><rect x="681.0" y="317.7" width="1.3" height="1.3" fill="rgb(246,246,246)"/><rect x="680.6" y="318.9" width="1.1" height="1.1" fill="rgb(206,206,206)"/><rect x="676.1" y="319.6" width="0.9" height="0.9" fill="rgb(206,206,206)"/><rect x="678.9" y="318.6" width="1.0" height="1.0" fill="rgb(224,224,224)"/><rect x="681.3" y="319.0" width="1.1" height="1.1" fill="rgb(225,225,225)"/><rect x="684.4" y="316.9" width="0.9" height="0.9" fill="rgb(212,212,212)"/><rect x="680.3" y="314.2" width="1.4" height="1.4" fill="rgb(252,252,252)"/><rect x="681.2" y="317.2" width="1.5" height="1.5" fill="rgb(228,228,228)"/><rect x="680.5" y="319.9" width="1.4" height="1.4" fill="rgb(211,211,211)"/><rect x="682.5" y="319.4" width="1.4" height="1.4" fill="rgb(225,225,225)"/><rect x="680.5" y="317.4" width="1.1" height="1.1" fill="rgb(217,217,217)"/><rect x="681.9" y="322.7" width="1.1" height="1.1" fill="rgb(206,206,206)"/><rect x="684.3" y="318.1" width="0.9" height="0.9" fill="rgb(200,200,200)"/><rect x="678.6" y="315.4" width="0.8" height="0.8" fill="rgb(225,225,225)"/>
<ellipse cx="564.8" cy="335.3" rx="6.5" ry="3.6" fill="#333"/><rect x="564.2" y="332.7" width="0.7" height="0.7" fill="rgb(217,217,217)"/><rect x="560.8" y="333.4" width="0.7" height="0.7" fill="rgb(240,240,240)"/><rect x="569.1" y="333.8" width="1.1" height="1.1" fill="rgb(207,207,207)"/><rect x="565.8" y="334.4" width="0.7" height="0.7" fill="rgb(224,224,224)"/><rect x="565.2" y="334.7" width="0.7" height="0.7" fill="rgb(182,182,182)"/><rect x="563.2" y="335.2" width="0.7" height="0.7" fill="rgb(236,236,236)"/><rect x="559.0" y="333.2" width="0.8" height="0.8" fill="rgb(230,230,230)"/><rect x="570.6" y="335.2" width="0.7" height="0.7" fill="rgb(215,215,215)"/><rect x="558.1" y="334.6" width="0.9" height="0.9" fill="rgb(254,254,254)"/><rect x="562.9" y="334.0" width="1.1" height="1.1" fill="rgb(195,195,195)"/><rect x="567.9" y="334.9" width="0.7" height="0.7" fill="rgb(252,252,252)"/><rect x="563.0" y="336.5" width="0.8" height="0.8" fill="rgb(230,230,230)"/><rect x="567.4" y="335.2" width="0.7" height="0.7" fill="rgb(242,242,242)"/><rect x="568.8" y="334.9" width="0.8" height="0.8" fill="rgb(214,214,214)"/><rect x="559.9" y="333.9" width="0.7" height="0.7" fill="rgb(198,198,198)"/><rect x="569.0" y="337.3" width="0.7" height="0.7" fill="rgb(190,190,190)"/><rect x="560.1" y="334.4" width="1.1" height="1.1" fill="rgb(184,184,184)"/><rect x="564.5" y="335.7" width="1.0" height="1.0" fill="rgb(213,213,213)"/><rect x="559.3" y="336.6" width="1.0" height="1.0" fill="rgb(244,244,244)"/><rect x="566.4" y="334.4" width="1.2" height="1.2" fill="rgb(210,210,210)"/><rect x="570.2" y="336.0" width="0.7" height="0.7" fill="rgb(181,181,181)"/><rect x="563.6" y="336.0" width="1.2" height="1.2" fill="rgb(245,245,245)"/><rect x="560.8" y="335.8" width="1.1" height="1.1" fill="rgb(240,240,240)"/><rect x="562.3" y="333.2" width="0.7" height="0.7" fill="rgb(198,198,198)"/><rect x="561.9" y="332.8" width="1.1" height="1.1" fill="rgb(247,247,247)"/><rect x="566.2" y="334.8" width="0.6" height="0.6" fill="rgb(247,247,247)"/><rect x="562.8" y="334.4" width="1.0" height="1.0" fill="rgb(199,199,199)"/><rect x="564.6" y="336.4" width="0.9" height="0.9" fill="rgb(230,230,230)"/><rect x="568.9" y="336.1" width="1.0" height="1.0" fill="rgb(215,215,215)"/><rect x="561.9" y="332.3" width="0.6" height="0.6" fill="rgb(215,215,215)"/><rect x="562.1" y="332.3" width="1.0" height="1.0" fill="rgb(193,193,193)"/><rect x="569.6" y="334.2" width="0.7" height="0.7" fill="rgb(212,212,212)"/><rect x="566.2" y="334.6" width="0.8" height="0.8" fill="rgb(252,252,252)"/><rect x="565.9" y="334.1" width="1.0" height="1.0" fill="rgb(206,206,206)"/><rect x="561.7" y="332.5" width="0.7" height="0.7" fill="rgb(196,196,196)"/><rect x="565.0" y="336.2" width="0.6" height="0.6" fill="rgb(190,190,190)"/><rect x="561.8" y="336.0" width="0.6" height="0.6" fill="rgb(223,223,223)"/><rect x="568.3" y="334.1" width="0.8" height="0.8" fill="rgb(232,232,232)"/><rect x="562.9" y="335.2" width="0.9" height="0.9" fill="rgb(181,181,181)"/><rect x="563.7" y="334.1" width="0.8" height="0.8" fill="rgb(252,252,252)"/><rect x="564.9" y="331.7" width="1.0" height="1.0" fill="rgb(227,227,227)"/><rect x="562.7" y="331.6" width="0.7" height="0.7" fill="rgb(237,237,237)"/><rect x="563.6" y="335.9" width="1.1" height="1.1" fill="rgb(225,225,225)"/><rect x="567.7" y="332.2" width="1.0" height="1.0" fill="rgb(194,194,194)"/><rect x="568.2" y="335.0" width="1.0" height="1.0" fill="rgb(200,200,200)"/><rect x="564.5" y="335.0" width="0.7" height="0.7" fill="rgb(232,232,232)"/><rect x="566.4" y="334.9" width="0.8" height="0.8" fill="rgb(233,233,233)"/><rect x="564.7" y="335.0" width="0.7" height="0.7" fill="rgb(250,250,250)"/><rect x="565.8" y="334.8" width="0.8" height="0.8" fill="rgb(219,219,219)"/><rect x="563.0" y="336.5" width="0.9" height="0.9" fill="rgb(199,199,199)"/><rect x="565.3" y="335.1" width="0.7" height="0.7" fill="rgb(186,186,186)"/><rect x="561.0" y="333.0" width="0.8" height="0.8" fill="rgb(239,239,239)"/><rect x="564.0" y="333.3" width="0.9" height="0.9" fill="rgb(194,194,194)"/><rect x="568.2" y="334.0" width="0.6" height="0.6" fill="rgb(191,191,191)"/><rect x="563.2" y="333.2" width="1.0" height="1.0" fill="rgb(197,197,197)"/><rect x="566.1" y="332.1" width="0.7" height="0.7" fill="rgb(223,223,223)"/><rect x="566.0" y="337.3" width="1.1" height="1.1" fill="rgb(239,239,239)"/><rect x="564.4" y="335.3" width="1.0" height="1.0" fill="rgb(222,222,222)"/><rect x="565.5" y="335.6" width="0.9" height="0.9" fill="rgb(188,188,188)"/><rect x="563.0" y="334.1" width="0.8" height="0.8" fill="rgb(211,211,211)"/>
<ellipse cx="581.42" cy="335.3" rx="6" ry="3.8" fill="#555"/><rect x="576.6" y="334.4" width="0.6" height="0.6" fill="rgb(231,231,231)"/><rect x="581.3" y="336.2" width="1.0" height="1.0" fill="rgb(228,228,228)"/><rect x="576.9" y="332.6" width="0.7" height="0.7" fill="rgb(196,196,196)"/><rect x="580.0" y="333.8" width="0.7" height="0.7" fill="rgb(189,189,189)"/><rect x="581.6" y="331.6" width="1.0" height="1.0" fill="rgb(251,251,251)"/><rect x="581.7" y="333.5" width="0.8" height="0.8" fill="rgb(231,231,231)"/><rect x="584.9" y="335.8" width="0.7" height="0.7" fill="rgb(174,174,174)"/><rect x="579.5" y="334.6" width="1.2" height="1.2" fill="rgb(244,244,244)"/><rect x="579.5" y="335.2" width="0.7" height="0.7" fill="rgb(213,213,213)"/><rect x="578.3" y="334.6" width="1.0" height="1.0" fill="rgb(214,214,214)"/><rect x="581.3" y="334.4" width="0.6" height="0.6" fill="rgb(202,202,202)"/><rect x="578.9" y="334.9" width="1.0" height="1.0" fill="rgb(188,188,188)"/><rect x="579.5" y="336.7" width="1.0" height="1.0" fill="rgb(235,235,235)"/><rect x="578.7" y="336.2" width="1.2" height="1.2" fill="rgb(249,249,249)"/><rect x="580.3" y="334.4" width="0.9" height="0.9" fill="rgb(224,224,224)"/><rect x="580.7" y="335.0" width="1.2" height="1.2" fill="rgb(247,247,247)"/><rect x="583.2" y="336.3" width="1.0" height="1.0" fill="rgb(195,195,195)"/><rect x="585.2" y="336.0" width="1.1" height="1.1" fill="rgb(207,207,207)"/><rect x="583.5" y="335.9" width="0.7" height="0.7" fill="rgb(251,251,251)"/><rect x="583.0" y="335.2" width="1.1" height="1.1" fill="rgb(181,181,181)"/><rect x="581.6" y="335.2" width="0.7" height="0.7" fill="rgb(215,215,215)"/><rect x="581.8" y="334.2" width="0.7" height="0.7" fill="rgb(235,235,235)"/><rect x="578.8" y="335.7" width="0.7" height="0.7" fill="rgb(190,190,190)"/><rect x="582.1" y="334.8" width="0.8" height="0.8" fill="rgb(232,232,232)"/><rect x="585.3" y="332.7" width="0.9" height="0.9" fill="rgb(251,251,251)"/><rect x="579.2" y="334.0" width="0.9" height="0.9" fill="rgb(230,230,230)"/><rect x="580.9" y="334.2" width="0.7" height="0.7" fill="rgb(251,251,251)"/><rect x="585.0" y="336.9" width="0.8" height="0.8" fill="rgb(191,191,191)"/><rect x="580.7" y="336.8" width="1.2" height="1.2" fill="rgb(182,182,182)"/><rect x="582.5" y="333.7" width="0.7" height="0.7" fill="rgb(233,233,233)"/><rect x="580.1" y="335.7" width="0.9" height="0.9" fill="rgb(239,239,239)"/><rect x="583.6" y="333.1" width="0.6" height="0.6" fill="rgb(234,234,234)"/><rect x="576.5" y="332.5" width="1.2" height="1.2" fill="rgb(197,197,197)"/><rect x="584.0" y="332.3" width="0.8" height="0.8" fill="rgb(201,201,201)"/><rect x="579.2" y="336.1" width="0.8" height="0.8" fill="rgb(179,179,179)"/><rect x="581.8" y="338.4" width="0.8" height="0.8" fill="rgb(224,224,224)"/><rect x="584.7" y="333.0" width="0.7" height="0.7" fill="rgb(248,248,248)"/><rect x="582.9" y="331.2" width="1.0" height="1.0" fill="rgb(234,234,234)"/><rect x="581.7" y="333.6" width="1.0" height="1.0" fill="rgb(202,202,202)"/><rect x="581.6" y="334.2" width="0.9" height="0.9" fill="rgb(198,198,198)"/><rect x="582.0" y="333.3" width="1.1" height="1.1" fill="rgb(242,242,242)"/><rect x="581.7" y="334.2" width="1.2" height="1.2" fill="rgb(233,233,233)"/><rect x="579.2" y="332.6" width="0.6" height="0.6" fill="rgb(243,243,243)"/><rect x="578.0" y="334.3" width="0.8" height="0.8" fill="rgb(236,236,236)"/><rect x="582.1" y="331.6" width="0.7" height="0.7" fill="rgb(198,198,198)"/><rect x="581.0" y="335.5" width="0.8" height="0.8" fill="rgb(172,172,172)"/><rect x="581.6" y="333.9" width="0.6" height="0.6" fill="rgb(175,175,175)"/><rect x="580.9" y="333.8" width="0.9" height="0.9" fill="rgb(204,204,204)"/><rect x="582.9" y="331.4" width="0.8" height="0.8" fill="rgb(223,223,223)"/><rect x="583.4" y="333.5" width="1.1" height="1.1" fill="rgb(232,232,232)"/><rect x="578.9" y="338.0" width="0.9" height="0.9" fill="rgb(179,179,179)"/><rect x="576.6" y="333.1" width="0.9" height="0.9" fill="rgb(211,211,211)"/><rect x="576.2" y="336.5" width="1.0" height="1.0" fill="rgb(187,187,187)"/><rect x="579.1" y="336.0" width="1.2" height="1.2" fill="rgb(229,229,229)"/><rect x="585.1" y="337.5" width="0.6" height="0.6" fill="rgb(220,220,220)"/><rect x="576.8" y="336.1" width="0.9" height="0.9" fill="rgb(177,177,177)"/><rect x="575.8" y="334.3" width="1.1" height="1.1" fill="rgb(200,200,200)"/><rect x="581.7" y="337.7" width="1.1" height="1.1" fill="rgb(188,188,188)"/><rect x="585.4" y="332.3" width="0.9" height="0.9" fill="rgb(202,202,202)"/><rect x="579.6" y="331.5" width="0.7" height="0.7" fill="rgb(195,195,195)"/>
<rect x="595.6" y="338.5" width="0.6" height="0.6" fill="rgb(74,74,74)"/><rect x="593.7" y="335.0" width="0.6" height="0.6" fill="rgb(115,115,115)"/><rect x="600.9" y="334.8" width="1.1" height="1.1" fill="rgb(38,38,38)"/><rect x="600.3" y="333.2" width="1.0" height="1.0" fill="rgb(106,106,106)"/><rect x="594.1" y="338.9" width="0.6" height="0.6" fill="rgb(22,22,22)"/><rect x="592.1" y="334.7" width="1.1" height="1.1" fill="rgb(115,115,115)"/><rect x="592.0" y="334.5" width="0.9" height="0.9" fill="rgb(34,34,34)"/><rect x="594.4" y="331.7" width="0.8" height="0.8" fill="rgb(80,80,80)"/><rect x="597.5" y="336.4" width="0.8" height="0.8" fill="rgb(71,71,71)"/><rect x="597.2" y="335.1" width="0.5" height="0.5" fill="rgb(54,54,54)"/><rect x="596.8" y="330.9" width="0.7" height="0.7" fill="rgb(45,45,45)"/><rect x="596.5" y="334.7" width="0.9" height="0.9" fill="rgb(110,110,110)"/><rect x="598.6" y="337.9" width="1.0" height="1.0" fill="rgb(94,94,94)"/><rect x="596.7" y="331.2" width="0.7" height="0.7" fill="rgb(103,103,103)"/><rect x="597.7" y="334.6" width="1.2" height="1.2" fill="rgb(64,64,64)"/><rect x="597.9" y="335.0" width="1.1" height="1.1" fill="rgb(87,87,87)"/><rect x="599.3" y="336.8" width="0.9" height="0.9" fill="rgb(119,119,119)"/><rect x="595.3" y="338.6" width="0.7" height="0.7" fill="rgb(39,39,39)"/><rect x="598.9" y="336.7" width="0.9" height="0.9" fill="rgb(50,50,50)"/><rect x="598.4" y="336.0" width="0.6" height="0.6" fill="rgb(39,39,39)"/><rect x="596.5" y="337.5" width="0.6" height="0.6" fill="rgb(67,67,67)"/><rect x="592.2" y="336.9" width="0.8" height="0.8" fill="rgb(114,114,114)"/><rect x="596.4" y="335.0" width="0.9" height="0.9" fill="rgb(34,34,34)"/><rect x="597.8" y="335.2" width="1.0" height="1.0" fill="rgb(116,116,116)"/><rect x="595.9" y="336.0" width="0.8" height="0.8" fill="rgb(55,55,55)"/><rect x="596.9" y="333.0" width="0.6" height="0.6" fill="rgb(106,106,106)"/><rect x="597.5" y="334.7" width="1.1" height="1.1" fill="rgb(92,92,92)"/><rect x="595.2" y="337.5" width="1.1" height="1.1" fill="rgb(60,60,60)"/><rect x="596.0" y="335.5" width="0.9" height="0.9" fill="rgb(86,86,86)"/><rect x="597.2" y="329.8" width="0.6" height="0.6" fill="rgb(56,56,56)"/>
<rect x="617.2" y="330.9" width="0.8" height="0.8" fill="rgb(88,88,88)"/><rect x="611.2" y="339.8" width="0.8" height="0.8" fill="rgb(52,52,52)"/><rect x="614.6" y="335.8" width="0.9" height="0.9" fill="rgb(104,104,104)"/><rect x="616.7" y="335.3" width="0.7" height="0.7" fill="rgb(64,64,64)"/><rect x="610.7" y="339.1" width="0.7" height="0.7" fill="rgb(69,69,69)"/><rect x="618.1" y="333.1" width="0.7" height="0.7" fill="rgb(43,43,43)"/><rect x="611.2" y="337.5" width="0.9" height="0.9" fill="rgb(33,33,33)"/><rect x="612.4" y="337.0" width="0.7" height="0.7" fill="rgb(118,118,118)"/><rect x="612.2" y="334.4" width="0.7" height="0.7" fill="rgb(106,106,106)"/><rect x="616.8" y="338.8" width="0.5" height="0.5" fill="rgb(25,25,25)"/><rect x="619.1" y="336.9" width="0.6" height="0.6" fill="rgb(29,29,29)"/><rect x="616.2" y="335.6" width="0.9" height="0.9" fill="rgb(93,93,93)"/><rect x="619.1" y="331.8" width="0.8" height="0.8" fill="rgb(119,119,119)"/><rect x="619.1" y="338.0" width="0.7" height="0.7" fill="rgb(25,25,25)"/><rect x="614.2" y="329.6" width="0.7" height="0.7" fill="rgb(12,12,12)"/><rect x="617.6" y="331.5" width="0.8" height="0.8" fill="rgb(126,126,126)"/><rect x="615.0" y="335.2" width="0.6" height="0.6" fill="rgb(2,2,2)"/><rect x="613.3" y="331.0" width="0.6" height="0.6" fill="rgb(21,21,21)"/><rect x="615.9" y="338.5" width="0.8" height="0.8" fill="rgb(126,126,126)"/><rect x="610.5" y="339.5" width="0.7" height="0.7" fill="rgb(50,50,50)"/><rect x="614.1" y="336.7" width="1.0" height="1.0" fill="rgb(129,129,129)"/><rect x="614.0" y="333.6" width="0.6" height="0.6" fill="rgb(19,19,19)"/><rect x="611.6" y="338.8" width="0.5" height="0.5" fill="rgb(68,68,68)"/><rect x="614.1" y="334.6" width="0.7" height="0.7" fill="rgb(102,102,102)"/><rect x="611.4" y="333.4" width="0.9" height="0.9" fill="rgb(78,78,78)"/><rect x="612.7" y="337.3" width="1.0" height="1.0" fill="rgb(111,111,111)"/><rect x="617.6" y="333.1" width="0.6" height="0.6" fill="rgb(22,22,22)"/><rect x="611.1" y="338.0" width="0.5" height="0.5" fill="rgb(104,104,104)"/><rect x="615.2" y="331.6" width="0.5" height="0.5" fill="rgb(103,103,103)"/><rect x="610.5" y="337.1" width="0.8" height="0.8" fill="rgb(94,94,94)"/><rect x="609.3" y="338.0" width="1.0" height="1.0" fill="rgb(120,120,120)"/><rect x="612.5" y="333.4" width="0.7" height="0.7" fill="rgb(34,34,34)"/><rect x="618.3" y="332.0" width="0.9" height="0.9" fill="rgb(106,106,106)"/><rect x="618.8" y="334.7" width="0.7" height="0.7" fill="rgb(98,98,98)"/><rect x="614.1" y="339.0" width="0.6" height="0.6" fill="rgb(111,111,111)"/><rect x="612.0" y="335.0" width="1.0" height="1.0" fill="rgb(10,10,10)"/><rect x="618.7" y="333.0" width="0.6" height="0.6" fill="rgb(98,98,98)"/><rect x="609.3" y="332.4" width="0.8" height="0.8" fill="rgb(55,55,55)"/><rect x="615.0" y="334.5" width="0.9" height="0.9" fill="rgb(13,13,13)"/><rect x="614.0" y="335.9" width="0.9" height="0.9" fill="rgb(57,57,57)"/><rect x="613.9" y="332.9" width="0.9" height="0.9" fill="rgb(84,84,84)"/><rect x="617.0" y="336.8" width="0.9" height="0.9" fill="rgb(27,27,27)"/><rect x="613.1" y="333.2" width="0.7" height="0.7" fill="rgb(119,119,119)"/><rect x="619.9" y="332.8" width="0.7" height="0.7" fill="rgb(74,74,74)"/><rect x="616.0" y="330.4" width="0.7" height="0.7" fill="rgb(112,112,112)"/><rect x="609.6" y="338.3" width="0.7" height="0.7" fill="rgb(15,15,15)"/><rect x="614.2" y="333.6" width="0.8" height="0.8" fill="rgb(6,6,6)"/><rect x="617.9" y="334.6" width="0.9" height="0.9" fill="rgb(17,17,17)"/><rect x="612.6" y="332.9" width="0.6" height="0.6" fill="rgb(105,105,105)"/><rect x="617.6" y="335.7" width="0.5" height="0.5" fill="rgb(110,110,110)"/><rect x="614.6" y="334.7" width="0.7" height="0.7" fill="rgb(60,60,60)"/><rect x="613.4" y="330.4" width="0.7" height="0.7" fill="rgb(121,121,121)"/><rect x="614.7" y="336.0" width="0.9" height="0.9" fill="rgb(15,15,15)"/><rect x="615.7" y="338.1" width="0.7" height="0.7" fill="rgb(21,21,21)"/><rect x="617.2" y="333.4" width="0.9" height="0.9" fill="rgb(32,32,32)"/><rect x="615.7" y="333.9" width="1.0" height="1.0" fill="rgb(79,79,79)"/><rect x="619.0" y="334.0" width="0.8" height="0.8" fill="rgb(69,69,69)"/><rect x="616.3" y="332.5" width="0.5" height="0.5" fill="rgb(118,118,118)"/><rect x="615.7" y="330.7" width="0.9" height="0.9" fill="rgb(30,30,30)"/><rect x="609.2" y="336.0" width="1.0" height="1.0" fill="rgb(120,120,120)"/><rect x="616.6" y="338.7" width="0.8" height="0.8" fill="rgb(52,52,52)"/><rect x="614.9" y="336.0" width="0.7" height="0.7" fill="rgb(64,64,64)"/><rect x="614.0" y="337.6" width="0.8" height="0.8" fill="rgb(99,99,99)"/><rect x="613.0" y="334.1" width="0.9" height="0.9" fill="rgb(47,47,47)"/><rect x="620.1" y="333.5" width="0.6" height="0.6" fill="rgb(75,75,75)"/><rect x="617.0" y="334.3" width="0.8" height="0.8" fill="rgb(40,40,40)"/><rect x="616.0" y="335.3" width="0.6" height="0.6" fill="rgb(36,36,36)"/><rect x="611.6" y="332.1" width="1.0" height="1.0" fill="rgb(89,89,89)"/><rect x="610.5" y="339.3" width="0.8" height="0.8" fill="rgb(70,70,70)"/><rect x="617.1" y="331.6" width="0.7" height="0.7" fill="rgb(78,78,78)"/>
<rect x="625.28" y="329.8" width="12" height="11" fill="#555"/><rect x="629.1" y="340.0" width="0.7" height="0.7" fill="rgb(251,251,251)"/><rect x="630.9" y="334.9" width="0.9" height="0.9" fill="rgb(147,147,147)"/><rect x="630.0" y="334.7" width="1.1" height="1.1" fill="rgb(210,210,210)"/><rect x="628.4" y="330.0" width="1.2" height="1.2" fill="rgb(211,211,211)"/><rect x="631.0" y="335.0" width="0.6" height="0.6" fill="rgb(177,177,177)"/><rect x="632.7" y="334.5" width="0.9" height="0.9" fill="rgb(121,121,121)"/><rect x="626.1" y="337.3" width="1.0" height="1.0" fill="rgb(231,231,231)"/><rect x="632.1" y="335.0" width="0.7" height="0.7" fill="rgb(232,232,232)"/><rect x="635.4" y="338.0" width="0.8" height="0.8" fill="rgb(238,238,238)"/><rect x="628.8" y="334.5" width="1.2" height="1.2" fill="rgb(174,174,174)"/><rect x="630.6" y="334.4" width="1.1" height="1.1" fill="rgb(252,252,252)"/><rect x="634.3" y="337.5" width="0.8" height="0.8" fill="rgb(139,139,139)"/><rect x="628.1" y="337.5" width="1.2" height="1.2" fill="rgb(254,254,254)"/><rect x="634.5" y="334.7" width="1.0" height="1.0" fill="rgb(141,141,141)"/><rect x="630.4" y="331.9" width="0.8" height="0.8" fill="rgb(241,241,241)"/><rect x="630.9" y="335.7" width="0.7" height="0.7" fill="rgb(140,140,140)"/><rect x="626.9" y="332.6" width="0.7" height="0.7" fill="rgb(187,187,187)"/><rect x="627.9" y="333.5" width="0.8" height="0.8" fill="rgb(193,193,193)"/><rect x="631.2" y="334.9" width="0.9" height="0.9" fill="rgb(151,151,151)"/><rect x="630.8" y="333.4" width="1.1" height="1.1" fill="rgb(152,152,152)"/><rect x="633.3" y="336.3" width="0.8" height="0.8" fill="rgb(165,165,165)"/><rect x="630.9" y="333.6" width="1.0" height="1.0" fill="rgb(232,232,232)"/><rect x="627.8" y="335.5" width="1.2" height="1.2" fill="rgb(201,201,201)"/><rect x="631.1" y="335.3" width="0.6" height="0.6" fill="rgb(164,164,164)"/><rect x="634.2" y="336.8" width="0.9" height="0.9" fill="rgb(161,161,161)"/><rect x="625.3" y="334.5" width="0.7" height="0.7" fill="rgb(140,140,140)"/><rect x="630.0" y="336.4" width="1.1" height="1.1" fill="rgb(215,215,215)"/><rect x="630.1" y="335.4" width="0.6" height="0.6" fill="rgb(136,136,136)"/><rect x="633.2" y="332.0" width="0.7" height="0.7" fill="rgb(204,204,204)"/><rect x="633.7" y="335.9" width="0.8" height="0.8" fill="rgb(133,133,133)"/><rect x="630.6" y="330.9" width="0.9" height="0.9" fill="rgb(142,142,142)"/><rect x="629.5" y="332.7" width="1.0" height="1.0" fill="rgb(132,132,132)"/><rect x="630.9" y="334.9" width="0.7" height="0.7" fill="rgb(173,173,173)"/><rect x="630.9" y="335.3" width="1.0" height="1.0" fill="rgb(254,254,254)"/><rect x="630.0" y="336.1" width="1.0" height="1.0" fill="rgb(150,150,150)"/><rect x="627.5" y="337.1" width="0.9" height="0.9" fill="rgb(141,141,141)"/><rect x="633.6" y="336.0" width="1.2" height="1.2" fill="rgb(244,244,244)"/><rect x="633.3" y="336.5" width="0.9" height="0.9" fill="rgb(146,146,146)"/><rect x="629.3" y="332.4" width="1.1" height="1.1" fill="rgb(159,159,159)"/><rect x="635.3" y="333.0" width="0.9" height="0.9" fill="rgb(139,139,139)"/><rect x="630.0" y="334.9" width="1.0" height="1.0" fill="rgb(214,214,214)"/><rect x="625.8" y="332.5" width="0.6" height="0.6" fill="rgb(216,216,216)"/><rect x="631.1" y="334.3" width="0.8" height="0.8" fill="rgb(127,127,127)"/><rect x="627.1" y="332.9" width="0.8" height="0.8" fill="rgb(213,213,213)"/><rect x="628.0" y="337.8" width="0.8" height="0.8" fill="rgb(252,252,252)"/><rect x="630.9" y="335.0" width="0.7" height="0.7" fill="rgb(218,218,218)"/><rect x="633.5" y="332.3" width="0.7" height="0.7" fill="rgb(237,237,237)"/><rect x="630.7" y="334.3" width="0.8" height="0.8" fill="rgb(210,210,210)"/><rect x="631.1" y="334.9" width="0.8" height="0.8" fill="rgb(238,238,238)"/><rect x="632.6" y="334.7" width="1.1" height="1.1" fill="rgb(226,226,226)"/><rect x="633.0" y="332.3" width="1.2" height="1.2" fill="rgb(206,206,206)"/><rect x="634.1" y="333.9" width="0.7" height="0.7" fill="rgb(190,190,190)"/><rect x="628.9" y="335.1" width="0.8" height="0.8" fill="rgb(188,188,188)"/><rect x="629.8" y="334.3" width="0.8" height="0.8" fill="rgb(187,187,187)"/><rect x="628.3" y="334.7" width="1.0" height="1.0" fill="rgb(145,145,145)"/><rect x="629.1" y="334.5" width="1.1" height="1.1" fill="rgb(214,214,214)"/><rect x="631.5" y="332.1" width="0.7" height="0.7" fill="rgb(244,244,244)"/><rect x="628.6" y="334.8" width="0.8" height="0.8" fill="rgb(174,174,174)"/><rect x="629.6" y="330.5" width="0.9" height="0.9" fill="rgb(218,218,218)"/><rect x="631.5" y="337.3" width="0.8" height="0.8" fill="rgb(161,161,161)"/><rect x="627.9" y="338.0" width="1.0" height="1.0" fill="rgb(147,147,147)"/><rect x="631.3" y="339.1" width="1.0" height="1.0" fill="rgb(211,211,211)"/><rect x="628.2" y="332.1" width="0.8" height="0.8" fill="rgb(128,128,128)"/><rect x="630.6" y="334.8" width="1.2" height="1.2" fill="rgb(190,190,190)"/><rect x="628.0" y="330.1" width="1.1" height="1.1" fill="rgb(150,150,150)"/><rect x="630.4" y="335.3" width="1.1" height="1.1" fill="rgb(219,219,219)"/><rect x="628.7" y="335.1" width="0.8" height="0.8" fill="rgb(185,185,185)"/><rect x="629.5" y="330.0" width="1.1" height="1.1" fill="rgb(237,237,237)"/><rect x="628.5" y="335.8" width="0.8" height="0.8" fill="rgb(251,251,251)"/><rect x="631.3" y="335.7" width="0.8" height="0.8" fill="rgb(244,244,244)"/><rect x="631.9" y="333.3" width="1.1" height="1.1" fill="rgb(240,240,240)"/><rect x="629.7" y="335.2" width="1.1" height="1.1" fill="rgb(170,170,170)"/><rect x="634.8" y="338.3" width="0.9" height="0.9" fill="rgb(173,173,173)"/><rect x="629.7" y="334.2" width="0.6" height="0.6" fill="rgb(172,172,172)"/><rect x="630.8" y="334.9" width="0.8" height="0.8" fill="rgb(222,222,222)"/><rect x="628.8" y="338.1" width="1.0" height="1.0" fill="rgb(145,145,145)"/><rect x="634.8" y="335.3" width="1.0" height="1.0" fill="rgb(159,159,159)"/><rect x="632.3" y="339.2" width="1.1" height="1.1" fill="rgb(151,151,151)"/><rect x="627.9" y="333.3" width="0.8" height="0.8" fill="rgb(124,124,124)"/><rect x="629.0" y="338.0" width="1.0" height="1.0" fill="rgb(188,188,188)"/><rect x="631.8" y="335.7" width="0.8" height="0.8" fill="rgb(176,176,176)"/><rect x="627.4" y="338.7" width="0.7" height="0.7" fill="rgb(253,253,253)"/><rect x="631.2" y="339.6" width="0.7" height="0.7" fill="rgb(199,199,199)"/><rect x="630.6" y="334.9" width="1.1" height="1.1" fill="rgb(229,229,229)"/><rect x="630.3" y="339.1" width="0.9" height="0.9" fill="rgb(253,253,253)"/><rect x="633.1" y="335.6" width="0.7" height="0.7" fill="rgb(204,204,204)"/><rect x="631.7" y="330.3" width="0.9" height="0.9" fill="rgb(172,172,172)"/><rect x="631.1" y="334.4" width="0.8" height="0.8" fill="rgb(221,221,221)"/><rect x="625.4" y="337.0" width="0.7" height="0.7" fill="rgb(182,182,182)"/><rect x="631.0" y="335.0" width="0.7" height="0.7" fill="rgb(132,132,132)"/><rect x="629.1" y="336.6" width="0.9" height="0.9" fill="rgb(159,159,159)"/><rect x="629.8" y="332.0" width="1.2" height="1.2" fill="rgb(142,142,142)"/><rect x="627.9" y="334.7" width="0.8" height="0.8" fill="rgb(236,236,236)"/><rect x="632.2" y="339.6" width="0.8" height="0.8" fill="rgb(165,165,165)"/><rect x="628.4" y="332.9" width="0.8" height="0.8" fill="rgb(131,131,131)"/><rect x="633.1" y="334.4" width="0.7" height="0.7" fill="rgb(208,208,208)"/><rect x="629.0" y="334.5" width="0.8" height="0.8" fill="rgb(234,234,234)"/><rect x="629.4" y="336.7" width="1.2" height="1.2" fill="rgb(168,168,168)"/><rect x="630.0" y="335.3" width="1.0" height="1.0" fill="rgb(209,209,209)"/><rect x="628.6" y="335.7" width="0.7" height="0.7" fill="rgb(226,226,226)"/><rect x="626.1" y="336.1" width="0.8" height="0.8" fill="rgb(219,219,219)"/><rect x="632.0" y="334.9" width="1.2" height="1.2" fill="rgb(212,212,212)"/><rect x="629.5" y="332.4" width="0.9" height="0.9" fill="rgb(146,146,146)"/><rect x="632.6" y="337.9" width="1.0" height="1.0" fill="rgb(154,154,154)"/><rect x="630.3" y="334.2" width="1.0" height="1.0" fill="rgb(143,143,143)"/><rect x="628.9" y="334.7" width="0.9" height="0.9" fill="rgb(138,138,138)"/><rect x="627.3" y="335.3" width="0.7" height="0.7" fill="rgb(161,161,161)"/><rect x="629.4" y="332.1" width="1.0" height="1.0" fill="rgb(225,225,225)"/><rect x="629.6" y="334.3" width="0.9" height="0.9" fill="rgb(232,232,232)"/><rect x="626.7" y="333.2" width="0.8" height="0.8" fill="rgb(180,180,180)"/><rect x="635.6" y="334.0" width="1.0" height="1.0" fill="rgb(134,134,134)"/><rect x="630.5" y="334.6" width="1.2" height="1.2" fill="rgb(251,251,251)"/><rect x="630.5" y="333.3" width="1.1" height="1.1" fill="rgb(143,143,143)"/><rect x="632.4" y="332.5" width="0.6" height="0.6" fill="rgb(240,240,240)"/><rect x="626.1" y="336.5" width="1.0" height="1.0" fill="rgb(191,191,191)"/><rect x="631.5" y="333.9" width="1.1" height="1.1" fill="rgb(165,165,165)"/><rect x="633.0" y="335.3" width="0.6" height="0.6" fill="rgb(129,129,129)"/><rect x="630.4" y="334.5" width="0.7" height="0.7" fill="rgb(159,159,159)"/><rect x="629.7" y="339.7" width="1.1" height="1.1" fill="rgb(237,237,237)"/><rect x="633.4" y="334.6" width="1.1" height="1.1" fill="rgb(157,157,157)"/>
<rect x="652.2" y="332.7" width="0.9" height="0.9" fill="rgb(31,31,31)"/><rect x="652.6" y="337.9" width="0.8" height="0.8" fill="rgb(85,85,85)"/><rect x="648.1" y="334.2" width="0.8" height="0.8" fill="rgb(64,64,64)"/><rect x="648.3" y="332.3" width="0.6" height="0.6" fill="rgb(133,133,133)"/><rect x="646.5" y="339.2" width="0.9" height="0.9" fill="rgb(34,34,34)"/><rect x="646.7" y="332.8" width="0.6" height="0.6" fill="rgb(30,30,30)"/><rect x="649.8" y="334.3" width="0.8" height="0.8" fill="rgb(70,70,70)"/><rect x="652.3" y="335.6" width="0.9" height="0.9" fill="rgb(122,122,122)"/><rect x="646.7" y="335.9" width="0.7" height="0.7" fill="rgb(102,102,102)"/><rect x="646.1" y="332.9" width="0.8" height="0.8" fill="rgb(21,21,21)"/><rect x="650.2" y="333.5" width="0.8" height="0.8" fill="rgb(110,110,110)"/><rect x="649.1" y="339.1" width="0.7" height="0.7" fill="rgb(113,113,113)"/><rect x="649.0" y="335.8" width="0.8" height="0.8" fill="rgb(67,67,67)"/><rect x="644.9" y="337.4" width="0.6" height="0.6" fill="rgb(61,61,61)"/><rect x="652.8" y="335.0" width="0.6" height="0.6" fill="rgb(116,116,116)"/><rect x="643.8" y="333.7" width="0.8" height="0.8" fill="rgb(17,17,17)"/><rect x="647.8" y="333.1" width="0.9" height="0.9" fill="rgb(110,110,110)"/><rect x="645.2" y="330.5" width="0.7" height="0.7" fill="rgb(94,94,94)"/><rect x="648.8" y="334.7" width="0.6" height="0.6" fill="rgb(57,57,57)"/><rect x="646.6" y="334.9" width="0.6" height="0.6" fill="rgb(121,121,121)"/><rect x="646.9" y="335.6" width="0.6" height="0.6" fill="rgb(80,80,80)"/><rect x="648.7" y="337.6" width="0.8" height="0.8" fill="rgb(61,61,61)"/><rect x="642.2" y="334.9" width="0.5" height="0.5" fill="rgb(130,130,130)"/><rect x="647.5" y="335.1" width="0.9" height="0.9" fill="rgb(79,79,79)"/><rect x="646.1" y="334.5" width="0.9" height="0.9" fill="rgb(42,42,42)"/><rect x="647.3" y="333.6" width="0.8" height="0.8" fill="rgb(90,90,90)"/><rect x="645.5" y="337.1" width="0.5" height="0.5" fill="rgb(90,90,90)"/><rect x="647.2" y="334.1" width="0.8" height="0.8" fill="rgb(102,102,102)"/><rect x="651.8" y="337.8" width="0.9" height="0.9" fill="rgb(7,7,7)"/><rect x="647.6" y="335.5" width="0.6" height="0.6" fill="rgb(12,12,12)"/><rect x="646.0" y="335.1" width="0.7" height="0.7" fill="rgb(64,64,64)"/><rect x="643.9" y="338.3" width="0.9" height="0.9" fill="rgb(15,15,15)"/><rect x="647.6" y="335.0" width="0.7" height="0.7" fill="rgb(15,15,15)"/><rect x="645.7" y="330.4" width="1.0" height="1.0" fill="rgb(29,29,29)"/><rect x="652.3" y="336.0" width="0.7" height="0.7" fill="rgb(130,130,130)"/><rect x="646.0" y="336.2" width="0.5" height="0.5" fill="rgb(132,132,132)"/><rect x="644.7" y="334.7" width="0.7" height="0.7" fill="rgb(107,107,107)"/><rect x="649.1" y="332.5" width="0.6" height="0.6" fill="rgb(56,56,56)"/><rect x="649.5" y="333.3" width="0.8" height="0.8" fill="rgb(78,78,78)"/><rect x="644.0" y="335.8" width="0.6" height="0.6" fill="rgb(78,78,78)"/><rect x="647.9" y="334.6" width="0.7" height="0.7" fill="rgb(123,123,123)"/><rect x="647.6" y="334.9" width="0.8" height="0.8" fill="rgb(88,88,88)"/><rect x="649.3" y="332.7" width="0.6" height="0.6" fill="rgb(42,42,42)"/><rect x="646.5" y="330.7" width="0.6" height="0.6" fill="rgb(89,89,89)"/><rect x="645.3" y="331.8" width="0.5" height="0.5" fill="rgb(61,61,61)"/><rect x="645.8" y="338.2" width="0.7" height="0.7" fill="rgb(17,17,17)"/><rect x="646.6" y="333.3" width="0.9" height="0.9" fill="rgb(42,42,42)"/><rect x="642.6" y="333.6" width="0.6" height="0.6" fill="rgb(102,102,102)"/><rect x="653.2" y="337.4" width="0.5" height="0.5" fill="rgb(101,101,101)"/><rect x="646.8" y="335.7" width="0.7" height="0.7" fill="rgb(70,70,70)"/><rect x="646.8" y="335.3" width="0.8" height="0.8" fill="rgb(42,42,42)"/><rect x="650.0" y="334.5" width="0.7" height="0.7" fill="rgb(31,31,31)"/><rect x="649.5" y="334.5" width="0.8" height="0.8" fill="rgb(116,116,116)"/><rect x="643.7" y="337.8" width="0.6" height="0.6" fill="rgb(15,15,15)"/><rect x="650.2" y="335.5" width="0.9" height="0.9" fill="rgb(28,28,28)"/><rect x="643.0" y="336.7" width="0.6" height="0.6" fill="rgb(21,21,21)"/><rect x="644.7" y="334.5" width="1.0" height="1.0" fill="rgb(125,125,125)"/><rect x="647.8" y="338.3" width="0.7" height="0.7" fill="rgb(4,4,4)"/><rect x="642.0" y="336.9" width="0.7" height="0.7" fill="rgb(82,82,82)"/><rect x="647.3" y="334.5" width="1.0" height="1.0" fill="rgb(15,15,15)"/><rect x="646.2" y="339.1" width="0.5" height="0.5" fill="rgb(52,52,52)"/><rect x="649.8" y="337.1" width="0.5" height="0.5" fill="rgb(21,21,21)"/><rect x="647.7" y="335.5" width="0.5" height="0.5" fill="rgb(27,27,27)"/><rect x="646.6" y="334.8" width="0.9" height="0.9" fill="rgb(58,58,58)"/><rect x="647.4" y="336.3" width="0.9" height="0.9" fill="rgb(6,6,6)"/><rect x="647.4" y="334.2" width="1.0" height="1.0" fill="rgb(57,57,57)"/><rect x="643.0" y="332.0" width="0.6" height="0.6" fill="rgb(8,8,8)"/><rect x="646.1" y="331.6" width="0.9" height="0.9" fill="rgb(38,38,38)"/><rect x="646.3" y="335.0" width="0.7" height="0.7" fill="rgb(39,39,39)"/><rect x="645.9" y="334.1" width="0.6" height="0.6" fill="rgb(89,89,89)"/><rect x="652.0" y="337.4" width="0.7" height="0.7" fill="rgb(32,32,32)"/><rect x="650.0" y="336.9" width="0.8" height="0.8" fill="rgb(100,100,100)"/><rect x="645.5" y="336.6" width="0.9" height="0.9" fill="rgb(38,38,38)"/><rect x="653.2" y="334.2" width="1.0" height="1.0" fill="rgb(132,132,132)"/><rect x="647.3" y="339.8" width="0.8" height="0.8" fill="rgb(28,28,28)"/><rect x="651.7" y="334.8" width="0.9" height="0.9" fill="rgb(78,78,78)"/><rect x="652.5" y="337.5" width="0.6" height="0.6" fill="rgb(36,36,36)"/><rect x="646.6" y="334.2" width="0.7" height="0.7" fill="rgb(99,99,99)"/><rect x="651.2" y="337.3" width="0.6" height="0.6" fill="rgb(66,66,66)"/><rect x="645.0" y="331.7" width="0.5" height="0.5" fill="rgb(26,26,26)"/><rect x="650.0" y="334.4" width="0.7" height="0.7" fill="rgb(52,52,52)"/><rect x="645.9" y="330.7" width="0.8" height="0.8" fill="rgb(56,56,56)"/><rect x="644.6" y="333.7" width="0.6" height="0.6" fill="rgb(132,132,132)"/><rect x="652.3" y="333.8" width="1.0" height="1.0" fill="rgb(65,65,65)"/><rect x="648.3" y="333.6" width="0.9" height="0.9" fill="rgb(100,100,100)"/><rect x="652.4" y="332.9" width="0.9" height="0.9" fill="rgb(37,37,37)"/><rect x="648.3" y="332.2" width="0.7" height="0.7" fill="rgb(51,51,51)"/><rect x="649.1" y="330.0" width="0.9" height="0.9" fill="rgb(93,93,93)"/><rect x="648.0" y="335.7" width="0.8" height="0.8" fill="rgb(29,29,29)"/><rect x="647.3" y="335.5" width="0.6" height="0.6" fill="rgb(100,100,100)"/><rect x="648.5" y="340.0" width="0.7" height="0.7" fill="rgb(118,118,118)"/><rect x="647.0" y="336.5" width="0.7" height="0.7" fill="rgb(1,1,1)"/><rect x="645.4" y="335.9" width="0.5" height="0.5" fill="rgb(120,120,120)"/><rect x="647.4" y="334.8" width="1.0" height="1.0" fill="rgb(31,31,31)"/><rect x="647.6" y="335.2" width="0.5" height="0.5" fill="rgb(99,99,99)"/><rect x="644.7" y="333.5" width="0.6" height="0.6" fill="rgb(40,40,40)"/><rect x="649.8" y="334.4" width="1.0" height="1.0" fill="rgb(124,124,124)"/><rect x="651.6" y="338.6" width="0.5" height="0.5" fill="rgb(99,99,99)"/><rect x="649.2" y="331.0" width="0.8" height="0.8" fill="rgb(113,113,113)"/><rect x="649.6" y="337.7" width="0.6" height="0.6" fill="rgb(55,55,55)"/><rect x="649.2" y="338.9" width="0.8" height="0.8" fill="rgb(109,109,109)"/><rect x="644.7" y="332.2" width="1.0" height="1.0" fill="rgb(113,113,113)"/><rect x="645.5" y="334.0" width="1.0" height="1.0" fill="rgb(51,51,51)"/><rect x="649.2" y="336.1" width="0.9" height="0.9" fill="rgb(130,130,130)"/><rect x="644.8" y="331.7" width="1.0" height="1.0" fill="rgb(108,108,108)"/><rect x="644.6" y="335.8" width="0.9" height="0.9" fill="rgb(44,44,44)"/><rect x="650.6" y="337.2" width="0.9" height="0.9" fill="rgb(34,34,34)"/><rect x="645.3" y="330.1" width="0.6" height="0.6" fill="rgb(19,19,19)"/><rect x="645.2" y="334.9" width="1.0" height="1.0" fill="rgb(139,139,139)"/><rect x="642.6" y="336.5" width="0.8" height="0.8" fill="rgb(24,24,24)"/><rect x="648.7" y="334.8" width="0.5" height="0.5" fill="rgb(63,63,63)"/><rect x="650.7" y="335.3" width="0.7" height="0.7" fill="rgb(133,133,133)"/><rect x="642.7" y="337.5" width="0.9" height="0.9" fill="rgb(82,82,82)"/><rect x="647.7" y="336.8" width="0.7" height="0.7" fill="rgb(55,55,55)"/><rect x="645.6" y="332.6" width="0.7" height="0.7" fill="rgb(84,84,84)"/><rect x="648.9" y="334.9" width="0.7" height="0.7" fill="rgb(1,1,1)"/><rect x="647.8" y="335.1" width="0.7" height="0.7" fill="rgb(117,117,117)"/><rect x="645.4" y="329.4" width="0.9" height="0.9" fill="rgb(82,82,82)"/><rect x="647.5" y="334.9" width="0.7" height="0.7" fill="rgb(36,36,36)"/><rect x="647.2" y="334.6" width="0.8" height="0.8" fill="rgb(52,52,52)"/><rect x="645.0" y="335.1" width="0.6" height="0.6" fill="rgb(102,102,102)"/><rect x="648.8" y="331.6" width="0.6" height="0.6" fill="rgb(83,83,83)"/><rect x="651.9" y="330.6" width="0.9" height="0.9" fill="rgb(6,6,6)"/><rect x="650.7" y="332.2" width="0.6" height="0.6" fill="rgb(128,128,128)"/><rect x="650.3" y="330.2" width="0.6" height="0.6" fill="rgb(80,80,80)"/><rect x="646.1" y="336.1" width="0.9" height="0.9" fill="rgb(86,86,86)"/><rect x="645.7" y="337.7" width="1.0" height="1.0" fill="rgb(79,79,79)"/><rect x="650.6" y="333.0" width="1.0" height="1.0" fill="rgb(4,4,4)"/><rect x="644.0" y="335.7" width="0.9" height="0.9" fill="rgb(135,135,135)"/><rect x="645.3" y="332.9" width="0.8" height="0.8" fill="rgb(74,74,74)"/><rect x="645.9" y="329.6" width="0.5" height="0.5" fill="rgb(44,44,44)"/><rect x="647.7" y="334.6" width="0.9" height="0.9" fill="rgb(4,4,4)"/><rect x="644.5" y="331.1" width="0.6" height="0.6" fill="rgb(53,53,53)"/><rect x="648.2" y="339.1" width="0.8" height="0.8" fill="rgb(84,84,84)"/><rect x="645.7" y="337.9" width="1.0" height="1.0" fill="rgb(109,109,109)"/><rect x="649.1" y="334.5" width="0.8" height="0.8" fill="rgb(53,53,53)"/><rect x="644.6" y="339.0" width="0.6" height="0.6" fill="rgb(78,78,78)"/><rect x="648.6" y="329.5" width="0.5" height="0.5" fill="rgb(37,37,37)"/><rect x="641.5" y="335.3" width="0.6" height="0.6" fill="rgb(117,117,117)"/><rect x="644.6" y="336.8" width="1.0" height="1.0" fill="rgb(8,8,8)"/><rect x="647.1" y="335.8" width="0.6" height="0.6" fill="rgb(42,42,42)"/><rect x="646.5" y="331.7" width="0.6" height="0.6" fill="rgb(112,112,112)"/><rect x="646.5" y="334.8" width="0.9" height="0.9" fill="rgb(114,114,114)"/><rect x="648.7" y="340.4" width="0.9" height="0.9" fill="rgb(32,32,32)"/><rect x="653.1" y="334.9" width="0.9" height="0.9" fill="rgb(13,13,13)"/><rect x="648.0" y="330.3" width="0.8" height="0.8" fill="rgb(116,116,116)"/><rect x="649.6" y="334.7" width="0.9" height="0.9" fill="rgb(128,128,128)"/><rect x="645.8" y="338.7" width="0.8" height="0.8" fill="rgb(118,118,118)"/><rect x="646.0" y="334.3" width="0.6" height="0.6" fill="rgb(75,75,75)"/><rect x="651.1" y="338.7" width="0.9" height="0.9" fill="rgb(33,33,33)"/><rect x="646.2" y="331.2" width="0.6" height="0.6" fill="rgb(108,108,108)"/><rect x="647.8" y="333.2" width="0.5" height="0.5" fill="rgb(39,39,39)"/><rect x="647.9" y="332.1" width="0.9" height="0.9" fill="rgb(22,22,22)"/><rect x="649.2" y="336.1" width="0.9" height="0.9" fill="rgb(22,22,22)"/><rect x="652.0" y="337.0" width="0.5" height="0.5" fill="rgb(93,93,93)"/><rect x="648.9" y="335.6" width="0.8" height="0.8" fill="rgb(122,122,122)"/><rect x="645.2" y="336.5" width="0.5" height="0.5" fill="rgb(47,47,47)"/><rect x="647.7" y="339.6" width="0.9" height="0.9" fill="rgb(109,109,109)"/><rect x="643.2" y="334.2" width="0.6" height="0.6" fill="rgb(53,53,53)"/><rect x="647.0" y="336.5" width="0.9" height="0.9" fill="rgb(29,29,29)"/>
<circle cx="664.52" cy="335.3" r="5.5" fill="#444"/><rect x="662.9" y="336.3" width="1.4" height="1.4" fill="rgb(217,217,217)"/><rect x="661.3" y="334.9" width="1.4" height="1.4" fill="rgb(248,248,248)"/><rect x="660.4" y="335.7" width="1.4" height="1.4" fill="rgb(176,176,176)"/><rect x="663.9" y="335.5" width="1.1" height="1.1" fill="rgb(230,230,230)"/><rect x="665.3" y="336.9" width="1.5" height="1.5" fill="rgb(200,200,200)"/><rect x="660.0" y="338.0" width="1.4" height="1.4" fill="rgb(189,189,189)"/><rect x="666.7" y="337.5" width="1.3" height="1.3" fill="rgb(246,246,246)"/><rect x="662.9" y="333.0" width="1.1" height="1.1" fill="rgb(180,180,180)"/><rect x="660.9" y="335.6" width="1.4" height="1.4" fill="rgb(245,245,245)"/><rect x="666.5" y="333.2" width="1.5" height="1.5" fill="rgb(164,164,164)"/><rect x="667.4" y="332.7" width="1.4" height="1.4" fill="rgb(193,193,193)"/><rect x="664.0" y="334.6" width="1.4" height="1.4" fill="rgb(236,236,236)"/><rect x="660.5" y="338.5" width="0.9" height="0.9" fill="rgb(229,229,229)"/><rect x="661.4" y="335.4" width="0.9" height="0.9" fill="rgb(234,234,234)"/><rect x="663.7" y="333.9" width="1.5" height="1.5" fill="rgb(173,173,173)"/><rect x="662.0" y="336.6" width="1.2" height="1.2" fill="rgb(243,243,243)"/><rect x="667.8" y="333.5" width="1.0" height="1.0" fill="rgb(161,161,161)"/><rect x="667.0" y="336.1" width="1.2" height="1.2" fill="rgb(196,196,196)"/><rect x="666.7" y="334.5" width="1.0" height="1.0" fill="rgb(193,193,193)"/><rect x="666.6" y="339.7" width="1.2" height="1.2" fill="rgb(206,206,206)"/><rect x="662.5" y="335.6" width="1.0" height="1.0" fill="rgb(201,201,201)"/><rect x="658.4" y="336.7" width="1.2" height="1.2" fill="rgb(171,171,171)"/><rect x="665.1" y="335.2" width="1.0" height="1.0" fill="rgb(232,232,232)"/><rect x="665.1" y="333.6" width="1.3" height="1.3" fill="rgb(196,196,196)"/><rect x="660.8" y="334.1" width="0.7" height="0.7" fill="rgb(156,156,156)"/><rect x="661.9" y="331.1" width="1.0" height="1.0" fill="rgb(246,246,246)"/><rect x="665.0" y="333.1" width="0.8" height="0.8" fill="rgb(208,208,208)"/><rect x="663.3" y="333.6" width="0.7" height="0.7" fill="rgb(201,201,201)"/><rect x="668.4" y="335.7" width="1.2" height="1.2" fill="rgb(179,179,179)"/><rect x="662.6" y="335.4" width="0.8" height="0.8" fill="rgb(169,169,169)"/><rect x="665.1" y="332.0" width="1.3" height="1.3" fill="rgb(186,186,186)"/><rect x="665.2" y="331.2" width="1.2" height="1.2" fill="rgb(191,191,191)"/><rect x="662.5" y="334.0" width="1.5" height="1.5" fill="rgb(220,220,220)"/><rect x="660.2" y="334.1" width="0.8" height="0.8" fill="rgb(185,185,185)"/><rect x="664.8" y="340.1" width="0.7" height="0.7" fill="rgb(196,196,196)"/><rect x="667.1" y="331.1" width="1.3" height="1.3" fill="rgb(181,181,181)"/><rect x="664.5" y="339.2" width="0.9" height="0.9" fill="rgb(225,225,225)"/><rect x="661.2" y="338.5" width="1.2" height="1.2" fill="rgb(235,235,235)"/><rect x="666.3" y="334.3" width="1.5" height="1.5" fill="rgb(151,151,151)"/><rect x="664.1" y="334.6" width="1.1" height="1.1" fill="rgb(190,190,190)"/><rect x="664.4" y="332.8" width="0.9" height="0.9" fill="rgb(232,232,232)"/><rect x="659.5" y="333.3" width="1.1" height="1.1" fill="rgb(153,153,153)"/><rect x="664.2" y="333.3" width="1.1" height="1.1" fill="rgb(150,150,150)"/><rect x="663.6" y="338.8" width="1.3" height="1.3" fill="rgb(216,216,216)"/><rect x="659.7" y="336.3" width="1.2" height="1.2" fill="rgb(171,171,171)"/><rect x="660.2" y="333.8" width="1.3" height="1.3" fill="rgb(170,170,170)"/><rect x="663.3" y="337.0" width="0.8" height="0.8" fill="rgb(186,186,186)"/><rect x="663.6" y="331.2" width="0.8" height="0.8" fill="rgb(226,226,226)"/><rect x="667.6" y="338.0" width="0.8" height="0.8" fill="rgb(160,160,160)"/><rect x="664.0" y="338.1" width="0.9" height="0.9" fill="rgb(242,242,242)"/><rect x="665.7" y="333.9" width="1.3" height="1.3" fill="rgb(223,223,223)"/><rect x="662.2" y="333.9" width="1.5" height="1.5" fill="rgb(250,250,250)"/><rect x="666.2" y="335.0" width="1.0" height="1.0" fill="rgb(170,170,170)"/><rect x="659.2" y="337.3" width="0.7" height="0.7" fill="rgb(237,237,237)"/><rect x="663.8" y="334.7" width="1.4" height="1.4" fill="rgb(178,178,178)"/><rect x="664.2" y="335.6" width="1.0" height="1.0" fill="rgb(162,162,162)"/><rect x="664.7" y="336.3" width="1.2" height="1.2" fill="rgb(196,196,196)"/><rect x="662.7" y="337.8" width="1.3" height="1.3" fill="rgb(226,226,226)"/><rect x="660.8" y="339.3" width="1.3" height="1.3" fill="rgb(208,208,208)"/><rect x="661.9" y="335.2" width="0.8" height="0.8" fill="rgb(242,242,242)"/><rect x="663.2" y="334.1" width="1.4" height="1.4" fill="rgb(243,243,243)"/><rect x="668.3" y="335.8" width="0.9" height="0.9" fill="rgb(206,206,206)"/><rect x="665.1" y="332.7" width="1.1" height="1.1" fill="rgb(219,219,219)"/><rect x="665.4" y="338.5" width="1.0" height="1.0" fill="rgb(253,253,253)"/><rect x="665.8" y="339.0" width="0.7" height="0.7" fill="rgb(178,178,178)"/><rect x="664.8" y="335.5" width="1.1" height="1.1" fill="rgb(168,168,168)"/><rect x="664.1" y="334.0" width="1.2" height="1.2" fill="rgb(240,240,240)"/><rect x="664.9" y="335.7" width="1.3" height="1.3" fill="rgb(199,199,199)"/><rect x="666.1" y="333.9" width="1.0" height="1.0" fill="rgb(250,250,250)"/><rect x="660.6" y="339.4" width="1.4" height="1.4" fill="rgb(171,171,171)"/>
<rect x="675.4" y="333.4" width="0.6" height="0.6" fill="rgb(148,148,148)"/><rect x="681.4" y="330.1" width="0.9" height="0.9" fill="rgb(43,43,43)"/><rect x="681.6" y="334.5" width="1.0" height="1.0" fill="rgb(131,131,131)"/><rect x="678.9" y="338.9" width="0.8" height="0.8" fill="rgb(135,135,135)"/><rect x="686.2" y="336.4" width="0.8" height="0.8" fill="rgb(142,142,142)"/><rect x="675.8" y="335.8" width="0.7" height="0.7" fill="rgb(106,106,106)"/><rect x="684.2" y="335.6" width="0.6" height="0.6" fill="rgb(150,150,150)"/><rect x="679.2" y="332.0" width="1.2" height="1.2" fill="rgb(162,162,162)"/><rect x="681.4" y="334.6" width="1.0" height="1.0" fill="rgb(131,131,131)"/><rect x="680.4" y="334.6" width="1.1" height="1.1" fill="rgb(91,91,91)"/><rect x="676.6" y="332.1" width="0.7" height="0.7" fill="rgb(34,34,34)"/><rect x="682.7" y="334.1" width="0.5" height="0.5" fill="rgb(49,49,49)"/><rect x="685.5" y="334.8" width="0.6" height="0.6" fill="rgb(50,50,50)"/><rect x="684.2" y="332.3" width="0.9" height="0.9" fill="rgb(48,48,48)"/><rect x="676.0" y="338.0" width="0.5" height="0.5" fill="rgb(88,88,88)"/><rect x="686.5" y="337.1" width="0.6" height="0.6" fill="rgb(163,163,163)"/><rect x="683.4" y="331.1" width="0.5" height="0.5" fill="rgb(127,127,127)"/><rect x="677.4" y="335.1" width="0.6" height="0.6" fill="rgb(101,101,101)"/><rect x="681.0" y="333.6" width="1.1" height="1.1" fill="rgb(88,88,88)"/><rect x="680.5" y="336.8" width="0.8" height="0.8" fill="rgb(120,120,120)"/><rect x="675.8" y="332.5" width="0.9" height="0.9" fill="rgb(101,101,101)"/><rect x="682.6" y="334.9" width="0.5" height="0.5" fill="rgb(75,75,75)"/><rect x="680.3" y="335.9" width="0.8" height="0.8" fill="rgb(34,34,34)"/><rect x="683.5" y="333.1" width="1.1" height="1.1" fill="rgb(127,127,127)"/><rect x="680.2" y="330.2" width="0.7" height="0.7" fill="rgb(132,132,132)"/><rect x="681.7" y="338.4" width="0.9" height="0.9" fill="rgb(138,138,138)"/><rect x="681.9" y="337.0" width="1.1" height="1.1" fill="rgb(142,142,142)"/><rect x="681.9" y="334.8" width="0.6" height="0.6" fill="rgb(44,44,44)"/><rect x="679.9" y="330.1" width="1.0" height="1.0" fill="rgb(139,139,139)"/><rect x="676.8" y="334.3" width="1.1" height="1.1" fill="rgb(120,120,120)"/><rect x="678.5" y="331.6" width="0.8" height="0.8" fill="rgb(135,135,135)"/><rect x="679.7" y="334.4" width="0.8" height="0.8" fill="rgb(88,88,88)"/><rect x="677.3" y="336.5" width="0.8" height="0.8" fill="rgb(84,84,84)"/><rect x="678.1" y="335.9" width="1.2" height="1.2" fill="rgb(42,42,42)"/><rect x="685.3" y="335.4" width="0.8" height="0.8" fill="rgb(92,92,92)"/><rect x="678.6" y="333.5" width="0.7" height="0.7" fill="rgb(32,32,32)"/><rect x="684.8" y="330.9" width="0.7" height="0.7" fill="rgb(95,95,95)"/><rect x="680.3" y="335.3" width="1.1" height="1.1" fill="rgb(147,147,147)"/><rect x="680.8" y="336.8" width="1.0" height="1.0" fill="rgb(141,141,141)"/><rect x="678.0" y="335.5" width="0.7" height="0.7" fill="rgb(141,141,141)"/><rect x="684.3" y="331.0" width="0.6" height="0.6" fill="rgb(113,113,113)"/><rect x="685.3" y="334.5" width="0.8" height="0.8" fill="rgb(50,50,50)"/><rect x="685.2" y="336.8" width="0.5" height="0.5" fill="rgb(143,143,143)"/><rect x="678.9" y="331.9" width="1.1" height="1.1" fill="rgb(160,160,160)"/><rect x="680.0" y="334.2" width="0.9" height="0.9" fill="rgb(88,88,88)"/><rect x="680.6" y="340.4" width="1.0" height="1.0" fill="rgb(47,47,47)"/><rect x="681.0" y="337.4" width="0.9" height="0.9" fill="rgb(75,75,75)"/><rect x="676.1" y="336.9" width="0.6" height="0.6" fill="rgb(130,130,130)"/><rect x="677.8" y="339.7" width="1.2" height="1.2" fill="rgb(75,75,75)"/><rect x="679.9" y="334.3" width="0.8" height="0.8" fill="rgb(117,117,117)"/><rect x="679.2" y="333.1" width="0.5" height="0.5" fill="rgb(47,47,47)"/><rect x="679.4" y="334.4" width="0.7" height="0.7" fill="rgb(116,116,116)"/><rect x="683.7" y="332.9" width="0.7" height="0.7" fill="rgb(112,112,112)"/><rect x="680.0" y="339.9" width="0.6" height="0.6" fill="rgb(66,66,66)"/><rect x="675.7" y="337.1" width="0.6" height="0.6" fill="rgb(56,56,56)"/>
<rect x="565.3" y="352.4" width="0.7" height="0.7" fill="rgb(91,91,91)"/><rect x="564.6" y="349.0" width="0.7" height="0.7" fill="rgb(91,91,91)"/><rect x="565.3" y="346.1" width="0.7" height="0.7" fill="rgb(159,159,159)"/><rect x="564.4" y="357.3" width="0.8" height="0.8" fill="rgb(128,128,128)"/><rect x="563.3" y="352.6" width="0.6" height="0.6" fill="rgb(155,155,155)"/><rect x="561.8" y="354.7" width="0.7" height="0.7" fill="rgb(108,108,108)"/><rect x="564.8" y="352.5" width="0.7" height="0.7" fill="rgb(128,128,128)"/><rect x="564.4" y="351.4" width="0.9" height="0.9" fill="rgb(96,96,96)"/><rect x="565.9" y="352.2" width="0.6" height="0.6" fill="rgb(146,146,146)"/><rect x="562.6" y="350.9" width="0.6" height="0.6" fill="rgb(77,77,77)"/><rect x="564.0" y="353.4" width="0.9" height="0.9" fill="rgb(142,142,142)"/><rect x="562.7" y="346.4" width="0.8" height="0.8" fill="rgb(54,54,54)"/><rect x="565.4" y="351.8" width="0.6" height="0.6" fill="rgb(108,108,108)"/><rect x="566.0" y="348.3" width="0.7" height="0.7" fill="rgb(71,71,71)"/><rect x="569.0" y="350.9" width="0.7" height="0.7" fill="rgb(45,45,45)"/><rect x="565.9" y="351.2" width="0.9" height="0.9" fill="rgb(55,55,55)"/><rect x="563.1" y="349.6" width="0.9" height="0.9" fill="rgb(78,78,78)"/><rect x="565.3" y="352.1" width="0.9" height="0.9" fill="rgb(167,167,167)"/><rect x="561.9" y="348.3" width="0.6" height="0.6" fill="rgb(75,75,75)"/><rect x="569.6" y="354.6" width="0.5" height="0.5" fill="rgb(119,119,119)"/><rect x="563.8" y="352.3" width="0.7" height="0.7" fill="rgb(160,160,160)"/><rect x="564.4" y="352.4" width="0.8" height="0.8" fill="rgb(125,125,125)"/><rect x="563.3" y="351.3" width="0.9" height="0.9" fill="rgb(54,54,54)"/><rect x="565.1" y="352.7" width="0.8" height="0.8" fill="rgb(101,101,101)"/><rect x="560.2" y="349.9" width="0.9" height="0.9" fill="rgb(100,100,100)"/><rect x="569.4" y="352.8" width="0.5" height="0.5" fill="rgb(81,81,81)"/><rect x="566.6" y="354.2" width="0.9" height="0.9" fill="rgb(56,56,56)"/><rect x="563.0" y="356.3" width="0.8" height="0.8" fill="rgb(54,54,54)"/><rect x="562.6" y="347.1" width="0.7" height="0.7" fill="rgb(60,60,60)"/><rect x="563.5" y="349.9" width="0.6" height="0.6" fill="rgb(61,61,61)"/><rect x="563.8" y="351.9" width="0.7" height="0.7" fill="rgb(111,111,111)"/><rect x="562.1" y="350.6" width="0.9" height="0.9" fill="rgb(51,51,51)"/><rect x="561.6" y="356.2" width="0.9" height="0.9" fill="rgb(159,159,159)"/><rect x="564.7" y="348.2" width="0.9" height="0.9" fill="rgb(114,114,114)"/><rect x="565.7" y="352.6" width="0.5" height="0.5" fill="rgb(153,153,153)"/><rect x="563.3" y="353.6" width="0.8" height="0.8" fill="rgb(53,53,53)"/><rect x="563.0" y="346.8" width="0.9" height="0.9" fill="rgb(154,154,154)"/><rect x="564.0" y="352.2" width="0.9" height="0.9" fill="rgb(130,130,130)"/><rect x="563.1" y="353.0" width="0.6" height="0.6" fill="rgb(148,148,148)"/><rect x="559.7" y="352.7" width="0.7" height="0.7" fill="rgb(81,81,81)"/><rect x="559.9" y="351.0" width="0.9" height="0.9" fill="rgb(85,85,85)"/><rect x="563.5" y="349.1" width="0.9" height="0.9" fill="rgb(138,138,138)"/><rect x="562.4" y="350.7" width="0.6" height="0.6" fill="rgb(155,155,155)"/><rect x="565.1" y="349.8" width="0.5" height="0.5" fill="rgb(65,65,65)"/><rect x="564.6" y="351.3" width="0.9" height="0.9" fill="rgb(108,108,108)"/>
<rect x="580.0" y="350.5" width="0.8" height="0.8" fill="rgb(55,55,55)"/><rect x="582.6" y="353.8" width="0.6" height="0.6" fill="rgb(13,13,13)"/><rect x="580.3" y="348.5" width="1.1" height="1.1" fill="rgb(69,69,69)"/><rect x="581.3" y="351.4" width="0.5" height="0.5" fill="rgb(23,23,23)"/><rect x="581.1" y="350.4" width="0.9" height="0.9" fill="rgb(77,77,77)"/><rect x="581.5" y="353.5" width="1.1" height="1.1" fill="rgb(74,74,74)"/><rect x="580.3" y="352.9" width="0.7" height="0.7" fill="rgb(96,96,96)"/><rect x="581.3" y="348.2" width="0.7" height="0.7" fill="rgb(73,73,73)"/><rect x="579.5" y="351.7" width="0.8" height="0.8" fill="rgb(88,88,88)"/><rect x="580.6" y="349.2" width="0.9" height="0.9" fill="rgb(80,80,80)"/><rect x="579.5" y="350.8" width="0.5" height="0.5" fill="rgb(89,89,89)"/><rect x="580.6" y="348.8" width="1.1" height="1.1" fill="rgb(14,14,14)"/><rect x="580.2" y="354.2" width="1.1" height="1.1" fill="rgb(37,37,37)"/><rect x="582.4" y="351.4" width="0.5" height="0.5" fill="rgb(12,12,12)"/><rect x="582.1" y="352.8" width="0.7" height="0.7" fill="rgb(26,26,26)"/><rect x="580.6" y="351.4" width="1.1" height="1.1" fill="rgb(83,83,83)"/><rect x="580.2" y="350.6" width="0.7" height="0.7" fill="rgb(60,60,60)"/><rect x="579.8" y="354.8" width="1.2" height="1.2" fill="rgb(72,72,72)"/><rect x="581.2" y="351.0" width="0.6" height="0.6" fill="rgb(34,34,34)"/><rect x="581.5" y="352.8" width="1.2" height="1.2" fill="rgb(83,83,83)"/><rect x="581.6" y="351.1" width="0.7" height="0.7" fill="rgb(2,2,2)"/><rect x="581.0" y="351.8" width="0.9" height="0.9" fill="rgb(30,30,30)"/>
<rect x="597.1" y="349.1" width="0.9" height="0.9" fill="rgb(29,29,29)"/><rect x="597.4" y="348.3" width="1.0" height="1.0" fill="rgb(47,47,47)"/><rect x="597.2" y="351.9" width="0.5" height="0.5" fill="rgb(46,46,46)"/><rect x="597.2" y="350.6" width="1.1" height="1.1" fill="rgb(87,87,87)"/><rect x="598.4" y="348.7" width="0.8" height="0.8" fill="rgb(17,17,17)"/><rect x="597.3" y="354.3" width="1.2" height="1.2" fill="rgb(11,11,11)"/><rect x="598.3" y="351.5" width="0.7" height="0.7" fill="rgb(59,59,59)"/><rect x="598.7" y="353.7" width="0.7" height="0.7" fill="rgb(90,90,90)"/><rect x="597.5" y="352.8" width="0.6" height="0.6" fill="rgb(96,96,96)"/><rect x="596.7" y="349.7" width="0.5" height="0.5" fill="rgb(54,54,54)"/><rect x="597.3" y="347.3" width="1.2" height="1.2" fill="rgb(10,10,10)"/><rect x="596.6" y="354.2" width="0.9" height="0.9" fill="rgb(95,95,95)"/><rect x="597.5" y="351.4" width="1.2" height="1.2" fill="rgb(26,26,26)"/><rect x="597.0" y="350.7" width="0.9" height="0.9" fill="rgb(93,93,93)"/><rect x="599.0" y="350.3" width="0.7" height="0.7" fill="rgb(82,82,82)"/><rect x="598.2" y="351.4" width="1.2" height="1.2" fill="rgb(25,25,25)"/><rect x="597.1" y="353.4" width="0.7" height="0.7" fill="rgb(70,70,70)"/><rect x="597.3" y="350.7" width="1.1" height="1.1" fill="rgb(7,7,7)"/>
<g transform="rotate(35 614.66 351.8)"><rect x="608.16" y="347.8" width="13" height="0.8" fill="#333"/><rect x="608.16" y="349.4" width="13" height="0.8" fill="#333"/><rect x="608.16" y="351.0" width="13" height="0.8" fill="#333"/><rect x="608.16" y="352.6" width="13" height="0.8" fill="#333"/><rect x="608.16" y="354.2" width="13" height="0.8" fill="#333"/><rect x="608.16" y="355.8" width="13" height="0.8" fill="#333"/><rect x="611.66" y="347.3" width="0.6" height="9" fill="#444"/><rect x="615.66" y="347.3" width="0.6" height="9" fill="#444"/></g>
<rect x="630.88" y="351.40000000000003" width="0.8" height="0.8" fill="#999"/>
<g transform="rotate(25 647.9 351.8)"><rect x="640.9" y="345.8" width="14" height="1.7" fill="#555"/><rect x="640.9" y="349.0" width="14" height="1.7" fill="#555"/><rect x="640.9" y="352.2" width="14" height="1.7" fill="#555"/><rect x="640.9" y="355.4" width="14" height="1.7" fill="#555"/></g>
<circle cx="664.52" cy="351.8" r="5.8" fill="url(#cg)"/><rect x="663.3" y="348.8" width="0.6" height="0.6" fill="rgb(48,48,48)"/><rect x="669.3" y="351.3" width="0.8" height="0.8" fill="rgb(127,127,127)"/><rect x="669.7" y="350.3" width="0.8" height="0.8" fill="rgb(70,70,70)"/><rect x="658.2" y="350.6" width="0.9" height="0.9" fill="rgb(113,113,113)"/><rect x="665.9" y="348.7" width="0.8" height="0.8" fill="rgb(133,133,133)"/><rect x="666.0" y="356.7" width="0.5" height="0.5" fill="rgb(99,99,99)"/><rect x="662.6" y="350.6" width="1.1" height="1.1" fill="rgb(88,88,88)"/><rect x="665.4" y="354.3" width="0.9" height="0.9" fill="rgb(87,87,87)"/><rect x="665.2" y="351.4" width="0.9" height="0.9" fill="rgb(54,54,54)"/><rect x="663.8" y="356.5" width="1.0" height="1.0" fill="rgb(136,136,136)"/><rect x="664.1" y="351.5" width="1.0" height="1.0" fill="rgb(105,105,105)"/><rect x="663.9" y="351.7" width="0.8" height="0.8" fill="rgb(66,66,66)"/><rect x="659.2" y="348.4" width="0.6" height="0.6" fill="rgb(48,48,48)"/><rect x="663.8" y="350.3" width="0.6" height="0.6" fill="rgb(88,88,88)"/><rect x="666.9" y="351.2" width="0.7" height="0.7" fill="rgb(92,92,92)"/><rect x="665.7" y="354.0" width="0.9" height="0.9" fill="rgb(75,75,75)"/><rect x="664.8" y="349.8" width="0.6" height="0.6" fill="rgb(108,108,108)"/><rect x="658.8" y="353.2" width="0.6" height="0.6" fill="rgb(122,122,122)"/><rect x="662.8" y="348.9" width="0.6" height="0.6" fill="rgb(107,107,107)"/><rect x="664.3" y="347.9" width="0.8" height="0.8" fill="rgb(115,115,115)"/><rect x="661.7" y="349.4" width="0.6" height="0.6" fill="rgb(90,90,90)"/><rect x="658.7" y="349.5" width="1.1" height="1.1" fill="rgb(101,101,101)"/><rect x="663.1" y="353.2" width="0.9" height="0.9" fill="rgb(121,121,121)"/><rect x="664.0" y="355.9" width="1.1" height="1.1" fill="rgb(83,83,83)"/><rect x="667.2" y="350.1" width="0.9" height="0.9" fill="rgb(135,135,135)"/><rect x="664.8" y="354.0" width="1.1" height="1.1" fill="rgb(47,47,47)"/><rect x="662.8" y="354.7" width="0.9" height="0.9" fill="rgb(109,109,109)"/><rect x="668.4" y="349.6" width="0.5" height="0.5" fill="rgb(47,47,47)"/><rect x="667.5" y="352.3" width="0.5" height="0.5" fill="rgb(97,97,97)"/><rect x="662.7" y="349.8" width="1.0" height="1.0" fill="rgb(85,85,85)"/><rect x="666.9" y="350.6" width="0.9" height="0.9" fill="rgb(99,99,99)"/><rect x="663.9" y="356.6" width="0.5" height="0.5" fill="rgb(67,67,67)"/><rect x="661.8" y="356.4" width="0.8" height="0.8" fill="rgb(44,44,44)"/><rect x="662.7" y="355.4" width="1.0" height="1.0" fill="rgb(51,51,51)"/><rect x="664.7" y="348.3" width="0.8" height="0.8" fill="rgb(86,86,86)"/><rect x="658.5" y="353.5" width="1.1" height="1.1" fill="rgb(140,140,140)"/><rect x="663.8" y="346.9" width="0.6" height="0.6" fill="rgb(43,43,43)"/><rect x="666.3" y="347.4" width="0.9" height="0.9" fill="rgb(74,74,74)"/><rect x="663.5" y="357.0" width="0.8" height="0.8" fill="rgb(42,42,42)"/><rect x="662.7" y="353.9" width="0.5" height="0.5" fill="rgb(147,147,147)"/><rect x="668.5" y="348.6" width="0.5" height="0.5" fill="rgb(85,85,85)"/><rect x="667.7" y="354.4" width="1.0" height="1.0" fill="rgb(126,126,126)"/><rect x="664.6" y="350.2" width="0.5" height="0.5" fill="rgb(50,50,50)"/><rect x="667.0" y="347.0" width="0.8" height="0.8" fill="rgb(65,65,65)"/><rect x="665.0" y="350.4" width="0.7" height="0.7" fill="rgb(40,40,40)"/><rect x="667.3" y="351.0" width="1.0" height="1.0" fill="rgb(128,128,128)"/><rect x="658.8" y="348.4" width="1.0" height="1.0" fill="rgb(141,141,141)"/><rect x="665.1" y="351.1" width="1.0" height="1.0" fill="rgb(64,64,64)"/><rect x="662.7" y="353.8" width="1.1" height="1.1" fill="rgb(46,46,46)"/><rect x="662.7" y="351.8" width="1.1" height="1.1" fill="rgb(94,94,94)"/><rect x="662.9" y="347.7" width="1.0" height="1.0" fill="rgb(77,77,77)"/><rect x="659.9" y="353.9" width="0.9" height="0.9" fill="rgb(137,137,137)"/><rect x="662.1" y="356.3" width="0.9" height="0.9" fill="rgb(103,103,103)"/><rect x="660.9" y="353.7" width="0.5" height="0.5" fill="rgb(50,50,50)"/><rect x="663.7" y="352.8" width="0.5" height="0.5" fill="rgb(118,118,118)"/><rect x="663.7" y="347.2" width="0.6" height="0.6" fill="rgb(119,119,119)"/><rect x="666.2" y="347.7" width="0.6" height="0.6" fill="rgb(102,102,102)"/><rect x="662.3" y="353.0" width="0.6" height="0.6" fill="rgb(135,135,135)"/><rect x="660.4" y="347.3" width="0.6" height="0.6" fill="rgb(69,69,69)"/><rect x="663.4" y="351.4" width="0.7" height="0.7" fill="rgb(99,99,99)"/><rect x="658.5" y="352.0" width="0.8" height="0.8" fill="rgb(110,110,110)"/><rect x="659.8" y="348.9" width="0.7" height="0.7" fill="rgb(40,40,40)"/><rect x="669.3" y="350.9" width="0.6" height="0.6" fill="rgb(52,52,52)"/><rect x="665.0" y="355.9" width="0.6" height="0.6" fill="rgb(42,42,42)"/><rect x="664.0" y="351.5" width="0.7" height="0.7" fill="rgb(82,82,82)"/><rect x="664.2" y="351.6" width="0.7" height="0.7" fill="rgb(66,66,66)"/><rect x="662.7" y="354.3" width="0.7" height="0.7" fill="rgb(75,75,75)"/><rect x="669.3" y="352.0" width="0.9" height="0.9" fill="rgb(94,94,94)"/><rect x="666.2" y="351.3" width="1.0" height="1.0" fill="rgb(90,90,90)"/><rect x="665.4" y="356.3" width="1.0" height="1.0" fill="rgb(53,53,53)"/><rect x="660.2" y="351.5" width="0.6" height="0.6" fill="rgb(75,75,75)"/><rect x="660.7" y="348.3" width="0.9" height="0.9" fill="rgb(108,108,108)"/><rect x="663.6" y="352.2" width="0.5" height="0.5" fill="rgb(132,132,132)"/><rect x="667.9" y="347.3" width="0.5" height="0.5" fill="rgb(124,124,124)"/><rect x="665.6" y="354.0" width="0.6" height="0.6" fill="rgb(134,134,134)"/><rect x="666.4" y="346.6" width="0.7" height="0.7" fill="rgb(142,142,142)"/><rect x="663.8" y="355.4" width="0.9" height="0.9" fill="rgb(65,65,65)"/><rect x="663.1" y="352.1" width="1.0" height="1.0" fill="rgb(60,60,60)"/><rect x="665.7" y="353.2" width="0.9" height="0.9" fill="rgb(110,110,110)"/><rect x="658.7" y="350.5" width="1.0" height="1.0" fill="rgb(63,63,63)"/>
<circle cx="681.14" cy="351.8" r="7" fill="url(#sun)"/>
<rect x="563.4" y="367.8" width="0.8" height="0.8" fill="rgb(11,11,11)"/><rect x="566.1" y="368.8" width="1.2" height="1.2" fill="rgb(52,52,52)"/><rect x="565.4" y="368.6" width="1.0" height="1.0" fill="rgb(42,42,42)"/><rect x="564.9" y="368.0" width="1.0" height="1.0" fill="rgb(48,48,48)"/><rect x="568.5" y="370.3" width="0.8" height="0.8" fill="rgb(47,47,47)"/><rect x="562.2" y="367.4" width="1.3" height="1.3" fill="rgb(31,31,31)"/><rect x="561.3" y="369.3" width="1.2" height="1.2" fill="rgb(79,79,79)"/><rect x="564.6" y="364.6" width="1.1" height="1.1" fill="rgb(51,51,51)"/><rect x="569.9" y="366.4" width="1.1" height="1.1" fill="rgb(17,17,17)"/><rect x="562.0" y="366.9" width="0.8" height="0.8" fill="rgb(62,62,62)"/><rect x="565.1" y="372.1" width="0.9" height="0.9" fill="rgb(34,34,34)"/><rect x="563.0" y="363.6" width="1.3" height="1.3" fill="rgb(79,79,79)"/><rect x="564.8" y="366.4" width="1.1" height="1.1" fill="rgb(39,39,39)"/><rect x="566.9" y="367.0" width="0.9" height="0.9" fill="rgb(2,2,2)"/><rect x="561.3" y="368.6" width="0.8" height="0.8" fill="rgb(8,8,8)"/><rect x="564.0" y="368.1" width="0.7" height="0.7" fill="rgb(35,35,35)"/><rect x="562.6" y="370.4" width="1.0" height="1.0" fill="rgb(31,31,31)"/><rect x="564.4" y="368.0" width="1.0" height="1.0" fill="rgb(77,77,77)"/><rect x="564.0" y="370.1" width="0.8" height="0.8" fill="rgb(59,59,59)"/><rect x="559.7" y="368.3" width="0.6" height="0.6" fill="rgb(10,10,10)"/><rect x="565.0" y="370.1" width="0.9" height="0.9" fill="rgb(30,30,30)"/><rect x="566.9" y="367.3" width="1.0" height="1.0" fill="rgb(77,77,77)"/><rect x="562.0" y="365.0" width="1.2" height="1.2" fill="rgb(26,26,26)"/><rect x="569.9" y="369.2" width="1.0" height="1.0" fill="rgb(46,46,46)"/><rect x="568.5" y="369.8" width="0.9" height="0.9" fill="rgb(51,51,51)"/><rect x="563.2" y="373.4" width="0.9" height="0.9" fill="rgb(22,22,22)"/><rect x="565.5" y="367.2" width="0.8" height="0.8" fill="rgb(38,38,38)"/><rect x="565.1" y="367.9" width="0.7" height="0.7" fill="rgb(63,63,63)"/><rect x="566.4" y="369.0" width="1.1" height="1.1" fill="rgb(57,57,57)"/><rect x="564.4" y="367.1" width="1.2" height="1.2" fill="rgb(28,28,28)"/><rect x="565.3" y="365.2" width="1.2" height="1.2" fill="rgb(38,38,38)"/><rect x="564.3" y="368.8" width="0.9" height="0.9" fill="rgb(3,3,3)"/><rect x="567.0" y="372.4" width="1.0" height="1.0" fill="rgb(69,69,69)"/><rect x="566.0" y="370.3" width="0.9" height="0.9" fill="rgb(8,8,8)"/><rect x="563.8" y="373.4" width="1.1" height="1.1" fill="rgb(40,40,40)"/><rect x="560.2" y="364.5" width="1.3" height="1.3" fill="rgb(47,47,47)"/><rect x="569.4" y="369.7" width="0.7" height="0.7" fill="rgb(19,19,19)"/><rect x="566.3" y="370.2" width="1.0" height="1.0" fill="rgb(36,36,36)"/><rect x="563.4" y="368.0" width="1.1" height="1.1" fill="rgb(43,43,43)"/><rect x="562.4" y="372.4" width="1.3" height="1.3" fill="rgb(73,73,73)"/>
<rect x="581.5" y="367.9" width="0.9" height="0.9" fill="rgb(35,35,35)"/><rect x="580.6" y="371.6" width="1.2" height="1.2" fill="rgb(11,11,11)"/><rect x="575.0" y="367.6" width="1.2" height="1.2" fill="rgb(36,36,36)"/><rect x="583.3" y="369.4" width="1.0" height="1.0" fill="rgb(62,62,62)"/><rect x="581.5" y="369.2" width="1.3" height="1.3" fill="rgb(0,0,0)"/><rect x="580.3" y="367.5" width="1.1" height="1.1" fill="rgb(33,33,33)"/><rect x="582.2" y="367.2" width="1.2" height="1.2" fill="rgb(18,18,18)"/><rect x="581.7" y="368.2" width="0.7" height="0.7" fill="rgb(31,31,31)"/><rect x="583.2" y="367.5" width="1.1" height="1.1" fill="rgb(2,2,2)"/><rect x="577.7" y="367.8" width="0.7" height="0.7" fill="rgb(46,46,46)"/><rect x="578.8" y="368.4" width="1.2" height="1.2" fill="rgb(55,55,55)"/><rect x="581.7" y="368.5" width="0.6" height="0.6" fill="rgb(21,21,21)"/><rect x="577.0" y="364.1" width="1.3" height="1.3" fill="rgb(69,69,69)"/><rect x="584.3" y="370.7" width="1.1" height="1.1" fill="rgb(37,37,37)"/><rect x="584.9" y="368.0" width="0.7" height="0.7" fill="rgb(17,17,17)"/><rect x="583.5" y="370.2" width="1.0" height="1.0" fill="rgb(68,68,68)"/><rect x="580.9" y="367.8" width="1.3" height="1.3" fill="rgb(20,20,20)"/><rect x="580.6" y="372.4" width="0.7" height="0.7" fill="rgb(63,63,63)"/><rect x="583.8" y="366.1" width="1.0" height="1.0" fill="rgb(0,0,0)"/><rect x="577.8" y="365.8" width="1.1" height="1.1" fill="rgb(41,41,41)"/><rect x="582.1" y="368.7" width="1.1" height="1.1" fill="rgb(6,6,6)"/><rect x="582.2" y="368.7" width="1.2" height="1.2" fill="rgb(43,43,43)"/><rect x="577.3" y="371.7" width="1.0" height="1.0" fill="rgb(19,19,19)"/><rect x="576.2" y="366.2" width="0.9" height="0.9" fill="rgb(34,34,34)"/><rect x="575.7" y="365.6" width="1.0" height="1.0" fill="rgb(14,14,14)"/><rect x="579.1" y="367.0" width="0.9" height="0.9" fill="rgb(57,57,57)"/><rect x="584.2" y="368.3" width="0.8" height="0.8" fill="rgb(47,47,47)"/><rect x="582.2" y="365.6" width="1.0" height="1.0" fill="rgb(23,23,23)"/><rect x="580.8" y="370.6" width="1.0" height="1.0" fill="rgb(17,17,17)"/><rect x="581.3" y="365.3" width="0.8" height="0.8" fill="rgb(20,20,20)"/><rect x="583.6" y="363.9" width="1.3" height="1.3" fill="rgb(19,19,19)"/><rect x="584.7" y="369.5" width="0.6" height="0.6" fill="rgb(68,68,68)"/><rect x="580.0" y="366.3" width="0.9" height="0.9" fill="rgb(54,54,54)"/><rect x="582.1" y="369.5" width="1.2" height="1.2" fill="rgb(54,54,54)"/><rect x="580.4" y="367.7" width="0.8" height="0.8" fill="rgb(20,20,20)"/><rect x="584.9" y="368.6" width="1.0" height="1.0" fill="rgb(73,73,73)"/><rect x="575.7" y="366.4" width="0.9" height="0.9" fill="rgb(41,41,41)"/><rect x="580.2" y="370.2" width="1.3" height="1.3" fill="rgb(39,39,39)"/><rect x="583.4" y="368.1" width="0.7" height="0.7" fill="rgb(49,49,49)"/><rect x="577.7" y="367.6" width="1.2" height="1.2" fill="rgb(60,60,60)"/><rect x="581.1" y="368.0" width="1.1" height="1.1" fill="rgb(47,47,47)"/><rect x="579.3" y="365.9" width="0.6" height="0.6" fill="rgb(36,36,36)"/><rect x="583.0" y="365.4" width="0.6" height="0.6" fill="rgb(9,9,9)"/><rect x="583.9" y="366.4" width="0.7" height="0.7" fill="rgb(56,56,56)"/><rect x="585.6" y="365.9" width="1.1" height="1.1" fill="rgb(64,64,64)"/>
<rect x="600.6" y="369.8" width="0.8" height="0.8" fill="rgb(51,51,51)"/><rect x="601.2" y="372.6" width="0.8" height="0.8" fill="rgb(1,1,1)"/><rect x="601.4" y="369.5" width="0.9" height="0.9" fill="rgb(92,92,92)"/><rect x="598.5" y="367.3" width="0.7" height="0.7" fill="rgb(27,27,27)"/><rect x="597.0" y="369.3" width="0.6" height="0.6" fill="rgb(6,6,6)"/><rect x="595.1" y="364.2" width="0.9" height="0.9" fill="rgb(115,115,115)"/><rect x="602.9" y="370.7" width="0.7" height="0.7" fill="rgb(140,140,140)"/><rect x="596.8" y="368.1" width="0.8" height="0.8" fill="rgb(25,25,25)"/><rect x="601.6" y="367.6" width="0.9" height="0.9" fill="rgb(73,73,73)"/><rect x="595.5" y="372.2" width="0.8" height="0.8" fill="rgb(69,69,69)"/><rect x="597.1" y="371.2" width="0.8" height="0.8" fill="rgb(34,34,34)"/><rect x="599.7" y="371.1" width="0.7" height="0.7" fill="rgb(10,10,10)"/><rect x="596.9" y="374.4" width="0.5" height="0.5" fill="rgb(115,115,115)"/><rect x="597.4" y="368.9" width="0.6" height="0.6" fill="rgb(130,130,130)"/><rect x="597.8" y="367.5" width="0.8" height="0.8" fill="rgb(93,93,93)"/><rect x="593.1" y="368.6" width="0.7" height="0.7" fill="rgb(27,27,27)"/><rect x="597.3" y="366.9" width="0.6" height="0.6" fill="rgb(127,127,127)"/><rect x="594.2" y="366.4" width="0.8" height="0.8" fill="rgb(73,73,73)"/><rect x="594.8" y="370.9" width="0.4" height="0.4" fill="rgb(52,52,52)"/><rect x="603.9" y="369.6" width="0.9" height="0.9" fill="rgb(98,98,98)"/><rect x="600.9" y="372.9" width="0.5" height="0.5" fill="rgb(120,120,120)"/><rect x="595.1" y="364.5" width="0.8" height="0.8" fill="rgb(40,40,40)"/><rect x="599.7" y="364.6" width="0.8" height="0.8" fill="rgb(125,125,125)"/><rect x="597.7" y="371.3" width="0.6" height="0.6" fill="rgb(11,11,11)"/><rect x="601.1" y="364.7" width="0.6" height="0.6" fill="rgb(81,81,81)"/><rect x="598.3" y="367.6" width="0.6" height="0.6" fill="rgb(102,102,102)"/><rect x="594.1" y="367.3" width="0.5" height="0.5" fill="rgb(33,33,33)"/><rect x="596.3" y="365.6" width="0.9" height="0.9" fill="rgb(135,135,135)"/><rect x="600.0" y="367.6" width="0.7" height="0.7" fill="rgb(15,15,15)"/><rect x="597.2" y="368.7" width="0.7" height="0.7" fill="rgb(143,143,143)"/><rect x="598.0" y="365.2" width="0.5" height="0.5" fill="rgb(139,139,139)"/><rect x="603.0" y="369.8" width="0.8" height="0.8" fill="rgb(10,10,10)"/><rect x="602.1" y="366.7" width="0.6" height="0.6" fill="rgb(63,63,63)"/><rect x="594.6" y="365.5" width="0.8" height="0.8" fill="rgb(134,134,134)"/><rect x="597.6" y="368.1" width="0.8" height="0.8" fill="rgb(97,97,97)"/><rect x="597.4" y="367.5" width="0.4" height="0.4" fill="rgb(134,134,134)"/><rect x="595.3" y="370.7" width="0.9" height="0.9" fill="rgb(29,29,29)"/><rect x="597.2" y="367.5" width="0.7" height="0.7" fill="rgb(110,110,110)"/><rect x="600.5" y="372.3" width="0.9" height="0.9" fill="rgb(123,123,123)"/><rect x="599.2" y="362.0" width="0.8" height="0.8" fill="rgb(82,82,82)"/><rect x="600.1" y="363.2" width="0.7" height="0.7" fill="rgb(100,100,100)"/><rect x="598.9" y="370.6" width="0.6" height="0.6" fill="rgb(128,128,128)"/><rect x="598.1" y="365.6" width="0.9" height="0.9" fill="rgb(8,8,8)"/><rect x="600.3" y="369.2" width="0.4" height="0.4" fill="rgb(142,142,142)"/><rect x="595.7" y="370.4" width="0.8" height="0.8" fill="rgb(79,79,79)"/><rect x="595.4" y="365.6" width="0.6" height="0.6" fill="rgb(143,143,143)"/><rect x="597.1" y="371.9" width="0.6" height="0.6" fill="rgb(21,21,21)"/><rect x="599.9" y="371.0" width="0.8" height="0.8" fill="rgb(64,64,64)"/><rect x="603.5" y="370.4" width="0.5" height="0.5" fill="rgb(132,132,132)"/><rect x="602.2" y="369.5" width="0.5" height="0.5" fill="rgb(39,39,39)"/><rect x="593.2" y="370.5" width="0.6" height="0.6" fill="rgb(62,62,62)"/><rect x="594.6" y="370.4" width="0.5" height="0.5" fill="rgb(142,142,142)"/><rect x="598.2" y="369.3" width="0.7" height="0.7" fill="rgb(52,52,52)"/><rect x="597.6" y="367.5" width="0.7" height="0.7" fill="rgb(54,54,54)"/><rect x="600.0" y="367.0" width="0.6" height="0.6" fill="rgb(47,47,47)"/><rect x="595.4" y="367.5" width="0.7" height="0.7" fill="rgb(61,61,61)"/><rect x="597.1" y="365.7" width="0.6" height="0.6" fill="rgb(83,83,83)"/><rect x="596.8" y="363.6" width="0.6" height="0.6" fill="rgb(12,12,12)"/><rect x="598.9" y="369.1" width="0.5" height="0.5" fill="rgb(27,27,27)"/><rect x="596.2" y="365.6" width="0.9" height="0.9" fill="rgb(35,35,35)"/><rect x="597.8" y="369.8" width="0.5" height="0.5" fill="rgb(102,102,102)"/><rect x="595.7" y="367.0" width="0.8" height="0.8" fill="rgb(101,101,101)"/><rect x="593.7" y="369.9" width="0.7" height="0.7" fill="rgb(66,66,66)"/><rect x="600.0" y="369.5" width="0.9" height="0.9" fill="rgb(56,56,56)"/><rect x="597.0" y="367.3" width="0.8" height="0.8" fill="rgb(129,129,129)"/><rect x="595.7" y="370.2" width="0.7" height="0.7" fill="rgb(37,37,37)"/><rect x="598.0" y="369.2" width="0.7" height="0.7" fill="rgb(76,76,76)"/><rect x="603.7" y="366.3" width="0.8" height="0.8" fill="rgb(141,141,141)"/><rect x="598.0" y="367.9" width="0.5" height="0.5" fill="rgb(146,146,146)"/><rect x="600.8" y="364.9" width="0.7" height="0.7" fill="rgb(65,65,65)"/><rect x="596.5" y="368.7" width="0.7" height="0.7" fill="rgb(41,41,41)"/><rect x="601.9" y="372.1" width="0.7" height="0.7" fill="rgb(131,131,131)"/><rect x="596.6" y="372.2" width="0.5" height="0.5" fill="rgb(124,124,124)"/><rect x="598.9" y="372.5" width="0.7" height="0.7" fill="rgb(48,48,48)"/><rect x="600.9" y="369.8" width="0.7" height="0.7" fill="rgb(122,122,122)"/><rect x="598.3" y="369.7" width="0.6" height="0.6" fill="rgb(120,120,120)"/><rect x="598.3" y="372.7" width="0.4" height="0.4" fill="rgb(12,12,12)"/><rect x="596.8" y="364.6" width="0.5" height="0.5" fill="rgb(70,70,70)"/><rect x="600.6" y="366.9" width="0.7" height="0.7" fill="rgb(63,63,63)"/><rect x="597.1" y="368.0" width="0.8" height="0.8" fill="rgb(86,86,86)"/><rect x="596.4" y="370.1" width="0.5" height="0.5" fill="rgb(140,140,140)"/><rect x="599.3" y="365.5" width="0.7" height="0.7" fill="rgb(82,82,82)"/><rect x="597.8" y="368.4" width="0.8" height="0.8" fill="rgb(24,24,24)"/><rect x="597.6" y="368.1" width="0.4" height="0.4" fill="rgb(24,24,24)"/><rect x="595.1" y="364.3" width="0.9" height="0.9" fill="rgb(99,99,99)"/><rect x="597.4" y="367.9" width="0.9" height="0.9" fill="rgb(73,73,73)"/><rect x="598.0" y="367.6" width="0.8" height="0.8" fill="rgb(71,71,71)"/><rect x="598.5" y="371.3" width="0.4" height="0.4" fill="rgb(87,87,87)"/><rect x="598.7" y="373.0" width="0.5" height="0.5" fill="rgb(103,103,103)"/><rect x="593.9" y="364.6" width="0.9" height="0.9" fill="rgb(44,44,44)"/><rect x="596.3" y="365.1" width="0.8" height="0.8" fill="rgb(123,123,123)"/><rect x="598.1" y="363.8" width="0.5" height="0.5" fill="rgb(136,136,136)"/><rect x="603.9" y="366.9" width="0.6" height="0.6" fill="rgb(123,123,123)"/><rect x="595.2" y="362.9" width="0.8" height="0.8" fill="rgb(68,68,68)"/><rect x="593.4" y="371.3" width="0.7" height="0.7" fill="rgb(80,80,80)"/><rect x="598.1" y="367.9" width="0.4" height="0.4" fill="rgb(69,69,69)"/><rect x="602.5" y="371.4" width="0.4" height="0.4" fill="rgb(132,132,132)"/><rect x="597.9" y="369.3" width="0.8" height="0.8" fill="rgb(101,101,101)"/><rect x="594.1" y="370.4" width="0.7" height="0.7" fill="rgb(142,142,142)"/><rect x="593.8" y="367.9" width="0.6" height="0.6" fill="rgb(61,61,61)"/><rect x="597.3" y="367.0" width="0.7" height="0.7" fill="rgb(139,139,139)"/><rect x="598.0" y="364.1" width="0.6" height="0.6" fill="rgb(14,14,14)"/><rect x="600.9" y="370.2" width="0.8" height="0.8" fill="rgb(129,129,129)"/><rect x="599.7" y="372.7" width="0.8" height="0.8" fill="rgb(71,71,71)"/><rect x="598.8" y="366.8" width="0.6" height="0.6" fill="rgb(77,77,77)"/><rect x="597.3" y="364.7" width="0.6" height="0.6" fill="rgb(130,130,130)"/><rect x="595.3" y="370.2" width="0.5" height="0.5" fill="rgb(72,72,72)"/><rect x="596.9" y="365.3" width="0.7" height="0.7" fill="rgb(73,73,73)"/><rect x="604.1" y="368.6" width="0.5" height="0.5" fill="rgb(81,81,81)"/><rect x="599.6" y="367.7" width="0.4" height="0.4" fill="rgb(30,30,30)"/><rect x="601.0" y="372.8" width="0.7" height="0.7" fill="rgb(6,6,6)"/><rect x="597.3" y="371.9" width="0.5" height="0.5" fill="rgb(45,45,45)"/><rect x="600.6" y="366.2" width="0.5" height="0.5" fill="rgb(89,89,89)"/><rect x="600.6" y="370.5" width="0.7" height="0.7" fill="rgb(13,13,13)"/><rect x="595.2" y="367.3" width="0.8" height="0.8" fill="rgb(92,92,92)"/><rect x="601.5" y="365.8" width="0.5" height="0.5" fill="rgb(27,27,27)"/><rect x="596.2" y="362.9" width="0.4" height="0.4" fill="rgb(62,62,62)"/><rect x="596.9" y="371.4" width="0.8" height="0.8" fill="rgb(83,83,83)"/><rect x="597.6" y="362.9" width="0.5" height="0.5" fill="rgb(92,92,92)"/><rect x="595.2" y="370.6" width="0.7" height="0.7" fill="rgb(100,100,100)"/><rect x="600.6" y="373.1" width="0.5" height="0.5" fill="rgb(46,46,46)"/><rect x="601.5" y="362.9" width="0.6" height="0.6" fill="rgb(142,142,142)"/><rect x="603.9" y="369.6" width="0.5" height="0.5" fill="rgb(5,5,5)"/><rect x="597.8" y="366.5" width="0.8" height="0.8" fill="rgb(1,1,1)"/><rect x="599.9" y="370.2" width="0.4" height="0.4" fill="rgb(70,70,70)"/><rect x="594.8" y="372.3" width="0.6" height="0.6" fill="rgb(144,144,144)"/><rect x="598.5" y="366.7" width="0.9" height="0.9" fill="rgb(134,134,134)"/><rect x="594.2" y="366.6" width="0.5" height="0.5" fill="rgb(48,48,48)"/><rect x="598.0" y="369.8" width="0.7" height="0.7" fill="rgb(48,48,48)"/><rect x="598.1" y="363.9" width="0.8" height="0.8" fill="rgb(13,13,13)"/><rect x="599.8" y="364.9" width="0.7" height="0.7" fill="rgb(35,35,35)"/><rect x="596.6" y="365.0" width="0.8" height="0.8" fill="rgb(87,87,87)"/><rect x="599.2" y="369.9" width="0.8" height="0.8" fill="rgb(2,2,2)"/><rect x="595.0" y="365.1" width="0.8" height="0.8" fill="rgb(49,49,49)"/><rect x="594.1" y="368.5" width="0.8" height="0.8" fill="rgb(10,10,10)"/><rect x="595.5" y="367.9" width="0.7" height="0.7" fill="rgb(38,38,38)"/><rect x="598.2" y="369.9" width="0.8" height="0.8" fill="rgb(54,54,54)"/><rect x="601.5" y="364.7" width="0.5" height="0.5" fill="rgb(83,83,83)"/><rect x="603.8" y="368.4" width="0.7" height="0.7" fill="rgb(16,16,16)"/><rect x="594.0" y="367.6" width="0.7" height="0.7" fill="rgb(43,43,43)"/><rect x="601.6" y="365.8" width="0.4" height="0.4" fill="rgb(122,122,122)"/><rect x="599.5" y="366.4" width="0.8" height="0.8" fill="rgb(129,129,129)"/><rect x="598.2" y="367.5" width="0.8" height="0.8" fill="rgb(37,37,37)"/><rect x="599.3" y="363.5" width="0.6" height="0.6" fill="rgb(135,135,135)"/><rect x="599.7" y="361.8" width="0.9" height="0.9" fill="rgb(85,85,85)"/><rect x="597.3" y="363.4" width="0.6" height="0.6" fill="rgb(74,74,74)"/><rect x="595.9" y="368.0" width="0.5" height="0.5" fill="rgb(126,126,126)"/><rect x="600.4" y="364.0" width="0.7" height="0.7" fill="rgb(76,76,76)"/><rect x="593.6" y="366.1" width="0.4" height="0.4" fill="rgb(66,66,66)"/><rect x="599.5" y="367.7" width="0.6" height="0.6" fill="rgb(11,11,11)"/>
<circle cx="614.66" cy="368.4" r="5.5" fill="url(#cg)"/><rect x="614.3" y="373.9" width="0.4" height="0.4" fill="rgb(111,111,111)"/><rect x="616.1" y="362.5" width="0.5" height="0.5" fill="rgb(130,130,130)"/><rect x="611.6" y="370.6" width="0.9" height="0.9" fill="rgb(76,76,76)"/><rect x="613.9" y="366.9" width="0.4" height="0.4" fill="rgb(37,37,37)"/><rect x="618.9" y="371.6" width="0.5" height="0.5" fill="rgb(134,134,134)"/><rect x="613.4" y="366.2" width="0.8" height="0.8" fill="rgb(44,44,44)"/><rect x="613.2" y="367.8" width="0.8" height="0.8" fill="rgb(110,110,110)"/><rect x="610.0" y="365.7" width="0.6" height="0.6" fill="rgb(17,17,17)"/><rect x="611.9" y="372.7" width="0.7" height="0.7" fill="rgb(18,18,18)"/><rect x="614.7" y="372.1" width="0.4" height="0.4" fill="rgb(6,6,6)"/><rect x="612.7" y="368.5" width="0.8" height="0.8" fill="rgb(18,18,18)"/><rect x="614.4" y="362.6" width="0.6" height="0.6" fill="rgb(75,75,75)"/><rect x="619.0" y="367.9" width="0.6" height="0.6" fill="rgb(136,136,136)"/><rect x="614.0" y="374.4" width="0.6" height="0.6" fill="rgb(59,59,59)"/><rect x="612.3" y="372.4" width="0.8" height="0.8" fill="rgb(96,96,96)"/><rect x="617.0" y="373.9" width="0.8" height="0.8" fill="rgb(70,70,70)"/><rect x="615.1" y="366.9" width="0.7" height="0.7" fill="rgb(110,110,110)"/><rect x="615.3" y="363.3" width="0.4" height="0.4" fill="rgb(66,66,66)"/><rect x="613.8" y="372.7" width="0.6" height="0.6" fill="rgb(63,63,63)"/><rect x="609.9" y="366.9" width="0.8" height="0.8" fill="rgb(39,39,39)"/><rect x="614.1" y="370.1" width="0.5" height="0.5" fill="rgb(118,118,118)"/><rect x="615.7" y="367.4" width="0.6" height="0.6" fill="rgb(126,126,126)"/><rect x="618.4" y="363.1" width="0.9" height="0.9" fill="rgb(42,42,42)"/><rect x="616.6" y="369.1" width="0.7" height="0.7" fill="rgb(2,2,2)"/><rect x="614.2" y="371.9" width="0.7" height="0.7" fill="rgb(21,21,21)"/><rect x="616.6" y="370.3" width="0.4" height="0.4" fill="rgb(17,17,17)"/><rect x="618.7" y="371.3" width="0.8" height="0.8" fill="rgb(5,5,5)"/><rect x="616.2" y="362.6" width="0.7" height="0.7" fill="rgb(41,41,41)"/><rect x="614.9" y="367.2" width="0.4" height="0.4" fill="rgb(133,133,133)"/><rect x="615.4" y="374.0" width="0.8" height="0.8" fill="rgb(6,6,6)"/><rect x="618.4" y="370.8" width="0.5" height="0.5" fill="rgb(93,93,93)"/><rect x="613.2" y="366.0" width="0.6" height="0.6" fill="rgb(29,29,29)"/><rect x="617.5" y="364.6" width="0.7" height="0.7" fill="rgb(87,87,87)"/><rect x="619.8" y="370.2" width="0.8" height="0.8" fill="rgb(72,72,72)"/><rect x="610.9" y="365.9" width="0.8" height="0.8" fill="rgb(74,74,74)"/><rect x="613.7" y="372.2" width="0.5" height="0.5" fill="rgb(0,0,0)"/><rect x="608.4" y="367.3" width="0.8" height="0.8" fill="rgb(29,29,29)"/><rect x="609.9" y="367.8" width="0.7" height="0.7" fill="rgb(64,64,64)"/><rect x="609.2" y="367.7" width="0.8" height="0.8" fill="rgb(72,72,72)"/><rect x="615.5" y="363.3" width="0.5" height="0.5" fill="rgb(36,36,36)"/><rect x="613.1" y="371.0" width="0.6" height="0.6" fill="rgb(41,41,41)"/><rect x="619.6" y="368.0" width="0.6" height="0.6" fill="rgb(97,97,97)"/><rect x="615.9" y="367.2" width="0.7" height="0.7" fill="rgb(134,134,134)"/><rect x="610.1" y="372.2" width="0.8" height="0.8" fill="rgb(44,44,44)"/><rect x="617.8" y="372.5" width="0.6" height="0.6" fill="rgb(49,49,49)"/><rect x="609.2" y="369.2" width="0.8" height="0.8" fill="rgb(128,128,128)"/><rect x="614.6" y="366.2" width="0.6" height="0.6" fill="rgb(0,0,0)"/><rect x="615.3" y="371.1" width="0.5" height="0.5" fill="rgb(66,66,66)"/><rect x="617.6" y="371.7" width="0.6" height="0.6" fill="rgb(34,34,34)"/><rect x="613.3" y="365.5" width="0.4" height="0.4" fill="rgb(117,117,117)"/><rect x="614.5" y="362.2" width="0.5" height="0.5" fill="rgb(36,36,36)"/><rect x="613.7" y="366.4" width="0.9" height="0.9" fill="rgb(91,91,91)"/><rect x="613.6" y="367.9" width="0.5" height="0.5" fill="rgb(59,59,59)"/><rect x="616.0" y="367.8" width="0.7" height="0.7" fill="rgb(10,10,10)"/><rect x="619.5" y="367.0" width="0.8" height="0.8" fill="rgb(104,104,104)"/><rect x="615.5" y="370.4" width="0.4" height="0.4" fill="rgb(77,77,77)"/><rect x="616.2" y="369.1" width="0.5" height="0.5" fill="rgb(128,128,128)"/><rect x="614.9" y="365.3" width="0.9" height="0.9" fill="rgb(22,22,22)"/><rect x="616.4" y="370.6" width="0.8" height="0.8" fill="rgb(13,13,13)"/><rect x="615.3" y="363.9" width="0.8" height="0.8" fill="rgb(47,47,47)"/><rect x="615.5" y="368.4" width="0.8" height="0.8" fill="rgb(70,70,70)"/><rect x="614.6" y="366.0" width="0.5" height="0.5" fill="rgb(29,29,29)"/><rect x="617.4" y="364.1" width="0.5" height="0.5" fill="rgb(101,101,101)"/><rect x="618.1" y="369.1" width="0.5" height="0.5" fill="rgb(107,107,107)"/><rect x="613.4" y="363.3" width="0.5" height="0.5" fill="rgb(6,6,6)"/><rect x="611.2" y="364.3" width="0.4" height="0.4" fill="rgb(117,117,117)"/><rect x="616.9" y="366.2" width="0.7" height="0.7" fill="rgb(91,91,91)"/><rect x="618.6" y="365.9" width="0.7" height="0.7" fill="rgb(107,107,107)"/><rect x="613.7" y="368.1" width="0.7" height="0.7" fill="rgb(57,57,57)"/><rect x="612.7" y="371.1" width="0.5" height="0.5" fill="rgb(43,43,43)"/><rect x="614.2" y="362.1" width="0.6" height="0.6" fill="rgb(118,118,118)"/><rect x="617.2" y="370.9" width="0.8" height="0.8" fill="rgb(109,109,109)"/><rect x="612.8" y="369.2" width="0.9" height="0.9" fill="rgb(85,85,85)"/><rect x="612.7" y="365.6" width="0.5" height="0.5" fill="rgb(79,79,79)"/><rect x="609.3" y="371.4" width="0.7" height="0.7" fill="rgb(105,105,105)"/><rect x="609.6" y="365.9" width="0.5" height="0.5" fill="rgb(139,139,139)"/><rect x="610.5" y="366.0" width="0.5" height="0.5" fill="rgb(12,12,12)"/><rect x="612.9" y="363.0" width="0.7" height="0.7" fill="rgb(35,35,35)"/><rect x="608.9" y="368.5" width="0.7" height="0.7" fill="rgb(127,127,127)"/><rect x="619.1" y="371.1" width="0.4" height="0.4" fill="rgb(87,87,87)"/><rect x="613.3" y="367.9" width="0.6" height="0.6" fill="rgb(93,93,93)"/><rect x="615.1" y="367.3" width="0.7" height="0.7" fill="rgb(111,111,111)"/><rect x="618.7" y="372.0" width="0.9" height="0.9" fill="rgb(47,47,47)"/><rect x="614.8" y="369.8" width="0.5" height="0.5" fill="rgb(58,58,58)"/><rect x="612.7" y="362.1" width="0.7" height="0.7" fill="rgb(133,133,133)"/><rect x="610.1" y="370.4" width="0.4" height="0.4" fill="rgb(58,58,58)"/><rect x="615.8" y="368.2" width="0.8" height="0.8" fill="rgb(16,16,16)"/><rect x="613.1" y="372.0" width="0.7" height="0.7" fill="rgb(4,4,4)"/><rect x="618.2" y="371.3" width="0.6" height="0.6" fill="rgb(12,12,12)"/><rect x="611.0" y="368.4" width="0.9" height="0.9" fill="rgb(6,6,6)"/><rect x="614.8" y="369.0" width="0.7" height="0.7" fill="rgb(134,134,134)"/><rect x="614.6" y="366.7" width="0.7" height="0.7" fill="rgb(50,50,50)"/><rect x="619.4" y="367.3" width="0.7" height="0.7" fill="rgb(35,35,35)"/><rect x="610.5" y="369.7" width="0.6" height="0.6" fill="rgb(78,78,78)"/><rect x="617.2" y="369.9" width="0.9" height="0.9" fill="rgb(55,55,55)"/><rect x="608.9" y="367.8" width="0.8" height="0.8" fill="rgb(103,103,103)"/><rect x="610.6" y="371.6" width="0.5" height="0.5" fill="rgb(86,86,86)"/><rect x="616.5" y="368.4" width="0.5" height="0.5" fill="rgb(49,49,49)"/><rect x="614.2" y="367.5" width="0.8" height="0.8" fill="rgb(12,12,12)"/><rect x="620.3" y="366.1" width="0.7" height="0.7" fill="rgb(117,117,117)"/><rect x="617.7" y="366.6" width="0.8" height="0.8" fill="rgb(4,4,4)"/><rect x="615.2" y="363.3" width="0.8" height="0.8" fill="rgb(20,20,20)"/><rect x="617.9" y="370.1" width="0.7" height="0.7" fill="rgb(96,96,96)"/><rect x="616.1" y="371.9" width="0.9" height="0.9" fill="rgb(35,35,35)"/><rect x="617.0" y="362.3" width="0.7" height="0.7" fill="rgb(61,61,61)"/><rect x="611.1" y="370.0" width="0.5" height="0.5" fill="rgb(10,10,10)"/><rect x="613.9" y="369.8" width="0.8" height="0.8" fill="rgb(50,50,50)"/><rect x="617.3" y="364.9" width="0.8" height="0.8" fill="rgb(125,125,125)"/><rect x="613.5" y="364.5" width="0.5" height="0.5" fill="rgb(78,78,78)"/><rect x="612.3" y="373.5" width="0.4" height="0.4" fill="rgb(89,89,89)"/><rect x="612.4" y="371.1" width="0.7" height="0.7" fill="rgb(137,137,137)"/><rect x="617.4" y="367.8" width="0.9" height="0.9" fill="rgb(133,133,133)"/><rect x="610.1" y="367.4" width="0.5" height="0.5" fill="rgb(110,110,110)"/><rect x="608.9" y="368.5" width="0.9" height="0.9" fill="rgb(87,87,87)"/><rect x="613.0" y="364.1" width="0.5" height="0.5" fill="rgb(64,64,64)"/><rect x="616.0" y="368.7" width="0.9" height="0.9" fill="rgb(53,53,53)"/><rect x="616.8" y="370.9" width="0.4" height="0.4" fill="rgb(84,84,84)"/><rect x="614.6" y="370.3" width="0.7" height="0.7" fill="rgb(129,129,129)"/><rect x="619.4" y="368.5" width="0.7" height="0.7" fill="rgb(68,68,68)"/><rect x="614.1" y="368.2" width="0.6" height="0.6" fill="rgb(73,73,73)"/><rect x="611.1" y="373.7" width="0.6" height="0.6" fill="rgb(118,118,118)"/><rect x="616.4" y="362.9" width="0.6" height="0.6" fill="rgb(69,69,69)"/><rect x="615.2" y="366.9" width="0.5" height="0.5" fill="rgb(1,1,1)"/><rect x="610.5" y="368.2" width="0.9" height="0.9" fill="rgb(130,130,130)"/><rect x="611.1" y="370.4" width="0.5" height="0.5" fill="rgb(105,105,105)"/><rect x="612.4" y="367.8" width="0.8" height="0.8" fill="rgb(5,5,5)"/><rect x="615.6" y="371.6" width="0.9" height="0.9" fill="rgb(19,19,19)"/><rect x="613.8" y="373.6" width="0.6" height="0.6" fill="rgb(130,130,130)"/><rect x="616.7" y="368.4" width="0.6" height="0.6" fill="rgb(118,118,118)"/><rect x="618.2" y="370.9" width="0.8" height="0.8" fill="rgb(136,136,136)"/><rect x="614.6" y="367.3" width="0.6" height="0.6" fill="rgb(30,30,30)"/><rect x="616.0" y="369.7" width="0.8" height="0.8" fill="rgb(80,80,80)"/><rect x="616.3" y="370.2" width="0.4" height="0.4" fill="rgb(129,129,129)"/><rect x="614.3" y="364.1" width="0.9" height="0.9" fill="rgb(136,136,136)"/><rect x="615.1" y="370.6" width="0.5" height="0.5" fill="rgb(87,87,87)"/><rect x="610.9" y="365.7" width="0.8" height="0.8" fill="rgb(74,74,74)"/><rect x="612.3" y="372.5" width="0.9" height="0.9" fill="rgb(6,6,6)"/><rect x="612.6" y="368.2" width="0.8" height="0.8" fill="rgb(60,60,60)"/><rect x="616.8" y="363.8" width="0.9" height="0.9" fill="rgb(81,81,81)"/><rect x="609.0" y="364.4" width="0.8" height="0.8" fill="rgb(47,47,47)"/><rect x="619.3" y="371.9" width="0.4" height="0.4" fill="rgb(129,129,129)"/><rect x="618.7" y="366.0" width="0.9" height="0.9" fill="rgb(85,85,85)"/><rect x="614.3" y="363.6" width="0.5" height="0.5" fill="rgb(11,11,11)"/><rect x="614.3" y="364.4" width="0.5" height="0.5" fill="rgb(78,78,78)"/><rect x="614.0" y="370.5" width="0.8" height="0.8" fill="rgb(86,86,86)"/><rect x="614.3" y="362.4" width="0.6" height="0.6" fill="rgb(63,63,63)"/><rect x="611.4" y="369.3" width="0.8" height="0.8" fill="rgb(123,123,123)"/><rect x="612.9" y="373.0" width="0.5" height="0.5" fill="rgb(1,1,1)"/><rect x="612.2" y="363.1" width="0.6" height="0.6" fill="rgb(139,139,139)"/><rect x="613.7" y="365.1" width="0.8" height="0.8" fill="rgb(118,118,118)"/>
<rect x="633.9" y="370.8" width="0.9" height="0.9" fill="rgb(21,21,21)"/><rect x="628.0" y="368.6" width="1.0" height="1.0" fill="rgb(23,23,23)"/><rect x="634.4" y="369.4" width="1.1" height="1.1" fill="rgb(55,55,55)"/><rect x="626.5" y="368.8" width="0.6" height="0.6" fill="rgb(10,10,10)"/><rect x="634.4" y="368.9" width="1.0" height="1.0" fill="rgb(18,18,18)"/><rect x="630.9" y="368.1" width="0.6" height="0.6" fill="rgb(76,76,76)"/><rect x="631.3" y="367.7" width="1.1" height="1.1" fill="rgb(40,40,40)"/><rect x="625.9" y="366.3" width="1.0" height="1.0" fill="rgb(75,75,75)"/><rect x="629.2" y="365.1" width="0.7" height="0.7" fill="rgb(65,65,65)"/><rect x="627.9" y="369.8" width="1.2" height="1.2" fill="rgb(77,77,77)"/><rect x="631.2" y="366.5" width="1.0" height="1.0" fill="rgb(62,62,62)"/><rect x="634.0" y="369.2" width="1.0" height="1.0" fill="rgb(57,57,57)"/><rect x="628.2" y="369.1" width="1.1" height="1.1" fill="rgb(30,30,30)"/><rect x="629.1" y="365.0" width="0.9" height="0.9" fill="rgb(42,42,42)"/><rect x="625.8" y="367.2" width="0.8" height="0.8" fill="rgb(22,22,22)"/><rect x="627.4" y="368.7" width="0.7" height="0.7" fill="rgb(78,78,78)"/><rect x="626.3" y="367.0" width="0.9" height="0.9" fill="rgb(2,2,2)"/><rect x="627.9" y="368.7" width="0.7" height="0.7" fill="rgb(78,78,78)"/><rect x="628.4" y="366.7" width="0.6" height="0.6" fill="rgb(19,19,19)"/><rect x="628.4" y="369.4" width="0.7" height="0.7" fill="rgb(38,38,38)"/><rect x="629.9" y="369.6" width="1.1" height="1.1" fill="rgb(41,41,41)"/><rect x="631.4" y="366.1" width="0.7" height="0.7" fill="rgb(52,52,52)"/><rect x="625.9" y="367.1" width="1.3" height="1.3" fill="rgb(28,28,28)"/><rect x="632.0" y="367.4" width="1.1" height="1.1" fill="rgb(0,0,0)"/><rect x="632.5" y="366.9" width="0.9" height="0.9" fill="rgb(39,39,39)"/><rect x="629.3" y="368.3" width="1.1" height="1.1" fill="rgb(50,50,50)"/><rect x="632.5" y="368.5" width="1.3" height="1.3" fill="rgb(22,22,22)"/><rect x="629.5" y="369.6" width="0.9" height="0.9" fill="rgb(75,75,75)"/><rect x="632.1" y="368.2" width="0.8" height="0.8" fill="rgb(13,13,13)"/><rect x="628.7" y="367.8" width="1.1" height="1.1" fill="rgb(70,70,70)"/><rect x="631.2" y="368.2" width="0.7" height="0.7" fill="rgb(24,24,24)"/><rect x="632.6" y="369.5" width="0.9" height="0.9" fill="rgb(58,58,58)"/><rect x="636.6" y="368.5" width="0.9" height="0.9" fill="rgb(51,51,51)"/><rect x="633.0" y="369.8" width="1.2" height="1.2" fill="rgb(70,70,70)"/><rect x="631.4" y="368.5" width="1.2" height="1.2" fill="rgb(55,55,55)"/><rect x="630.9" y="367.6" width="1.0" height="1.0" fill="rgb(1,1,1)"/><rect x="631.0" y="365.5" width="0.8" height="0.8" fill="rgb(0,0,0)"/><rect x="630.7" y="364.8" width="1.0" height="1.0" fill="rgb(29,29,29)"/><rect x="627.8" y="369.5" width="1.3" height="1.3" fill="rgb(29,29,29)"/><rect x="631.3" y="371.0" width="0.9" height="0.9" fill="rgb(35,35,35)"/><rect x="628.5" y="369.5" width="1.3" height="1.3" fill="rgb(37,37,37)"/><rect x="632.8" y="367.2" width="0.9" height="0.9" fill="rgb(64,64,64)"/><rect x="635.4" y="368.4" width="1.1" height="1.1" fill="rgb(66,66,66)"/><rect x="636.0" y="367.5" width="1.0" height="1.0" fill="rgb(31,31,31)"/><rect x="634.4" y="368.8" width="0.8" height="0.8" fill="rgb(0,0,0)"/><rect x="633.0" y="368.2" width="1.3" height="1.3" fill="rgb(1,1,1)"/><rect x="627.3" y="369.1" width="1.1" height="1.1" fill="rgb(53,53,53)"/><rect x="629.8" y="367.7" width="1.2" height="1.2" fill="rgb(60,60,60)"/><rect x="627.0" y="367.3" width="1.2" height="1.2" fill="rgb(39,39,39)"/><rect x="627.4" y="367.4" width="1.1" height="1.1" fill="rgb(58,58,58)"/><rect x="628.0" y="369.5" width="0.9" height="0.9" fill="rgb(53,53,53)"/><rect x="626.4" y="368.9" width="1.3" height="1.3" fill="rgb(62,62,62)"/><rect x="628.8" y="368.4" width="0.9" height="0.9" fill="rgb(48,48,48)"/><rect x="634.1" y="368.9" width="1.2" height="1.2" fill="rgb(5,5,5)"/><rect x="633.8" y="367.2" width="1.3" height="1.3" fill="rgb(57,57,57)"/><rect x="630.4" y="365.5" width="0.9" height="0.9" fill="rgb(9,9,9)"/><rect x="634.4" y="366.4" width="1.1" height="1.1" fill="rgb(17,17,17)"/><rect x="627.4" y="367.3" width="0.9" height="0.9" fill="rgb(39,39,39)"/><rect x="625.0" y="367.5" width="1.0" height="1.0" fill="rgb(78,78,78)"/><rect x="632.0" y="367.7" width="1.1" height="1.1" fill="rgb(30,30,30)"/><rect x="627.9" y="366.2" width="1.1" height="1.1" fill="rgb(24,24,24)"/><rect x="629.8" y="366.4" width="1.1" height="1.1" fill="rgb(39,39,39)"/><rect x="627.7" y="365.0" width="0.8" height="0.8" fill="rgb(0,0,0)"/><rect x="633.8" y="367.4" width="1.1" height="1.1" fill="rgb(66,66,66)"/><rect x="632.9" y="367.3" width="1.3" height="1.3" fill="rgb(31,31,31)"/><rect x="630.6" y="365.3" width="0.9" height="0.9" fill="rgb(33,33,33)"/><rect x="629.0" y="368.5" width="0.9" height="0.9" fill="rgb(67,67,67)"/><rect x="635.9" y="370.0" width="1.2" height="1.2" fill="rgb(44,44,44)"/><rect x="629.5" y="366.7" width="1.1" height="1.1" fill="rgb(69,69,69)"/><rect x="628.2" y="368.7" width="0.8" height="0.8" fill="rgb(20,20,20)"/>
<rect x="649.6" y="364.4" width="0.9" height="0.9" fill="rgb(57,57,57)"/><rect x="647.5" y="368.1" width="0.9" height="0.9" fill="rgb(51,51,51)"/><rect x="648.8" y="371.6" width="0.8" height="0.8" fill="rgb(23,23,23)"/><rect x="647.2" y="364.9" width="1.1" height="1.1" fill="rgb(67,67,67)"/><rect x="647.0" y="368.2" width="1.2" height="1.2" fill="rgb(49,49,49)"/><rect x="644.0" y="365.7" width="1.0" height="1.0" fill="rgb(81,81,81)"/><rect x="652.3" y="368.2" width="1.0" height="1.0" fill="rgb(36,36,36)"/><rect x="651.3" y="364.8" width="1.0" height="1.0" fill="rgb(0,0,0)"/><rect x="645.5" y="365.6" width="1.0" height="1.0" fill="rgb(74,74,74)"/><rect x="650.5" y="371.9" width="0.8" height="0.8" fill="rgb(22,22,22)"/><rect x="648.5" y="368.3" width="0.8" height="0.8" fill="rgb(47,47,47)"/><rect x="648.9" y="367.4" width="0.8" height="0.8" fill="rgb(33,33,33)"/><rect x="645.8" y="365.6" width="1.1" height="1.1" fill="rgb(13,13,13)"/><rect x="650.6" y="369.0" width="1.1" height="1.1" fill="rgb(12,12,12)"/><rect x="651.2" y="369.4" width="0.6" height="0.6" fill="rgb(83,83,83)"/><rect x="647.0" y="366.4" width="0.9" height="0.9" fill="rgb(5,5,5)"/><rect x="649.3" y="369.3" width="1.2" height="1.2" fill="rgb(81,81,81)"/><rect x="647.5" y="363.5" width="1.0" height="1.0" fill="rgb(45,45,45)"/><rect x="645.8" y="364.9" width="0.9" height="0.9" fill="rgb(75,75,75)"/><rect x="646.5" y="370.9" width="1.1" height="1.1" fill="rgb(86,86,86)"/><rect x="645.9" y="370.7" width="0.9" height="0.9" fill="rgb(18,18,18)"/><rect x="644.9" y="372.1" width="0.7" height="0.7" fill="rgb(42,42,42)"/><rect x="646.6" y="371.8" width="1.1" height="1.1" fill="rgb(10,10,10)"/><rect x="645.8" y="368.0" width="1.1" height="1.1" fill="rgb(60,60,60)"/><rect x="647.8" y="370.1" width="0.8" height="0.8" fill="rgb(29,29,29)"/><rect x="650.9" y="364.4" width="1.2" height="1.2" fill="rgb(35,35,35)"/><rect x="645.9" y="368.5" width="0.9" height="0.9" fill="rgb(85,85,85)"/><rect x="649.7" y="369.7" width="0.7" height="0.7" fill="rgb(76,76,76)"/><rect x="646.6" y="371.5" width="0.6" height="0.6" fill="rgb(62,62,62)"/><rect x="643.1" y="367.4" width="1.1" height="1.1" fill="rgb(66,66,66)"/><rect x="647.2" y="370.2" width="1.0" height="1.0" fill="rgb(4,4,4)"/><rect x="651.1" y="366.1" width="0.9" height="0.9" fill="rgb(32,32,32)"/><rect x="650.3" y="369.7" width="1.1" height="1.1" fill="rgb(10,10,10)"/><rect x="650.6" y="370.6" width="0.9" height="0.9" fill="rgb(71,71,71)"/><rect x="643.1" y="370.9" width="1.2" height="1.2" fill="rgb(28,28,28)"/><rect x="644.1" y="367.0" width="0.9" height="0.9" fill="rgb(73,73,73)"/><rect x="646.3" y="363.0" width="0.8" height="0.8" fill="rgb(45,45,45)"/><rect x="644.3" y="367.0" width="0.6" height="0.6" fill="rgb(73,73,73)"/><rect x="646.0" y="368.3" width="1.2" height="1.2" fill="rgb(50,50,50)"/><rect x="647.1" y="363.0" width="1.0" height="1.0" fill="rgb(82,82,82)"/><rect x="649.7" y="369.0" width="0.7" height="0.7" fill="rgb(57,57,57)"/><rect x="647.6" y="368.5" width="0.7" height="0.7" fill="rgb(15,15,15)"/><rect x="644.6" y="367.1" width="0.9" height="0.9" fill="rgb(1,1,1)"/><rect x="645.7" y="367.7" width="0.7" height="0.7" fill="rgb(5,5,5)"/><rect x="649.1" y="370.6" width="0.7" height="0.7" fill="rgb(41,41,41)"/><rect x="649.4" y="371.9" width="1.2" height="1.2" fill="rgb(29,29,29)"/><rect x="652.0" y="370.6" width="0.7" height="0.7" fill="rgb(58,58,58)"/><rect x="647.4" y="364.2" width="1.2" height="1.2" fill="rgb(13,13,13)"/><rect x="646.4" y="362.3" width="1.2" height="1.2" fill="rgb(76,76,76)"/><rect x="644.4" y="369.3" width="1.2" height="1.2" fill="rgb(34,34,34)"/><rect x="647.5" y="368.6" width="0.7" height="0.7" fill="rgb(12,12,12)"/><rect x="649.5" y="366.8" width="0.8" height="0.8" fill="rgb(87,87,87)"/><rect x="646.6" y="364.9" width="0.7" height="0.7" fill="rgb(32,32,32)"/><rect x="646.2" y="373.5" width="0.9" height="0.9" fill="rgb(87,87,87)"/><rect x="647.2" y="368.5" width="1.2" height="1.2" fill="rgb(6,6,6)"/><rect x="648.3" y="363.9" width="0.8" height="0.8" fill="rgb(75,75,75)"/><rect x="642.9" y="370.5" width="1.0" height="1.0" fill="rgb(84,84,84)"/><rect x="649.6" y="366.6" width="1.1" height="1.1" fill="rgb(65,65,65)"/><rect x="647.2" y="367.5" width="1.1" height="1.1" fill="rgb(68,68,68)"/><rect x="647.9" y="369.2" width="0.6" height="0.6" fill="rgb(48,48,48)"/><rect x="651.0" y="371.3" width="0.9" height="0.9" fill="rgb(89,89,89)"/><rect x="647.3" y="364.7" width="0.7" height="0.7" fill="rgb(38,38,38)"/><rect x="643.8" y="364.4" width="1.2" height="1.2" fill="rgb(29,29,29)"/><rect x="651.1" y="368.5" width="1.1" height="1.1" fill="rgb(58,58,58)"/><rect x="648.8" y="363.0" width="1.0" height="1.0" fill="rgb(73,73,73)"/><rect x="650.8" y="372.0" width="1.1" height="1.1" fill="rgb(8,8,8)"/><rect x="649.3" y="371.8" width="0.8" height="0.8" fill="rgb(84,84,84)"/><rect x="646.9" y="371.5" width="1.0" height="1.0" fill="rgb(84,84,84)"/><rect x="645.8" y="373.1" width="1.1" height="1.1" fill="rgb(51,51,51)"/><rect x="651.7" y="366.0" width="1.1" height="1.1" fill="rgb(49,49,49)"/><rect x="649.0" y="368.4" width="1.1" height="1.1" fill="rgb(10,10,10)"/><rect x="646.0" y="365.7" width="0.9" height="0.9" fill="rgb(74,74,74)"/><rect x="649.6" y="363.8" width="0.9" height="0.9" fill="rgb(48,48,48)"/><rect x="652.1" y="367.4" width="1.0" height="1.0" fill="rgb(7,7,7)"/><rect x="648.0" y="367.7" width="0.7" height="0.7" fill="rgb(59,59,59)"/><rect x="648.7" y="372.5" width="1.1" height="1.1" fill="rgb(14,14,14)"/><rect x="651.6" y="364.6" width="1.1" height="1.1" fill="rgb(88,88,88)"/><rect x="648.2" y="364.4" width="1.2" height="1.2" fill="rgb(84,84,84)"/><rect x="647.2" y="367.0" width="0.9" height="0.9" fill="rgb(63,63,63)"/><rect x="646.5" y="369.2" width="0.9" height="0.9" fill="rgb(12,12,12)"/><rect x="646.4" y="368.0" width="1.1" height="1.1" fill="rgb(19,19,19)"/><rect x="648.3" y="367.4" width="1.0" height="1.0" fill="rgb(57,57,57)"/><rect x="648.5" y="372.0" width="1.0" height="1.0" fill="rgb(55,55,55)"/><rect x="648.5" y="371.1" width="1.2" height="1.2" fill="rgb(55,55,55)"/><rect x="647.4" y="370.6" width="1.2" height="1.2" fill="rgb(4,4,4)"/><rect x="644.3" y="368.5" width="0.9" height="0.9" fill="rgb(0,0,0)"/><rect x="650.9" y="371.2" width="0.9" height="0.9" fill="rgb(26,26,26)"/><rect x="647.0" y="368.3" width="0.7" height="0.7" fill="rgb(74,74,74)"/><rect x="647.6" y="366.1" width="0.8" height="0.8" fill="rgb(6,6,6)"/><rect x="646.0" y="371.3" width="1.1" height="1.1" fill="rgb(45,45,45)"/>
<circle cx="664.52" cy="368.4" r="5.5" fill="url(#cg)"/><rect x="666.9" y="363.8" width="1.1" height="1.1" fill="rgb(3,3,3)"/><rect x="666.6" y="370.8" width="0.7" height="0.7" fill="rgb(80,80,80)"/><rect x="664.3" y="367.9" width="1.4" height="1.4" fill="rgb(36,36,36)"/><rect x="661.1" y="366.9" width="0.7" height="0.7" fill="rgb(30,30,30)"/><rect x="661.2" y="370.7" width="1.2" height="1.2" fill="rgb(62,62,62)"/><rect x="665.0" y="370.2" width="1.3" height="1.3" fill="rgb(15,15,15)"/><rect x="661.8" y="370.5" width="1.4" height="1.4" fill="rgb(2,2,2)"/><rect x="663.0" y="365.4" width="1.0" height="1.0" fill="rgb(75,75,75)"/><rect x="666.8" y="369.9" width="0.9" height="0.9" fill="rgb(67,67,67)"/><rect x="663.6" y="365.6" width="0.7" height="0.7" fill="rgb(68,68,68)"/><rect x="663.0" y="364.8" width="1.2" height="1.2" fill="rgb(85,85,85)"/><rect x="664.0" y="371.5" width="1.2" height="1.2" fill="rgb(23,23,23)"/><rect x="665.5" y="366.6" width="1.4" height="1.4" fill="rgb(52,52,52)"/><rect x="668.4" y="367.0" width="1.2" height="1.2" fill="rgb(33,33,33)"/><rect x="660.7" y="368.6" width="1.2" height="1.2" fill="rgb(37,37,37)"/><rect x="665.2" y="367.0" width="1.0" height="1.0" fill="rgb(13,13,13)"/><rect x="665.1" y="369.7" width="0.6" height="0.6" fill="rgb(51,51,51)"/><rect x="662.2" y="366.1" width="1.2" height="1.2" fill="rgb(49,49,49)"/><rect x="663.8" y="367.3" width="0.9" height="0.9" fill="rgb(1,1,1)"/><rect x="666.5" y="371.8" width="0.7" height="0.7" fill="rgb(53,53,53)"/><rect x="661.3" y="370.3" width="1.3" height="1.3" fill="rgb(74,74,74)"/><rect x="668.8" y="366.9" width="0.9" height="0.9" fill="rgb(88,88,88)"/><rect x="664.2" y="366.2" width="0.9" height="0.9" fill="rgb(47,47,47)"/><rect x="664.3" y="367.1" width="1.3" height="1.3" fill="rgb(60,60,60)"/><rect x="662.0" y="366.6" width="0.9" height="0.9" fill="rgb(36,36,36)"/><rect x="663.4" y="365.3" width="1.2" height="1.2" fill="rgb(78,78,78)"/><rect x="664.0" y="367.8" width="1.4" height="1.4" fill="rgb(17,17,17)"/><rect x="665.1" y="365.8" width="0.8" height="0.8" fill="rgb(1,1,1)"/><rect x="661.2" y="369.5" width="0.6" height="0.6" fill="rgb(1,1,1)"/><rect x="662.9" y="372.2" width="1.2" height="1.2" fill="rgb(23,23,23)"/><rect x="661.9" y="369.2" width="1.2" height="1.2" fill="rgb(25,25,25)"/><rect x="662.4" y="370.3" width="0.8" height="0.8" fill="rgb(38,38,38)"/><rect x="664.2" y="365.2" width="0.6" height="0.6" fill="rgb(31,31,31)"/><rect x="662.7" y="367.3" width="0.9" height="0.9" fill="rgb(50,50,50)"/><rect x="663.0" y="368.7" width="1.3" height="1.3" fill="rgb(5,5,5)"/><rect x="664.6" y="367.5" width="1.0" height="1.0" fill="rgb(49,49,49)"/><rect x="661.0" y="369.6" width="1.3" height="1.3" fill="rgb(28,28,28)"/><rect x="665.2" y="368.3" width="1.3" height="1.3" fill="rgb(53,53,53)"/><rect x="664.2" y="365.6" width="0.9" height="0.9" fill="rgb(62,62,62)"/><rect x="659.9" y="366.1" width="0.7" height="0.7" fill="rgb(30,30,30)"/>
<rect x="679.1" y="362.3" width="1.1" height="1.1" fill="rgb(47,47,47)"/><rect x="683.1" y="370.8" width="1.0" height="1.0" fill="rgb(41,41,41)"/><rect x="680.3" y="369.6" width="0.9" height="0.9" fill="rgb(43,43,43)"/><rect x="679.6" y="362.0" width="1.0" height="1.0" fill="rgb(3,3,3)"/><rect x="681.0" y="365.7" width="1.3" height="1.3" fill="rgb(29,29,29)"/><rect x="680.4" y="368.1" width="0.9" height="0.9" fill="rgb(44,44,44)"/><rect x="676.5" y="369.2" width="1.3" height="1.3" fill="rgb(32,32,32)"/><rect x="680.7" y="367.9" width="1.0" height="1.0" fill="rgb(32,32,32)"/><rect x="684.5" y="369.9" width="0.8" height="0.8" fill="rgb(34,34,34)"/><rect x="680.3" y="370.8" width="1.1" height="1.1" fill="rgb(17,17,17)"/><rect x="682.1" y="371.9" width="1.2" height="1.2" fill="rgb(4,4,4)"/><rect x="681.4" y="367.8" width="0.9" height="0.9" fill="rgb(16,16,16)"/><rect x="678.8" y="370.5" width="1.4" height="1.4" fill="rgb(6,6,6)"/><rect x="677.9" y="365.9" width="0.9" height="0.9" fill="rgb(21,21,21)"/><rect x="676.6" y="369.7" width="1.3" height="1.3" fill="rgb(28,28,28)"/><rect x="682.3" y="368.9" width="1.4" height="1.4" fill="rgb(26,26,26)"/><rect x="678.3" y="370.9" width="0.7" height="0.7" fill="rgb(38,38,38)"/><rect x="680.3" y="366.8" width="1.0" height="1.0" fill="rgb(51,51,51)"/><rect x="680.4" y="371.8" width="1.0" height="1.0" fill="rgb(33,33,33)"/><rect x="678.9" y="369.4" width="1.4" height="1.4" fill="rgb(41,41,41)"/><rect x="682.5" y="367.8" width="1.1" height="1.1" fill="rgb(21,21,21)"/><rect x="681.9" y="365.6" width="1.2" height="1.2" fill="rgb(10,10,10)"/><rect x="678.9" y="367.1" width="1.4" height="1.4" fill="rgb(21,21,21)"/><rect x="683.4" y="366.7" width="1.0" height="1.0" fill="rgb(33,33,33)"/><rect x="683.5" y="365.7" width="1.4" height="1.4" fill="rgb(33,33,33)"/><rect x="679.8" y="366.8" width="1.4" height="1.4" fill="rgb(38,38,38)"/><rect x="679.5" y="365.7" width="1.3" height="1.3" fill="rgb(31,31,31)"/><rect x="678.6" y="373.6" width="1.3" height="1.3" fill="rgb(40,40,40)"/><rect x="682.4" y="363.8" width="1.0" height="1.0" fill="rgb(57,57,57)"/><rect x="683.3" y="365.2" width="1.0" height="1.0" fill="rgb(30,30,30)"/><rect x="684.4" y="369.4" width="1.4" height="1.4" fill="rgb(35,35,35)"/><rect x="677.1" y="369.2" width="0.7" height="0.7" fill="rgb(24,24,24)"/><rect x="680.6" y="372.3" width="1.0" height="1.0" fill="rgb(36,36,36)"/><rect x="682.5" y="366.1" width="0.8" height="0.8" fill="rgb(0,0,0)"/><rect x="681.9" y="364.8" width="1.1" height="1.1" fill="rgb(1,1,1)"/><rect x="680.4" y="367.7" width="1.4" height="1.4" fill="rgb(2,2,2)"/><rect x="679.5" y="371.0" width="1.2" height="1.2" fill="rgb(13,13,13)"/><rect x="678.5" y="364.1" width="1.5" height="1.5" fill="rgb(5,5,5)"/><rect x="680.5" y="368.9" width="0.9" height="0.9" fill="rgb(12,12,12)"/><rect x="684.4" y="369.0" width="0.9" height="0.9" fill="rgb(44,44,44)"/><rect x="682.2" y="363.1" width="0.7" height="0.7" fill="rgb(35,35,35)"/><rect x="682.4" y="364.2" width="1.2" height="1.2" fill="rgb(25,25,25)"/><rect x="681.8" y="364.4" width="1.0" height="1.0" fill="rgb(29,29,29)"/><rect x="679.4" y="368.1" width="1.2" height="1.2" fill="rgb(50,50,50)"/><rect x="680.6" y="367.7" width="1.0" height="1.0" fill="rgb(45,45,45)"/><rect x="682.3" y="370.5" width="1.2" height="1.2" fill="rgb(32,32,32)"/><rect x="680.4" y="368.0" width="1.3" height="1.3" fill="rgb(9,9,9)"/><rect x="678.3" y="365.5" width="1.3" height="1.3" fill="rgb(6,6,6)"/><rect x="684.0" y="366.9" width="1.4" height="1.4" fill="rgb(11,11,11)"/><rect x="680.1" y="364.8" width="1.3" height="1.3" fill="rgb(41,41,41)"/><rect x="677.0" y="371.2" width="1.1" height="1.1" fill="rgb(28,28,28)"/><rect x="680.2" y="366.3" width="1.4" height="1.4" fill="rgb(19,19,19)"/><rect x="681.5" y="367.1" width="0.8" height="0.8" fill="rgb(35,35,35)"/><rect x="680.8" y="371.3" width="0.9" height="0.9" fill="rgb(43,43,43)"/><rect x="680.5" y="363.2" width="0.8" height="0.8" fill="rgb(2,2,2)"/><rect x="680.0" y="367.3" width="1.3" height="1.3" fill="rgb(32,32,32)"/><rect x="684.0" y="365.5" width="1.2" height="1.2" fill="rgb(49,49,49)"/><rect x="679.1" y="367.9" width="0.7" height="0.7" fill="rgb(42,42,42)"/><rect x="679.0" y="364.0" width="1.1" height="1.1" fill="rgb(27,27,27)"/><rect x="682.5" y="366.5" width="0.8" height="0.8" fill="rgb(57,57,57)"/><rect x="680.7" y="361.7" width="1.5" height="1.5" fill="rgb(26,26,26)"/><rect x="682.0" y="370.9" width="1.1" height="1.1" fill="rgb(23,23,23)"/><rect x="680.7" y="365.6" width="1.5" height="1.5" fill="rgb(12,12,12)"/><rect x="679.9" y="373.4" width="0.9" height="0.9" fill="rgb(43,43,43)"/><rect x="680.3" y="371.0" width="1.1" height="1.1" fill="rgb(14,14,14)"/><rect x="682.3" y="362.1" width="1.4" height="1.4" fill="rgb(9,9,9)"/><rect x="682.8" y="368.3" width="1.3" height="1.3" fill="rgb(32,32,32)"/><rect x="684.8" y="366.2" width="1.2" height="1.2" fill="rgb(15,15,15)"/><rect x="680.2" y="368.3" width="1.0" height="1.0" fill="rgb(45,45,45)"/><rect x="680.1" y="369.4" width="1.1" height="1.1" fill="rgb(53,53,53)"/><rect x="680.1" y="367.0" width="1.0" height="1.0" fill="rgb(13,13,13)"/><rect x="681.5" y="364.9" width="1.1" height="1.1" fill="rgb(52,52,52)"/><rect x="679.7" y="370.9" width="1.5" height="1.5" fill="rgb(18,18,18)"/><rect x="677.6" y="366.8" width="1.0" height="1.0" fill="rgb(37,37,37)"/><rect x="677.1" y="370.5" width="1.1" height="1.1" fill="rgb(43,43,43)"/><rect x="677.6" y="365.7" width="1.0" height="1.0" fill="rgb(8,8,8)"/><rect x="679.6" y="370.0" width="0.7" height="0.7" fill="rgb(46,46,46)"/><rect x="678.0" y="367.2" width="1.3" height="1.3" fill="rgb(3,3,3)"/><rect x="683.2" y="371.6" width="0.7" height="0.7" fill="rgb(52,52,52)"/><rect x="676.1" y="367.4" width="1.4" height="1.4" fill="rgb(24,24,24)"/>
<rect x="563.2" y="387.4" width="0.8" height="0.8" fill="rgb(130,130,130)"/><rect x="563.5" y="378.7" width="0.8" height="0.8" fill="rgb(136,136,136)"/><rect x="564.3" y="381.8" width="0.7" height="0.7" fill="rgb(126,126,126)"/><rect x="569.0" y="382.5" width="0.7" height="0.7" fill="rgb(141,141,141)"/><rect x="566.6" y="387.2" width="0.9" height="0.9" fill="rgb(106,106,106)"/><rect x="564.6" y="383.4" width="0.8" height="0.8" fill="rgb(111,111,111)"/><rect x="561.4" y="382.3" width="0.4" height="0.4" fill="rgb(172,172,172)"/><rect x="563.3" y="384.9" width="0.6" height="0.6" fill="rgb(140,140,140)"/><rect x="564.5" y="384.0" width="0.4" height="0.4" fill="rgb(105,105,105)"/><rect x="563.1" y="383.1" width="0.8" height="0.8" fill="rgb(159,159,159)"/><rect x="562.6" y="388.0" width="0.5" height="0.5" fill="rgb(147,147,147)"/><rect x="563.7" y="383.8" width="0.7" height="0.7" fill="rgb(95,95,95)"/><rect x="567.1" y="384.3" width="0.9" height="0.9" fill="rgb(153,153,153)"/><rect x="565.3" y="389.7" width="0.7" height="0.7" fill="rgb(121,121,121)"/><rect x="563.1" y="380.4" width="0.7" height="0.7" fill="rgb(103,103,103)"/><rect x="568.9" y="383.8" width="0.6" height="0.6" fill="rgb(181,181,181)"/><rect x="566.3" y="385.1" width="0.5" height="0.5" fill="rgb(106,106,106)"/><rect x="563.8" y="385.2" width="0.5" height="0.5" fill="rgb(160,160,160)"/><rect x="567.5" y="385.6" width="0.6" height="0.6" fill="rgb(158,158,158)"/><rect x="564.4" y="388.3" width="0.5" height="0.5" fill="rgb(81,81,81)"/><rect x="565.7" y="383.3" width="0.5" height="0.5" fill="rgb(182,182,182)"/><rect x="562.7" y="387.7" width="0.5" height="0.5" fill="rgb(125,125,125)"/><rect x="567.3" y="381.2" width="0.8" height="0.8" fill="rgb(180,180,180)"/><rect x="564.6" y="385.5" width="0.5" height="0.5" fill="rgb(151,151,151)"/><rect x="562.7" y="384.3" width="0.8" height="0.8" fill="rgb(104,104,104)"/><rect x="562.9" y="383.5" width="0.5" height="0.5" fill="rgb(165,165,165)"/><rect x="566.0" y="389.8" width="0.8" height="0.8" fill="rgb(128,128,128)"/><rect x="563.6" y="385.5" width="0.5" height="0.5" fill="rgb(156,156,156)"/><rect x="562.6" y="387.8" width="0.6" height="0.6" fill="rgb(109,109,109)"/><rect x="566.5" y="389.3" width="0.6" height="0.6" fill="rgb(96,96,96)"/><rect x="565.1" y="384.4" width="0.5" height="0.5" fill="rgb(97,97,97)"/><rect x="561.0" y="383.3" width="0.4" height="0.4" fill="rgb(181,181,181)"/><rect x="563.3" y="379.9" width="0.6" height="0.6" fill="rgb(128,128,128)"/><rect x="565.5" y="385.9" width="0.8" height="0.8" fill="rgb(111,111,111)"/><rect x="567.8" y="381.8" width="0.9" height="0.9" fill="rgb(95,95,95)"/>
<circle cx="581.42" cy="385.4" r="5.8" fill="url(#cg)"/><rect x="576.4" y="387.6" width="0.7" height="0.7" fill="rgb(61,61,61)"/><rect x="584.8" y="385.5" width="0.8" height="0.8" fill="rgb(57,57,57)"/><rect x="580.9" y="389.6" width="0.6" height="0.6" fill="rgb(132,132,132)"/><rect x="583.4" y="382.7" width="0.6" height="0.6" fill="rgb(104,104,104)"/><rect x="580.6" y="386.2" width="0.9" height="0.9" fill="rgb(102,102,102)"/><rect x="580.7" y="387.2" width="0.9" height="0.9" fill="rgb(149,149,149)"/><rect x="578.6" y="388.5" width="0.6" height="0.6" fill="rgb(90,90,90)"/><rect x="578.7" y="383.7" width="0.9" height="0.9" fill="rgb(100,100,100)"/><rect x="582.3" y="385.4" width="0.7" height="0.7" fill="rgb(49,49,49)"/><rect x="577.0" y="383.7" width="0.9" height="0.9" fill="rgb(145,145,145)"/><rect x="577.2" y="381.9" width="0.6" height="0.6" fill="rgb(143,143,143)"/><rect x="584.7" y="383.1" width="1.0" height="1.0" fill="rgb(101,101,101)"/><rect x="579.5" y="385.7" width="0.8" height="0.8" fill="rgb(122,122,122)"/><rect x="582.5" y="379.5" width="0.8" height="0.8" fill="rgb(152,152,152)"/><rect x="580.8" y="385.3" width="0.8" height="0.8" fill="rgb(100,100,100)"/><rect x="581.5" y="382.9" width="0.5" height="0.5" fill="rgb(123,123,123)"/><rect x="582.9" y="390.1" width="0.8" height="0.8" fill="rgb(47,47,47)"/><rect x="576.1" y="384.4" width="0.6" height="0.6" fill="rgb(154,154,154)"/><rect x="582.5" y="385.5" width="0.9" height="0.9" fill="rgb(117,117,117)"/><rect x="576.6" y="381.6" width="0.6" height="0.6" fill="rgb(35,35,35)"/><rect x="578.2" y="384.3" width="0.7" height="0.7" fill="rgb(81,81,81)"/><rect x="582.8" y="383.2" width="0.9" height="0.9" fill="rgb(103,103,103)"/><rect x="579.9" y="390.8" width="0.7" height="0.7" fill="rgb(69,69,69)"/><rect x="582.6" y="389.5" width="0.9" height="0.9" fill="rgb(77,77,77)"/><rect x="584.2" y="388.0" width="0.7" height="0.7" fill="rgb(101,101,101)"/><rect x="581.1" y="385.1" width="0.5" height="0.5" fill="rgb(136,136,136)"/><rect x="581.8" y="384.3" width="0.6" height="0.6" fill="rgb(85,85,85)"/><rect x="582.2" y="382.5" width="1.1" height="1.1" fill="rgb(41,41,41)"/><rect x="581.7" y="384.5" width="0.9" height="0.9" fill="rgb(156,156,156)"/><rect x="580.1" y="379.3" width="0.7" height="0.7" fill="rgb(154,154,154)"/><rect x="582.9" y="383.5" width="1.0" height="1.0" fill="rgb(149,149,149)"/><rect x="581.6" y="388.1" width="1.0" height="1.0" fill="rgb(104,104,104)"/><rect x="583.9" y="383.3" width="0.8" height="0.8" fill="rgb(51,51,51)"/><rect x="580.3" y="390.7" width="0.7" height="0.7" fill="rgb(146,146,146)"/><rect x="582.4" y="381.1" width="0.7" height="0.7" fill="rgb(30,30,30)"/><rect x="584.8" y="388.5" width="1.1" height="1.1" fill="rgb(155,155,155)"/><rect x="580.0" y="390.8" width="0.8" height="0.8" fill="rgb(77,77,77)"/><rect x="585.4" y="382.0" width="0.9" height="0.9" fill="rgb(67,67,67)"/><rect x="582.5" y="386.2" width="0.7" height="0.7" fill="rgb(54,54,54)"/><rect x="578.7" y="383.9" width="0.6" height="0.6" fill="rgb(144,144,144)"/><rect x="581.1" y="385.2" width="0.5" height="0.5" fill="rgb(101,101,101)"/><rect x="585.1" y="385.9" width="0.5" height="0.5" fill="rgb(91,91,91)"/><rect x="578.2" y="382.4" width="0.6" height="0.6" fill="rgb(139,139,139)"/><rect x="586.0" y="383.9" width="1.1" height="1.1" fill="rgb(156,156,156)"/><rect x="578.4" y="388.0" width="0.7" height="0.7" fill="rgb(132,132,132)"/><rect x="582.1" y="386.9" width="0.8" height="0.8" fill="rgb(100,100,100)"/><rect x="584.0" y="385.0" width="0.5" height="0.5" fill="rgb(80,80,80)"/><rect x="581.8" y="384.2" width="0.8" height="0.8" fill="rgb(107,107,107)"/><rect x="582.4" y="382.6" width="0.9" height="0.9" fill="rgb(153,153,153)"/><rect x="585.0" y="384.3" width="0.7" height="0.7" fill="rgb(114,114,114)"/><rect x="580.4" y="380.2" width="0.9" height="0.9" fill="rgb(80,80,80)"/><rect x="580.5" y="382.2" width="0.6" height="0.6" fill="rgb(42,42,42)"/><rect x="579.4" y="384.5" width="0.7" height="0.7" fill="rgb(68,68,68)"/><rect x="578.6" y="387.3" width="1.1" height="1.1" fill="rgb(98,98,98)"/><rect x="578.0" y="384.0" width="0.8" height="0.8" fill="rgb(135,135,135)"/><rect x="577.3" y="384.5" width="0.7" height="0.7" fill="rgb(54,54,54)"/><rect x="581.3" y="386.2" width="0.7" height="0.7" fill="rgb(35,35,35)"/><rect x="577.6" y="387.2" width="0.6" height="0.6" fill="rgb(128,128,128)"/><rect x="576.9" y="386.4" width="0.8" height="0.8" fill="rgb(133,133,133)"/><rect x="580.4" y="383.7" width="0.8" height="0.8" fill="rgb(64,64,64)"/><rect x="581.0" y="382.0" width="0.6" height="0.6" fill="rgb(34,34,34)"/><rect x="582.4" y="385.0" width="0.7" height="0.7" fill="rgb(151,151,151)"/><rect x="584.1" y="386.1" width="0.8" height="0.8" fill="rgb(118,118,118)"/><rect x="582.3" y="379.1" width="0.7" height="0.7" fill="rgb(40,40,40)"/><rect x="581.1" y="385.2" width="0.7" height="0.7" fill="rgb(110,110,110)"/><rect x="582.0" y="384.3" width="0.7" height="0.7" fill="rgb(145,145,145)"/><rect x="578.5" y="383.4" width="0.5" height="0.5" fill="rgb(37,37,37)"/><rect x="582.0" y="389.5" width="0.5" height="0.5" fill="rgb(95,95,95)"/><rect x="581.1" y="385.0" width="0.7" height="0.7" fill="rgb(83,83,83)"/><rect x="577.2" y="381.8" width="0.9" height="0.9" fill="rgb(86,86,86)"/><rect x="578.8" y="388.8" width="0.8" height="0.8" fill="rgb(150,150,150)"/><rect x="576.9" y="384.2" width="0.9" height="0.9" fill="rgb(92,92,92)"/><rect x="576.5" y="385.2" width="0.9" height="0.9" fill="rgb(159,159,159)"/><rect x="579.6" y="388.4" width="1.1" height="1.1" fill="rgb(135,135,135)"/><rect x="578.7" y="384.2" width="0.6" height="0.6" fill="rgb(84,84,84)"/><rect x="578.1" y="386.6" width="0.7" height="0.7" fill="rgb(92,92,92)"/><rect x="579.9" y="384.4" width="0.9" height="0.9" fill="rgb(122,122,122)"/><rect x="581.9" y="387.3" width="0.5" height="0.5" fill="rgb(91,91,91)"/><rect x="579.5" y="382.0" width="0.9" height="0.9" fill="rgb(108,108,108)"/><rect x="581.8" y="385.2" width="0.8" height="0.8" fill="rgb(150,150,150)"/><rect x="580.2" y="381.7" width="0.7" height="0.7" fill="rgb(47,47,47)"/><rect x="578.0" y="380.9" width="0.7" height="0.7" fill="rgb(41,41,41)"/><rect x="580.1" y="389.7" width="1.0" height="1.0" fill="rgb(82,82,82)"/><rect x="583.5" y="383.1" width="0.5" height="0.5" fill="rgb(56,56,56)"/><rect x="584.8" y="382.0" width="0.6" height="0.6" fill="rgb(67,67,67)"/><rect x="578.3" y="387.4" width="0.5" height="0.5" fill="rgb(149,149,149)"/><rect x="578.8" y="384.7" width="0.5" height="0.5" fill="rgb(104,104,104)"/><rect x="585.3" y="382.9" width="1.0" height="1.0" fill="rgb(143,143,143)"/><rect x="580.7" y="384.3" width="0.7" height="0.7" fill="rgb(105,105,105)"/><rect x="579.4" y="386.2" width="0.5" height="0.5" fill="rgb(142,142,142)"/><rect x="579.7" y="382.7" width="0.8" height="0.8" fill="rgb(143,143,143)"/><rect x="583.8" y="388.6" width="0.6" height="0.6" fill="rgb(147,147,147)"/><rect x="582.9" y="379.4" width="0.7" height="0.7" fill="rgb(95,95,95)"/><rect x="579.6" y="387.5" width="1.1" height="1.1" fill="rgb(156,156,156)"/><rect x="586.6" y="384.8" width="0.8" height="0.8" fill="rgb(115,115,115)"/><rect x="583.7" y="383.0" width="1.1" height="1.1" fill="rgb(133,133,133)"/><rect x="580.3" y="387.9" width="0.9" height="0.9" fill="rgb(51,51,51)"/><rect x="581.1" y="387.1" width="0.6" height="0.6" fill="rgb(148,148,148)"/><rect x="586.2" y="384.9" width="0.8" height="0.8" fill="rgb(126,126,126)"/><rect x="579.7" y="381.8" width="0.8" height="0.8" fill="rgb(46,46,46)"/><rect x="581.2" y="388.0" width="0.7" height="0.7" fill="rgb(115,115,115)"/><rect x="581.0" y="387.2" width="1.0" height="1.0" fill="rgb(131,131,131)"/><rect x="585.7" y="382.9" width="0.6" height="0.6" fill="rgb(93,93,93)"/><rect x="583.7" y="380.5" width="0.6" height="0.6" fill="rgb(92,92,92)"/><rect x="580.9" y="384.9" width="0.6" height="0.6" fill="rgb(126,126,126)"/><rect x="579.3" y="381.9" width="0.8" height="0.8" fill="rgb(98,98,98)"/><rect x="580.3" y="385.8" width="0.9" height="0.9" fill="rgb(130,130,130)"/><rect x="576.3" y="387.0" width="1.0" height="1.0" fill="rgb(119,119,119)"/><rect x="583.2" y="379.5" width="0.5" height="0.5" fill="rgb(152,152,152)"/><rect x="576.1" y="386.5" width="0.9" height="0.9" fill="rgb(42,42,42)"/>
<rect x="596.7" y="384.4" width="1.1" height="1.1" fill="rgb(33,33,33)"/><rect x="595.9" y="386.3" width="1.2" height="1.2" fill="rgb(64,64,64)"/><rect x="596.3" y="389.5" width="0.7" height="0.7" fill="rgb(80,80,80)"/><rect x="593.7" y="381.9" width="1.0" height="1.0" fill="rgb(98,98,98)"/><rect x="596.4" y="381.8" width="1.0" height="1.0" fill="rgb(56,56,56)"/><rect x="596.9" y="387.1" width="1.2" height="1.2" fill="rgb(81,81,81)"/><rect x="601.9" y="384.0" width="1.0" height="1.0" fill="rgb(39,39,39)"/><rect x="596.2" y="380.7" width="1.3" height="1.3" fill="rgb(74,74,74)"/><rect x="596.1" y="386.5" width="0.6" height="0.6" fill="rgb(78,78,78)"/><rect x="595.2" y="386.3" width="0.6" height="0.6" fill="rgb(49,49,49)"/><rect x="599.2" y="383.6" width="1.1" height="1.1" fill="rgb(75,75,75)"/><rect x="595.5" y="381.7" width="0.8" height="0.8" fill="rgb(67,67,67)"/><rect x="592.5" y="382.0" width="1.0" height="1.0" fill="rgb(35,35,35)"/><rect x="601.0" y="382.7" width="0.8" height="0.8" fill="rgb(64,64,64)"/><rect x="598.3" y="386.1" width="1.2" height="1.2" fill="rgb(46,46,46)"/><rect x="598.1" y="383.3" width="0.9" height="0.9" fill="rgb(23,23,23)"/><rect x="598.9" y="381.2" width="0.9" height="0.9" fill="rgb(38,38,38)"/><rect x="597.9" y="386.5" width="1.1" height="1.1" fill="rgb(31,31,31)"/><rect x="599.8" y="386.7" width="0.9" height="0.9" fill="rgb(98,98,98)"/><rect x="595.2" y="386.7" width="1.3" height="1.3" fill="rgb(72,72,72)"/><rect x="594.9" y="385.8" width="0.8" height="0.8" fill="rgb(15,15,15)"/><rect x="593.6" y="385.8" width="0.7" height="0.7" fill="rgb(47,47,47)"/><rect x="599.5" y="388.5" width="0.8" height="0.8" fill="rgb(66,66,66)"/><rect x="598.2" y="382.1" width="0.9" height="0.9" fill="rgb(7,7,7)"/><rect x="598.4" y="388.8" width="1.2" height="1.2" fill="rgb(13,13,13)"/><rect x="603.1" y="384.1" width="0.9" height="0.9" fill="rgb(53,53,53)"/><rect x="596.5" y="382.8" width="0.9" height="0.9" fill="rgb(72,72,72)"/><rect x="594.5" y="385.2" width="1.0" height="1.0" fill="rgb(11,11,11)"/><rect x="595.5" y="385.5" width="0.7" height="0.7" fill="rgb(52,52,52)"/><rect x="596.5" y="381.5" width="0.9" height="0.9" fill="rgb(66,66,66)"/><rect x="592.5" y="387.8" width="0.7" height="0.7" fill="rgb(0,0,0)"/><rect x="593.5" y="383.1" width="0.9" height="0.9" fill="rgb(39,39,39)"/><rect x="596.4" y="386.4" width="1.2" height="1.2" fill="rgb(86,86,86)"/><rect x="596.9" y="388.7" width="0.9" height="0.9" fill="rgb(13,13,13)"/><rect x="597.0" y="381.2" width="1.3" height="1.3" fill="rgb(90,90,90)"/><rect x="599.4" y="383.9" width="0.7" height="0.7" fill="rgb(81,81,81)"/><rect x="601.1" y="387.8" width="0.7" height="0.7" fill="rgb(70,70,70)"/><rect x="598.2" y="385.1" width="1.2" height="1.2" fill="rgb(51,51,51)"/><rect x="591.9" y="386.6" width="1.1" height="1.1" fill="rgb(22,22,22)"/><rect x="596.8" y="382.2" width="0.9" height="0.9" fill="rgb(31,31,31)"/><rect x="598.0" y="387.3" width="0.8" height="0.8" fill="rgb(18,18,18)"/><rect x="599.5" y="382.9" width="1.0" height="1.0" fill="rgb(81,81,81)"/><rect x="596.8" y="383.5" width="1.3" height="1.3" fill="rgb(93,93,93)"/><rect x="598.8" y="382.7" width="1.2" height="1.2" fill="rgb(64,64,64)"/><rect x="600.2" y="385.4" width="1.1" height="1.1" fill="rgb(54,54,54)"/><rect x="602.2" y="383.2" width="1.2" height="1.2" fill="rgb(98,98,98)"/><rect x="594.7" y="389.7" width="0.6" height="0.6" fill="rgb(79,79,79)"/><rect x="600.5" y="386.8" width="0.9" height="0.9" fill="rgb(7,7,7)"/><rect x="594.4" y="381.3" width="0.8" height="0.8" fill="rgb(24,24,24)"/><rect x="598.2" y="381.5" width="0.6" height="0.6" fill="rgb(30,30,30)"/><rect x="599.6" y="384.3" width="0.8" height="0.8" fill="rgb(45,45,45)"/><rect x="601.4" y="381.6" width="0.9" height="0.9" fill="rgb(66,66,66)"/><rect x="598.3" y="385.1" width="0.9" height="0.9" fill="rgb(63,63,63)"/><rect x="597.7" y="385.2" width="1.2" height="1.2" fill="rgb(18,18,18)"/><rect x="598.5" y="385.4" width="0.7" height="0.7" fill="rgb(28,28,28)"/><rect x="593.9" y="383.0" width="0.8" height="0.8" fill="rgb(51,51,51)"/><rect x="595.8" y="388.4" width="0.7" height="0.7" fill="rgb(62,62,62)"/><rect x="603.3" y="385.0" width="0.7" height="0.7" fill="rgb(55,55,55)"/><rect x="598.8" y="387.9" width="0.8" height="0.8" fill="rgb(64,64,64)"/><rect x="598.4" y="379.6" width="1.3" height="1.3" fill="rgb(45,45,45)"/><rect x="595.2" y="384.2" width="0.8" height="0.8" fill="rgb(50,50,50)"/><rect x="598.1" y="384.7" width="1.1" height="1.1" fill="rgb(32,32,32)"/><rect x="595.8" y="383.7" width="1.1" height="1.1" fill="rgb(49,49,49)"/><rect x="596.6" y="388.0" width="0.6" height="0.6" fill="rgb(9,9,9)"/><rect x="598.3" y="384.5" width="0.9" height="0.9" fill="rgb(66,66,66)"/><rect x="603.2" y="386.3" width="0.7" height="0.7" fill="rgb(96,96,96)"/><rect x="594.0" y="386.5" width="1.0" height="1.0" fill="rgb(8,8,8)"/><rect x="592.7" y="384.6" width="1.2" height="1.2" fill="rgb(73,73,73)"/><rect x="597.1" y="383.9" width="0.9" height="0.9" fill="rgb(50,50,50)"/><rect x="602.4" y="386.3" width="0.7" height="0.7" fill="rgb(56,56,56)"/><rect x="597.3" y="386.2" width="1.3" height="1.3" fill="rgb(62,62,62)"/><rect x="597.1" y="380.9" width="1.0" height="1.0" fill="rgb(87,87,87)"/><rect x="600.2" y="386.1" width="0.8" height="0.8" fill="rgb(59,59,59)"/><rect x="593.2" y="388.5" width="0.8" height="0.8" fill="rgb(26,26,26)"/><rect x="601.6" y="382.7" width="0.9" height="0.9" fill="rgb(37,37,37)"/><rect x="597.4" y="383.5" width="1.1" height="1.1" fill="rgb(22,22,22)"/><rect x="597.7" y="384.1" width="1.2" height="1.2" fill="rgb(86,86,86)"/><rect x="598.8" y="385.0" width="1.2" height="1.2" fill="rgb(81,81,81)"/><rect x="596.2" y="389.7" width="1.0" height="1.0" fill="rgb(24,24,24)"/><rect x="596.6" y="382.3" width="0.7" height="0.7" fill="rgb(85,85,85)"/><rect x="597.2" y="383.1" width="0.9" height="0.9" fill="rgb(68,68,68)"/><rect x="596.2" y="386.4" width="1.0" height="1.0" fill="rgb(95,95,95)"/><rect x="599.2" y="386.0" width="0.9" height="0.9" fill="rgb(98,98,98)"/><rect x="597.6" y="384.9" width="1.0" height="1.0" fill="rgb(13,13,13)"/><rect x="597.9" y="386.1" width="0.9" height="0.9" fill="rgb(99,99,99)"/><rect x="600.1" y="384.2" width="1.2" height="1.2" fill="rgb(68,68,68)"/><rect x="602.6" y="387.5" width="0.8" height="0.8" fill="rgb(97,97,97)"/><rect x="601.3" y="389.0" width="1.0" height="1.0" fill="rgb(51,51,51)"/><rect x="598.9" y="387.9" width="1.1" height="1.1" fill="rgb(55,55,55)"/><rect x="601.0" y="384.3" width="1.2" height="1.2" fill="rgb(13,13,13)"/>
<circle cx="614.66" cy="385.4" r="5.5" fill="url(#cg)"/><rect x="613.9" y="381.0" width="0.9" height="0.9" fill="rgb(73,73,73)"/><rect x="609.4" y="386.3" width="0.6" height="0.6" fill="rgb(78,78,78)"/><rect x="616.7" y="381.6" width="0.7" height="0.7" fill="rgb(32,32,32)"/><rect x="614.6" y="382.2" width="0.5" height="0.5" fill="rgb(80,80,80)"/><rect x="617.6" y="388.9" width="0.9" height="0.9" fill="rgb(155,155,155)"/><rect x="613.7" y="383.8" width="0.7" height="0.7" fill="rgb(159,159,159)"/><rect x="617.0" y="385.2" width="0.5" height="0.5" fill="rgb(52,52,52)"/><rect x="613.8" y="389.2" width="0.4" height="0.4" fill="rgb(142,142,142)"/><rect x="613.1" y="385.8" width="0.5" height="0.5" fill="rgb(98,98,98)"/><rect x="612.4" y="388.0" width="0.5" height="0.5" fill="rgb(76,76,76)"/><rect x="613.5" y="385.0" width="0.7" height="0.7" fill="rgb(139,139,139)"/><rect x="613.3" y="384.4" width="0.8" height="0.8" fill="rgb(40,40,40)"/><rect x="614.4" y="385.2" width="0.7" height="0.7" fill="rgb(53,53,53)"/><rect x="614.0" y="386.0" width="0.9" height="0.9" fill="rgb(48,48,48)"/><rect x="612.0" y="380.6" width="0.7" height="0.7" fill="rgb(105,105,105)"/><rect x="611.7" y="389.4" width="0.8" height="0.8" fill="rgb(40,40,40)"/><rect x="614.0" y="383.9" width="0.7" height="0.7" fill="rgb(53,53,53)"/><rect x="610.0" y="385.4" width="0.8" height="0.8" fill="rgb(72,72,72)"/><rect x="617.2" y="386.0" width="0.9" height="0.9" fill="rgb(101,101,101)"/><rect x="610.7" y="381.7" width="0.8" height="0.8" fill="rgb(153,153,153)"/><rect x="618.7" y="383.6" width="0.9" height="0.9" fill="rgb(48,48,48)"/><rect x="613.9" y="389.6" width="0.7" height="0.7" fill="rgb(142,142,142)"/><rect x="614.8" y="382.7" width="0.5" height="0.5" fill="rgb(115,115,115)"/><rect x="617.0" y="387.3" width="0.6" height="0.6" fill="rgb(82,82,82)"/><rect x="611.9" y="381.6" width="0.8" height="0.8" fill="rgb(37,37,37)"/><rect x="617.8" y="382.1" width="0.9" height="0.9" fill="rgb(109,109,109)"/><rect x="610.9" y="380.6" width="0.8" height="0.8" fill="rgb(112,112,112)"/><rect x="614.5" y="385.1" width="0.8" height="0.8" fill="rgb(140,140,140)"/><rect x="613.0" y="386.2" width="0.7" height="0.7" fill="rgb(139,139,139)"/><rect x="614.4" y="384.0" width="0.5" height="0.5" fill="rgb(57,57,57)"/><rect x="614.1" y="382.9" width="0.9" height="0.9" fill="rgb(83,83,83)"/><rect x="615.5" y="387.9" width="0.5" height="0.5" fill="rgb(144,144,144)"/><rect x="617.3" y="385.5" width="0.6" height="0.6" fill="rgb(34,34,34)"/><rect x="615.2" y="390.8" width="0.9" height="0.9" fill="rgb(84,84,84)"/><rect x="618.1" y="381.0" width="0.9" height="0.9" fill="rgb(124,124,124)"/><rect x="611.0" y="383.5" width="0.8" height="0.8" fill="rgb(108,108,108)"/><rect x="615.7" y="384.7" width="0.9" height="0.9" fill="rgb(128,128,128)"/><rect x="609.5" y="387.0" width="0.6" height="0.6" fill="rgb(80,80,80)"/><rect x="609.2" y="382.4" width="0.5" height="0.5" fill="rgb(140,140,140)"/><rect x="611.3" y="380.4" width="0.6" height="0.6" fill="rgb(116,116,116)"/><rect x="618.4" y="381.5" width="0.8" height="0.8" fill="rgb(139,139,139)"/><rect x="611.9" y="382.4" width="0.5" height="0.5" fill="rgb(97,97,97)"/><rect x="620.1" y="384.4" width="0.4" height="0.4" fill="rgb(69,69,69)"/><rect x="614.8" y="390.4" width="0.5" height="0.5" fill="rgb(129,129,129)"/><rect x="615.0" y="387.3" width="1.0" height="1.0" fill="rgb(46,46,46)"/><rect x="612.4" y="383.9" width="0.9" height="0.9" fill="rgb(38,38,38)"/><rect x="613.3" y="383.1" width="1.0" height="1.0" fill="rgb(72,72,72)"/><rect x="614.0" y="384.6" width="1.0" height="1.0" fill="rgb(112,112,112)"/><rect x="618.5" y="382.8" width="0.4" height="0.4" fill="rgb(126,126,126)"/><rect x="613.0" y="386.1" width="0.9" height="0.9" fill="rgb(116,116,116)"/><rect x="613.8" y="385.6" width="0.8" height="0.8" fill="rgb(37,37,37)"/><rect x="614.4" y="385.7" width="0.5" height="0.5" fill="rgb(127,127,127)"/><rect x="613.7" y="391.0" width="0.6" height="0.6" fill="rgb(133,133,133)"/><rect x="613.9" y="380.8" width="0.8" height="0.8" fill="rgb(48,48,48)"/><rect x="617.0" y="380.1" width="0.7" height="0.7" fill="rgb(54,54,54)"/><rect x="615.9" y="385.9" width="1.0" height="1.0" fill="rgb(71,71,71)"/><rect x="613.8" y="388.7" width="0.4" height="0.4" fill="rgb(132,132,132)"/><rect x="614.9" y="382.9" width="0.4" height="0.4" fill="rgb(146,146,146)"/><rect x="616.2" y="380.6" width="0.5" height="0.5" fill="rgb(154,154,154)"/><rect x="613.9" y="384.6" width="1.0" height="1.0" fill="rgb(120,120,120)"/><rect x="616.5" y="390.0" width="0.8" height="0.8" fill="rgb(112,112,112)"/><rect x="615.9" y="385.3" width="0.9" height="0.9" fill="rgb(31,31,31)"/><rect x="614.5" y="385.7" width="0.7" height="0.7" fill="rgb(47,47,47)"/><rect x="614.9" y="381.9" width="0.9" height="0.9" fill="rgb(148,148,148)"/><rect x="615.9" y="384.8" width="0.6" height="0.6" fill="rgb(133,133,133)"/><rect x="611.5" y="390.1" width="0.6" height="0.6" fill="rgb(111,111,111)"/><rect x="614.2" y="389.7" width="0.6" height="0.6" fill="rgb(84,84,84)"/><rect x="613.5" y="380.1" width="0.5" height="0.5" fill="rgb(52,52,52)"/><rect x="615.4" y="389.7" width="0.8" height="0.8" fill="rgb(123,123,123)"/><rect x="615.0" y="383.3" width="0.7" height="0.7" fill="rgb(30,30,30)"/><rect x="612.0" y="388.3" width="0.6" height="0.6" fill="rgb(133,133,133)"/><rect x="615.0" y="388.0" width="0.8" height="0.8" fill="rgb(58,58,58)"/><rect x="613.0" y="382.7" width="0.4" height="0.4" fill="rgb(43,43,43)"/><rect x="611.3" y="380.8" width="0.8" height="0.8" fill="rgb(142,142,142)"/><rect x="611.7" y="380.7" width="0.9" height="0.9" fill="rgb(107,107,107)"/><rect x="613.0" y="384.9" width="0.5" height="0.5" fill="rgb(41,41,41)"/><rect x="616.5" y="386.9" width="0.6" height="0.6" fill="rgb(103,103,103)"/><rect x="615.2" y="383.1" width="0.9" height="0.9" fill="rgb(138,138,138)"/><rect x="615.8" y="388.8" width="0.5" height="0.5" fill="rgb(38,38,38)"/><rect x="614.8" y="386.9" width="0.4" height="0.4" fill="rgb(33,33,33)"/><rect x="616.1" y="379.9" width="0.9" height="0.9" fill="rgb(39,39,39)"/><rect x="619.6" y="385.9" width="0.6" height="0.6" fill="rgb(74,74,74)"/><rect x="613.3" y="381.7" width="0.6" height="0.6" fill="rgb(49,49,49)"/><rect x="617.6" y="388.0" width="0.9" height="0.9" fill="rgb(34,34,34)"/><rect x="615.0" y="388.7" width="0.6" height="0.6" fill="rgb(93,93,93)"/><rect x="612.4" y="385.1" width="0.5" height="0.5" fill="rgb(84,84,84)"/><rect x="614.8" y="383.9" width="0.7" height="0.7" fill="rgb(135,135,135)"/><rect x="611.9" y="383.8" width="1.0" height="1.0" fill="rgb(131,131,131)"/><rect x="616.6" y="385.0" width="0.7" height="0.7" fill="rgb(88,88,88)"/><rect x="616.5" y="381.6" width="0.7" height="0.7" fill="rgb(96,96,96)"/><rect x="616.4" y="383.5" width="0.5" height="0.5" fill="rgb(52,52,52)"/><rect x="614.2" y="385.8" width="1.0" height="1.0" fill="rgb(102,102,102)"/><rect x="615.2" y="382.0" width="0.7" height="0.7" fill="rgb(59,59,59)"/><rect x="616.7" y="383.2" width="0.6" height="0.6" fill="rgb(126,126,126)"/><rect x="618.4" y="380.7" width="0.7" height="0.7" fill="rgb(85,85,85)"/><rect x="615.8" y="382.5" width="0.5" height="0.5" fill="rgb(92,92,92)"/><rect x="613.5" y="386.9" width="0.9" height="0.9" fill="rgb(75,75,75)"/><rect x="612.8" y="383.5" width="0.5" height="0.5" fill="rgb(131,131,131)"/><rect x="615.0" y="380.5" width="0.8" height="0.8" fill="rgb(52,52,52)"/><rect x="609.0" y="384.9" width="0.9" height="0.9" fill="rgb(106,106,106)"/><rect x="613.5" y="384.1" width="0.4" height="0.4" fill="rgb(139,139,139)"/><rect x="616.3" y="385.3" width="0.6" height="0.6" fill="rgb(121,121,121)"/><rect x="612.4" y="379.9" width="1.0" height="1.0" fill="rgb(65,65,65)"/><rect x="614.4" y="386.2" width="0.6" height="0.6" fill="rgb(43,43,43)"/><rect x="618.1" y="384.1" width="0.7" height="0.7" fill="rgb(37,37,37)"/><rect x="615.9" y="383.9" width="0.9" height="0.9" fill="rgb(56,56,56)"/><rect x="614.1" y="386.3" width="0.7" height="0.7" fill="rgb(66,66,66)"/><rect x="610.3" y="383.1" width="0.5" height="0.5" fill="rgb(47,47,47)"/><rect x="611.5" y="384.8" width="0.7" height="0.7" fill="rgb(77,77,77)"/><rect x="614.8" y="385.9" width="0.8" height="0.8" fill="rgb(112,112,112)"/><rect x="612.7" y="381.2" width="0.7" height="0.7" fill="rgb(55,55,55)"/><rect x="617.4" y="383.2" width="0.7" height="0.7" fill="rgb(63,63,63)"/><rect x="610.1" y="389.2" width="0.6" height="0.6" fill="rgb(134,134,134)"/><rect x="617.2" y="387.9" width="0.6" height="0.6" fill="rgb(60,60,60)"/><rect x="613.3" y="387.7" width="0.8" height="0.8" fill="rgb(82,82,82)"/><rect x="615.1" y="383.9" width="0.9" height="0.9" fill="rgb(86,86,86)"/><rect x="615.1" y="382.4" width="0.6" height="0.6" fill="rgb(146,146,146)"/><rect x="611.3" y="381.5" width="0.7" height="0.7" fill="rgb(122,122,122)"/><rect x="618.7" y="383.6" width="1.0" height="1.0" fill="rgb(75,75,75)"/><rect x="612.6" y="390.1" width="0.9" height="0.9" fill="rgb(145,145,145)"/>
<ellipse cx="626.8" cy="382.9" rx="1.2" ry="0.9" fill="#3b9a2c"/><ellipse cx="629.0" cy="385.3" rx="1.2" ry="0.9" fill="#3b9a2c"/><ellipse cx="631.2" cy="385.3" rx="1.2" ry="0.9" fill="#3b9a2c"/><ellipse cx="633.4" cy="387.7" rx="1.2" ry="0.9" fill="#3b9a2c"/><ellipse cx="635.6" cy="387.7" rx="1.2" ry="0.9" fill="#3b9a2c"/>
<path d="M643.4 381.4 Q646.9 378.9 647.9 380.9 Q648.9 378.9 652.4 381.4 Q653.9 386.4 651.9 391.4 Q647.9 392.9 643.9 391.4 Q641.9 386.4 643.4 381.4 Z" fill="#4f9a3e"/>
<path d="M645.4 382.4 Q644.4 387.4 646.4 390.4" stroke="#a8e090" stroke-width="1" fill="none"/><path d="M649.9 387.4 Q650.9 390.4 648.9 391.4" stroke="#8a4a30" stroke-width="1.4" fill="none" opacity="0.6"/><rect x="647.1999999999999" y="376.9" width="1.4" height="3.5" fill="#2a5a1a"/>
<rect x="571.4" y="291.7" width="1.3" height="1.3" fill="#1a2a90"/>
<rect x="588.0" y="291.7" width="1.3" height="1.3" fill="#1a2a90"/>
<rect x="604.6" y="291.7" width="1.3" height="1.3" fill="#1a2a90"/>
<rect x="621.3" y="291.7" width="1.3" height="1.3" fill="#1a2a90"/>
<rect x="637.9" y="291.7" width="1.3" height="1.3" fill="#1a2a90"/>
<rect x="654.5" y="291.7" width="1.3" height="1.3" fill="#1a2a90"/>
<rect x="671.1" y="291.7" width="1.3" height="1.3" fill="#1a2a90"/>
<rect x="687.7" y="291.7" width="1.3" height="1.3" fill="#1a2a90"/>
<rect x="571.4" y="308.9" width="1.3" height="1.3" fill="#1a2a90"/>
<rect x="588.0" y="308.9" width="1.3" height="1.3" fill="#1a2a90"/>
<rect x="604.6" y="308.9" width="1.3" height="1.3" fill="#c02020"/>
<rect x="621.3" y="308.9" width="1.3" height="1.3" fill="#c02020"/>
<rect x="637.9" y="308.9" width="1.3" height="1.3" fill="#c02020"/>
<rect x="654.5" y="308.9" width="1.3" height="1.3" fill="#c02020"/>
<rect x="671.1" y="308.9" width="1.3" height="1.3" fill="#c02020"/>
<rect x="687.7" y="308.9" width="1.3" height="1.3" fill="#c02020"/>
<rect x="571.4" y="325.6" width="1.3" height="1.3" fill="#333"/>
<rect x="588.0" y="325.6" width="1.3" height="1.3" fill="#333"/>
<rect x="604.6" y="325.6" width="1.3" height="1.3" fill="#333"/>
<rect x="621.3" y="325.6" width="1.3" height="1.3" fill="#333"/>
<rect x="637.9" y="325.6" width="1.3" height="1.3" fill="#333"/>
<rect x="654.5" y="325.6" width="1.3" height="1.3" fill="#333"/>
<rect x="671.1" y="325.6" width="1.3" height="1.3" fill="#333"/>
<rect x="687.7" y="325.6" width="1.3" height="1.3" fill="#333"/>
<rect x="571.4" y="342.0" width="1.3" height="1.3" fill="#333"/>
<rect x="588.0" y="342.0" width="1.3" height="1.3" fill="#333"/>
<rect x="604.6" y="342.0" width="1.3" height="1.3" fill="#333"/>
<rect x="621.3" y="342.0" width="1.3" height="1.3" fill="#333"/>
<rect x="637.9" y="342.0" width="1.3" height="1.3" fill="#333"/>
<rect x="654.5" y="342.0" width="1.3" height="1.3" fill="#333"/>
<rect x="671.1" y="342.0" width="1.3" height="1.3" fill="#333"/>
<rect x="687.7" y="342.0" width="1.3" height="1.3" fill="#333"/>
<rect x="571.4" y="358.5" width="1.3" height="1.3" fill="#c02020"/>
<rect x="588.0" y="358.5" width="1.3" height="1.3" fill="#c02020"/>
<rect x="604.6" y="358.5" width="1.3" height="1.3" fill="#333"/>
<rect x="621.3" y="358.5" width="1.3" height="1.3" fill="#c02020"/>
<rect x="637.9" y="358.5" width="1.3" height="1.3" fill="#c02020"/>
<rect x="654.5" y="358.5" width="1.3" height="1.3" fill="#333"/>
<rect x="671.1" y="358.5" width="1.3" height="1.3" fill="#c02020"/>
<rect x="687.7" y="358.5" width="1.3" height="1.3" fill="#c02020"/>
<rect x="571.4" y="375.1" width="1.3" height="1.3" fill="#c02020"/>
<rect x="588.0" y="375.1" width="1.3" height="1.3" fill="#333"/>
<rect x="604.6" y="375.1" width="1.3" height="1.3" fill="#c02020"/>
<rect x="621.3" y="375.1" width="1.3" height="1.3" fill="#c02020"/>
<rect x="637.9" y="375.1" width="1.3" height="1.3" fill="#333"/>
<rect x="654.5" y="375.1" width="1.3" height="1.3" fill="#c02020"/>
<rect x="671.1" y="375.1" width="1.3" height="1.3" fill="#c02020"/>
<rect x="687.7" y="375.1" width="1.3" height="1.3" fill="#333"/>
<rect x="571.4" y="392.1" width="1.3" height="1.3" fill="#333"/>
<rect x="588.0" y="392.1" width="1.3" height="1.3" fill="#c02020"/>
<rect x="604.6" y="392.1" width="1.3" height="1.3" fill="#c02020"/>
<rect x="621.3" y="392.1" width="1.3" height="1.3" fill="#333"/>
<rect x="637.9" y="392.1" width="1.3" height="1.3" fill="#c02020"/>
<rect x="654.5" y="392.1" width="1.3" height="1.3" fill="#c02020"/>
</svg>
<!-- basic combo -->
<div class="a" style="left:556.2px;top:405.5px;width:141.3px;height:10.4px;border:0.8px solid #cfccc7;border-radius:1.5px;background:#fff"></div>
<div class="t" style="left:558.2px;top:407.67px;font-size:7.01px;color:#2e2e2e;transform:scaleX(0.885);transform-origin:0 0">Basic,</div>
<svg class="a" style="left:688.5px;top:408.8px" width="6" height="5" viewBox="0 0 6 5"><path d="M1 1 L5 1 L3 3.6 Z" fill="#333"/></svg>
<!-- spacing -->
<div class="a" style="left:556px;top:417.4px;width:141.5px;height:14.4px;border:0.9px solid #4a4a4a;background:#fff"></div>
<div class="a" style="left:556.9px;top:418.3px;width:6px;height:12.6px;background:#8caed2"></div>
<div class="t" style="left:557.3px;top:421.46px;font-size:7.12px;color:#f4f8fc;transform:scaleX(0.885);transform-origin:0 0">S</div><div class="t" style="left:560.9px;top:421.46px;font-size:7.12px;color:#2e2e2e;transform:scaleX(0.885);transform-origin:0 0">pacing</div>
<div class="t" style="left:676.5px;top:421.46px;font-size:7.12px;color:#2e2e2e;transform:scaleX(0.885);transform-origin:0 0">10,0</div>
<div class="a" style="left:689.8px;top:418.3px;width:0.6px;height:12.6px;background:#ddd"></div>
<svg class="a" style="left:691.6px;top:420.6px" width="4" height="8" viewBox="0 0 4 8"><path d="M0.7 2.9 L2 1.5 L3.3 2.9 M0.7 5.1 L2 6.5 L3.3 5.1" fill="none" stroke="#888" stroke-width="0.7"/></svg>
<!-- brush bottom buttons -->
<svg class="a" style="left:565.5px;top:435px" width="8" height="8" viewBox="0 0 8 8"><rect x="0.8" y="0.8" width="6.4" height="6.4" rx="1.3" fill="none" stroke="#555" stroke-width="1"/><path d="M3 1 V7 M3 4.5 H6" stroke="#555" stroke-width="0.8"/></svg>
<svg class="a" style="left:594px;top:435px" width="8" height="8" viewBox="0 0 8 8"><rect x="0.7" y="0.7" width="6.6" height="6.6" rx="1.2" fill="none" stroke="#444" stroke-width="0.9"/><path d="M4 2 V6 M2 4 H6" stroke="#444" stroke-width="0.9"/></svg>
<svg class="a" style="left:622.5px;top:435px" width="8" height="8" viewBox="0 0 8 8"><rect x="0.5" y="0.5" width="5" height="5" fill="#5a7fb8" stroke="#445" stroke-width="0.6"/><rect x="2.5" y="2.5" width="5" height="5" fill="#445a80" stroke="#334" stroke-width="0.6"/></svg>
<svg class="a" style="left:651px;top:435px" width="8" height="8" viewBox="0 0 8 8"><rect x="0.5" y="1" width="7" height="6.5" rx="1" fill="#d8d8d8"/><path d="M2 2.5 L4 1.2 L6 2.5" stroke="#f4f4f4" stroke-width="0.6" fill="none"/></svg>
<svg class="a" style="left:679px;top:435px" width="8" height="8" viewBox="0 0 8 8"><path d="M6.5 4.2 A2.7 2.7 0 1 1 5 1.6" fill="none" stroke="#444" stroke-width="1"/><path d="M4 0.3 L6.6 1.4 L4.6 3.2 Z" fill="#444"/></svg>


<!-- bottom border -->
<div class="a" style="left:0;top:447px;width:700px;height:2px;background:#cfcdc9"></div>
</body></html>
